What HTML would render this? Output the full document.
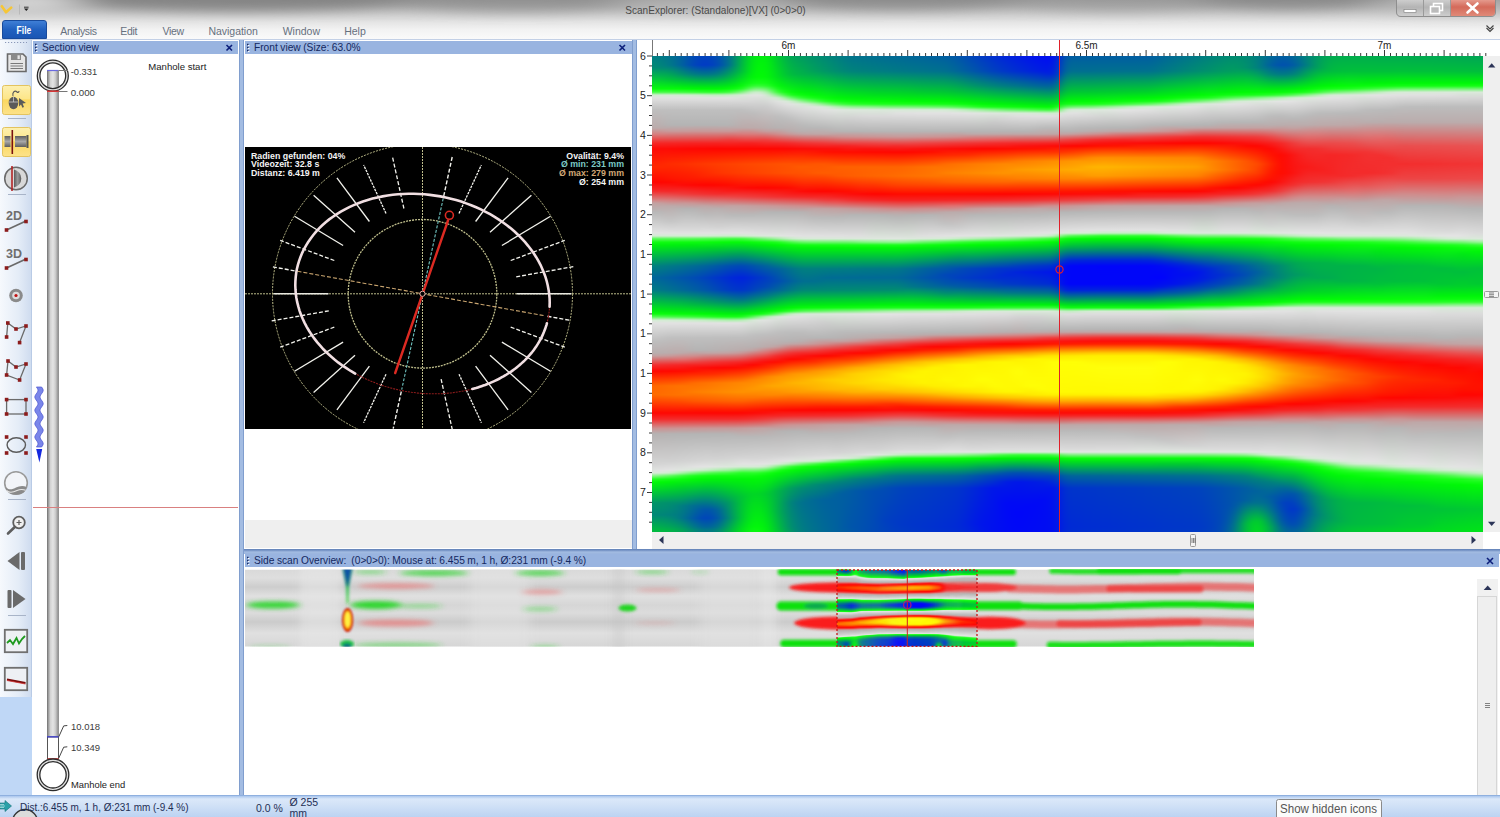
<!DOCTYPE html>
<html><head><meta charset="utf-8"><title>ScanExplorer</title>
<style>
*{box-sizing:border-box;margin:0;padding:0}
html,body{width:1500px;height:817px;overflow:hidden;background:#fff;font-family:"Liberation Sans",sans-serif;}
.a{position:absolute}
#title{left:0;top:0;width:1500px;height:40px;background:linear-gradient(#9c9c9c 0px,#aeaeae 6px,#cbcbcb 14px,#e4e4e4 22px,#f3f3f3 30px,#fbfbfb 40px);}
#ttext{left:0;top:3px;width:1430px;text-align:center;font-size:11px;color:#3a3a3a;letter-spacing:0.1px}
.menu{top:25px;font-size:10.5px;color:#66707e;letter-spacing:-0.35px}
#file{left:2px;top:20px;width:45px;height:19px;border-radius:3px 3px 0 0;background:linear-gradient(#3f7fd6,#2161c0 50%,#1a56b4);border:1px solid #174a9c;color:#fff;font-size:10.8px;letter-spacing:-0.4px;text-align:center;line-height:18px;}
#tb{left:0;top:40px;width:32px;height:657px;background:linear-gradient(90deg,#f6f9fd,#e4ecf7 60%,#cfdcef);border-right:1px solid #b9cbe6}
#tbb{left:0;top:697px;width:32px;height:98px;background:#bfd7f6}
.hdr{height:13px;background:#99b4e0;color:#14285f;font-size:10.2px;word-spacing:-0.3px;line-height:14px;white-space:nowrap;overflow:hidden}
.hdr span{position:absolute;left:9px;top:0}
.vs{width:5px;background:linear-gradient(90deg,#6f8fc4,#a3bce2 30%,#a3bce2 70%,#6f8fc4)}
.hs{height:5px;background:linear-gradient(#5f7fb5,#7f9ccc 35%,#a3bce2 60%,#9ab4de)}
.lbl{font-size:10.5px;color:#333;white-space:nowrap}
#status{left:0;top:795px;width:1500px;height:22px;background:linear-gradient(#a9c6ee 0,#dbe8f9 3px,#cfe0f6 50%,#bcd3f2);border-top:1px solid #8fb0df;font-size:12px;color:#1c2e5a}
</style></head><body>
<div class="a" id="title"></div>
<svg class="a" style="left:0;top:0" width="1500" height="40" viewBox="0 0 1500 40"><defs><filter id="tb1" x="-10%" y="-100%" width="120%" height="300%"><feGaussianBlur stdDeviation="22 6"/></filter><linearGradient id="fade" x1="0" y1="0" x2="0" y2="1"><stop offset="0" stop-color="#fff" stop-opacity="0"/><stop offset="0.55" stop-color="#fff" stop-opacity="0.55"/><stop offset="1" stop-color="#fff" stop-opacity="0.95"/></linearGradient></defs><g filter="url(#tb1)"><ellipse cx="30" cy="2" rx="50" ry="10" fill="#dadada" opacity="0.90"/><ellipse cx="240" cy="-2" rx="170" ry="13" fill="#7e7e7e" opacity="0.80"/><ellipse cx="520" cy="0" rx="120" ry="12" fill="#8a8a8a" opacity="0.60"/><ellipse cx="700" cy="3" rx="90" ry="10" fill="#b8b8b8" opacity="0.60"/><ellipse cx="900" cy="-2" rx="120" ry="12" fill="#858585" opacity="0.65"/><ellipse cx="1120" cy="0" rx="110" ry="12" fill="#9a9a9a" opacity="0.50"/><ellipse cx="1290" cy="-2" rx="90" ry="12" fill="#808080" opacity="0.60"/><ellipse cx="1440" cy="4" rx="60" ry="10" fill="#c0c0c0" opacity="0.60"/></g></svg>
<svg class="a" style="left:600px;top:0" width="240" height="20" font-family="Liberation Sans, sans-serif"><text x="25.3" y="14.4" font-size="10.2" fill="#4a4a4a" textLength="180.4" lengthAdjust="spacingAndGlyphs">ScanExplorer: (Standalone)[VX] (0&gt;0&gt;0)</text></svg>
<div class="a" id="file"></div><svg class="a" style="left:2px;top:20px" width="45" height="19" font-family="Liberation Sans, sans-serif"><text x="14.6" y="13.9" font-size="11.5" font-weight="bold" fill="#fff" textLength="14.6" lengthAdjust="spacingAndGlyphs">File</text></svg>
<div class="a menu" style="left:60.3px">Analysis</div>
<div class="a menu" style="left:120.3px">Edit</div>
<div class="a menu" style="left:162.5px">View</div>
<div class="a menu" style="left:208.4px;letter-spacing:-0.02px">Navigation</div>
<div class="a menu" style="left:282.7px;letter-spacing:0">Window</div>
<div class="a menu" style="left:344.3px;letter-spacing:-0.05px">Help</div>
<svg class="a" style="left:1390px;top:0" width="110" height="40" viewBox="1390 0 110 40"><defs><linearGradient id="cb" x1="0" y1="0" x2="0" y2="1"><stop offset="0" stop-color="#e9a79b"/><stop offset="0.5" stop-color="#d46a5a"/><stop offset="1" stop-color="#e08a78"/></linearGradient><linearGradient id="nb" x1="0" y1="0" x2="0" y2="1"><stop offset="0" stop-color="#d4d4d4"/><stop offset="0.5" stop-color="#b4b4b4"/><stop offset="1" stop-color="#cfcfcf"/></linearGradient></defs><path d="M1396.5 -2 V12 Q1396.5 16.5 1401 16.5 H1491 Q1495.5 16.5 1495.5 12 V-2Z" fill="url(#nb)" stroke="#8e8e8e" stroke-width="1"/><path d="M1450 -2 V16 H1491 Q1495 16 1495 12 V-2Z" fill="url(#cb)"/><path d="M1423.5 0 V16 M1450.5 0 V16" stroke="#9a9a9a" stroke-width="1"/><rect x="1404" y="9.5" width="12" height="3" fill="#fff" stroke="#7a7a7a" stroke-width="0.6"/><rect x="1433.5" y="3.5" width="9" height="7" fill="none" stroke="#fff" stroke-width="1.6"/><rect x="1430.5" y="6.5" width="9" height="7" fill="#bcbcbc" stroke="#fff" stroke-width="1.6"/><path d="M1467.5 3.5 L1477.5 12.5 M1477.5 3.5 L1467.5 12.5" stroke="#fff" stroke-width="2.6" stroke-linecap="round"/><path d="M1486.5 28 l3.5 3.5 l3.5 -3.5" stroke="#444" stroke-width="1.2" fill="none"/><path d="M1486.5 25.5 l3.5 3.5 l3.5 -3.5" stroke="#444" stroke-width="1.2" fill="none"/></svg><svg class="a" style="left:0;top:0" width="40" height="20" viewBox="0 0 40 20"><path d="M1.8 6.2 L6 12.3 L11.2 7.6" stroke="#f6c636" stroke-width="2.6" fill="none" stroke-linecap="round" stroke-linejoin="round"/><path d="M19.5 4.5 V14.5" stroke="#b8b8b8" stroke-width="1"/><path d="M24 7.2 H28.6" stroke="#333" stroke-width="1"/><path d="M24 8.6 L26.3 11 L28.6 8.6Z" fill="#222"/></svg>
<div class="a" style="left:0;top:39px;width:1500px;height:1px;background:#c3d0e6"></div>
<div class="a" id="tb"></div><div class="a" id="tbb"></div>
<svg class="a" style="left:0;top:40px" width="32" height="660" viewBox="0 40 32 660" font-family="Liberation Sans, sans-serif"><defs><linearGradient id="yb" x1="0" y1="0" x2="0" y2="1"><stop offset="0" stop-color="#fdf0b0"/><stop offset="0.45" stop-color="#fde68a"/><stop offset="0.5" stop-color="#fbd860"/><stop offset="1" stop-color="#fce28a"/></linearGradient><linearGradient id="gg" x1="0" y1="0" x2="1" y2="0"><stop offset="0" stop-color="#5a5a5a"/><stop offset="0.5" stop-color="#9a9a9a"/><stop offset="1" stop-color="#5a5a5a"/></linearGradient><linearGradient id="gv" x1="0" y1="0" x2="0" y2="1"><stop offset="0" stop-color="#5e5e5e"/><stop offset="0.5" stop-color="#a8a8a8"/><stop offset="1" stop-color="#5e5e5e"/></linearGradient></defs><path d="M5 42.5 H27" stroke="#8a98b8" stroke-width="1.2" stroke-dasharray="1.2 1.8"/><path d="M7.5 54 H23 L26 57 V71.5 H7.5Z" fill="#e6e6e6" stroke="#6a6a6a" stroke-width="1.6"/><rect x="11" y="54.5" width="10" height="5.5" fill="#8a8a8a"/><rect x="17.5" y="55.3" width="2.3" height="3.8" fill="#e6e6e6"/><path d="M10.5 63.5H23M10.5 66H23M10.5 68.5H23" stroke="#7a7a7a" stroke-width="1.1"/><rect x="2.5" y="85.5" width="28" height="29" rx="2" fill="url(#yb)" stroke="#e3c35f"/><ellipse cx="13.5" cy="103" rx="4.8" ry="6.2" fill="#5a5a5a"/><path d="M13.5 97 V102 M9 102 H18" stroke="#c8c8c8" stroke-width="0.8"/><path d="M13 96 C12 92 15 90 17 92 C18 93 19 92 19 91" stroke="#5a5a5a" stroke-width="1.1" fill="none"/><path d="M19 98 L26 103 L22.6 103.6 L24 107 L22.4 107.7 L21 104.4 L19 106.5Z" fill="#5a5a5a"/><path d="M8 118.5 H26" stroke="#a8b4c8" stroke-width="1"/><rect x="2.5" y="127.5" width="28" height="29" rx="2" fill="url(#yb)" stroke="#e3c35f"/><rect x="4.5" y="136" width="6" height="11" fill="url(#gv)"/><rect x="15" y="136" width="11.5" height="11" fill="url(#gv)"/><rect x="26.5" y="135" width="2" height="13" fill="#555"/><path d="M12.3 130 V154" stroke="#7a1010" stroke-width="1.6"/><circle cx="16" cy="178.5" r="11.3" fill="#d8d8d8" stroke="#6a6a6a" stroke-width="1.5"/><path d="M14 169.5 A9.2 9.2 0 0 1 14 187.5Z" fill="url(#gg)"/><path d="M12 166 V191" stroke="#b01818" stroke-width="1.5"/><path d="M8 194.5 H26" stroke="#a8b4c8" stroke-width="1"/><text x="6" y="220" font-size="12.5" font-weight="bold" fill="#6e6e6e">2D</text><path d="M6.5 230 L26 221" stroke="#6a6a6a" stroke-width="1.7"/><rect x="4.7" y="228.2" width="3.6" height="3.6" fill="#8c1c1c"/><rect x="24.2" y="219.7" width="3.6" height="3.6" fill="#8c1c1c"/><text x="6" y="258" font-size="12.5" font-weight="bold" fill="#6e6e6e">3D</text><path d="M6.5 268 L26 259" stroke="#6a6a6a" stroke-width="1.7"/><rect x="4.7" y="266.2" width="3.6" height="3.6" fill="#8c1c1c"/><rect x="24.2" y="257.7" width="3.6" height="3.6" fill="#8c1c1c"/><circle cx="16" cy="295.5" r="6.8" fill="#8a8a8a"/><circle cx="16" cy="295.5" r="3.8" fill="#dcdcdc"/><circle cx="16" cy="295.5" r="1.6" fill="#c01010"/><path d="M6.6 337 L7.8 323 L16 329 L26 326 L19.6 342.6" stroke="#6a6a6a" stroke-width="1.3" fill="none"/><rect x="4.8" y="335.2" width="3.6" height="3.6" fill="#8c1c1c"/><rect x="6.0" y="321.2" width="3.6" height="3.6" fill="#8c1c1c"/><rect x="14.2" y="327.2" width="3.6" height="3.6" fill="#8c1c1c"/><rect x="24.2" y="324.2" width="3.6" height="3.6" fill="#8c1c1c"/><rect x="17.8" y="340.8" width="3.6" height="3.6" fill="#8c1c1c"/><path d="M6.6 375 L8 361 L16 367 L26 364 L19.6 380Z" stroke="#6a6a6a" stroke-width="1.3" fill="none"/><rect x="4.8" y="373.2" width="3.6" height="3.6" fill="#8c1c1c"/><rect x="6.2" y="359.2" width="3.6" height="3.6" fill="#8c1c1c"/><rect x="14.2" y="365.2" width="3.6" height="3.6" fill="#8c1c1c"/><rect x="24.2" y="362.2" width="3.6" height="3.6" fill="#8c1c1c"/><rect x="17.8" y="378.2" width="3.6" height="3.6" fill="#8c1c1c"/><rect x="6.6" y="399.6" width="19.4" height="14.4" stroke="#6a6a6a" stroke-width="1.3" fill="none"/><rect x="4.8" y="397.8" width="3.6" height="3.6" fill="#8c1c1c"/><rect x="24.2" y="397.8" width="3.6" height="3.6" fill="#8c1c1c"/><rect x="4.8" y="412.2" width="3.6" height="3.6" fill="#8c1c1c"/><rect x="24.2" y="412.2" width="3.6" height="3.6" fill="#8c1c1c"/><ellipse cx="16.3" cy="445" rx="9.2" ry="7.2" stroke="#5a5a5a" stroke-width="1.4" fill="none"/><rect x="4.8" y="435.2" width="3.6" height="3.6" fill="#8c1c1c"/><rect x="24.2" y="435.2" width="3.6" height="3.6" fill="#8c1c1c"/><rect x="4.8" y="451.2" width="3.6" height="3.6" fill="#8c1c1c"/><rect x="24.2" y="451.2" width="3.6" height="3.6" fill="#8c1c1c"/><circle cx="16" cy="483" r="11.3" fill="#f2f4f8" stroke="#9a9a9a" stroke-width="1.6"/><path d="M5.5 487 C9 491 13 489 16 487.5 C19 486 23 485 26.5 487 L25 491 C22 496 10 496 7 491Z" fill="#8a8a8a"/><path d="M6.5 490.5 C10 494 14 492 17 490.5 C20 489.3 23 489.3 25.6 490.3" stroke="#e8e8e8" stroke-width="1.1" fill="none"/><path d="M8 499.5 H26" stroke="#a8b4c8" stroke-width="1"/><circle cx="19" cy="522.5" r="5.8" fill="#f0f0f0" stroke="#5e5e5e" stroke-width="1.8"/><path d="M14.8 527 L8 533.5" stroke="#5e5e5e" stroke-width="2.6" stroke-linecap="round"/><path d="M16.5 522.5 H21.5 M19 520 V525" stroke="#5e5e5e" stroke-width="1.2"/><path d="M7.5 561 L19.5 552 V570Z" fill="#6a6a6a"/><rect x="21" y="552" width="4" height="18" rx="1" fill="#6a6a6a"/><rect x="7.5" y="590" width="4" height="18" rx="1" fill="#6a6a6a"/><path d="M25.5 599 L13 590 V608Z" fill="#6a6a6a"/><path d="M8 615.5 H26" stroke="#a8b4c8" stroke-width="1"/><rect x="4.8" y="629.8" width="22.4" height="22.4" fill="#eef0f4" stroke="#707070" stroke-width="1.8"/><path d="M7 643 L10 640 L13 644 L16.5 638 L19 643.5 L22 639 L25 636" stroke="#1e9a1e" stroke-width="1.8" fill="none"/><rect x="4.8" y="667.8" width="22.4" height="22.4" fill="#eef0f4" stroke="#707070" stroke-width="1.8"/><path d="M7 679.5 L25.5 683" stroke="#7a0c0c" stroke-width="2"/><path d="M7 680.5 L25.5 684" stroke="#d03030" stroke-width="0.8"/></svg>
<!-- section view -->
<div class="a hdr" style="left:33px;top:41px;width:205px"><span>Section view</span></div>
<svg class="a" style="left:32px;top:54px" width="207" height="741" viewBox="32 54 207 741" font-family="Liberation Sans, sans-serif"><defs><linearGradient id="pg" x1="0" y1="0" x2="1" y2="0"><stop offset="0" stop-color="#6e6e6e"/><stop offset="0.12" stop-color="#9c9c9c"/><stop offset="0.3" stop-color="#d4d4d4"/><stop offset="0.5" stop-color="#e4e4e4"/><stop offset="0.7" stop-color="#cfcfcf"/><stop offset="0.88" stop-color="#a4a4a4"/><stop offset="1" stop-color="#6e6e6e"/></linearGradient></defs><rect x="47" y="70.5" width="11.8" height="666.2" fill="url(#pg)"/><path d="M47 70.5 H58.5" stroke="#6a6ae0" stroke-width="1.2"/><circle cx="52.8" cy="75.7" r="14.3" fill="none" stroke="#e2e2e2" stroke-width="2.4"/><circle cx="52.8" cy="75.7" r="15.5" fill="none" stroke="#2c2c2c" stroke-width="1.3"/><circle cx="52.8" cy="75.7" r="12.9" fill="none" stroke="#2c2c2c" stroke-width="1.3"/><path d="M47 91.2 H58.8" stroke="#e03030" stroke-width="1.4"/><path d="M58.5 70.5 H68 M59 91.5 H67.5" stroke="#777" stroke-width="1" fill="none"/><rect x="47.5" y="737" width="11" height="22" fill="#fff" stroke="#444" stroke-width="0.9"/><path d="M47 736.8 H58.8" stroke="#4040d0" stroke-width="1.3"/><path d="M47.5 759 H58.5" stroke="#e03030" stroke-width="1.5"/><circle cx="53" cy="774.8" r="14.5" fill="none" stroke="#e2e2e2" stroke-width="2.4"/><circle cx="53" cy="774.8" r="15.8" fill="none" stroke="#2c2c2c" stroke-width="1.3"/><circle cx="53" cy="774.8" r="13.2" fill="none" stroke="#2c2c2c" stroke-width="1.3"/><path d="M58.8 736.7 L63.7 725.9 L67.3 725.5 M58.8 758 L63.7 747.2 L67.3 746.8" stroke="#444" stroke-width="1" fill="none"/><text x="70.7" y="75.2" font-size="8.6" fill="#3c3c3c" textLength="26.5" lengthAdjust="spacingAndGlyphs">-0.331</text><text x="70.7" y="95.6" font-size="8.6" fill="#3c3c3c" textLength="24.3" lengthAdjust="spacingAndGlyphs">0.000</text><text x="148.3" y="69.5" font-size="9.6" fill="#222" textLength="58.0" lengthAdjust="spacingAndGlyphs">Manhole start</text><text x="71.0" y="730.2" font-size="8.6" fill="#3c3c3c" textLength="29.0" lengthAdjust="spacingAndGlyphs">10.018</text><text x="71.0" y="751.2" font-size="8.6" fill="#3c3c3c" textLength="29.0" lengthAdjust="spacingAndGlyphs">10.349</text><text x="71.0" y="788.0" font-size="9.6" fill="#222" textLength="54.3" lengthAdjust="spacingAndGlyphs">Manhole end</text><path d="M33 507.5 H238" stroke="#d98080" stroke-width="1"/><path d="M36.4 387.0 L37.1 388.0 L37.7 389.0 L38.0 390.0 L37.9 391.0 L37.5 392.0 L36.9 393.0 L36.1 394.0 L35.5 395.0 L35.0 396.0 L34.8 397.0 L35.0 398.0 L35.5 399.0 L36.1 400.0 L36.9 401.0 L37.5 402.0 L37.9 403.0 L38.0 404.0 L37.7 405.0 L37.1 406.0 L36.4 407.0 L35.7 408.0 L35.1 409.0 L34.8 410.0 L34.9 411.0 L35.3 412.0 L35.9 413.0 L36.7 414.0 L37.3 415.0 L37.8 416.0 L38.0 417.0 L37.8 418.0 L37.3 419.0 L36.7 420.0 L35.9 421.0 L35.3 422.0 L34.9 423.0 L34.8 424.0 L35.1 425.0 L35.7 426.0 L36.4 427.0 L37.1 428.0 L37.7 429.0 L38.0 430.0 L37.9 431.0 L37.5 432.0 L36.9 433.0 L36.1 434.0 L35.5 435.0 L35.0 436.0 L34.8 437.0 L35.0 438.0 L35.5 439.0 L36.1 440.0 L36.9 441.0 L37.5 442.0 L37.9 443.0 L38.0 444.0 L37.7 445.0 L37.1 446.0 L36.4 447.0 L41.6 447.0 L42.3 446.0 L42.9 445.0 L43.2 444.0 L43.1 443.0 L42.7 442.0 L42.1 441.0 L41.3 440.0 L40.7 439.0 L40.2 438.0 L40.0 437.0 L40.2 436.0 L40.7 435.0 L41.3 434.0 L42.1 433.0 L42.7 432.0 L43.1 431.0 L43.2 430.0 L42.9 429.0 L42.3 428.0 L41.6 427.0 L40.9 426.0 L40.3 425.0 L40.0 424.0 L40.1 423.0 L40.5 422.0 L41.1 421.0 L41.9 420.0 L42.5 419.0 L43.0 418.0 L43.2 417.0 L43.0 416.0 L42.5 415.0 L41.9 414.0 L41.1 413.0 L40.5 412.0 L40.1 411.0 L40.0 410.0 L40.3 409.0 L40.9 408.0 L41.6 407.0 L42.3 406.0 L42.9 405.0 L43.2 404.0 L43.1 403.0 L42.7 402.0 L42.1 401.0 L41.3 400.0 L40.7 399.0 L40.2 398.0 L40.0 397.0 L40.2 396.0 L40.7 395.0 L41.3 394.0 L42.1 393.0 L42.7 392.0 L43.1 391.0 L43.2 390.0 L42.9 389.0 L42.3 388.0 L41.6 387.0 Z" fill="#7a86ea" stroke="#4a55d0" stroke-width="0.7"/><path d="M36.2 449 L42.2 449 L39.4 462.5Z" fill="#1428e0"/></svg>
<div class="a vs" style="left:239px;top:40px;height:755px"></div>
<!-- front view -->
<div class="a hdr" style="left:245px;top:41px;width:387px"><span>Front view (Size: 63.0%</span></div>
<div class="a" style="left:245px;top:520px;width:387px;height:28px;background:#efefef"></div>
<svg class="a" style="left:245px;top:147px" width="386" height="282" viewBox="245 147 386 282" font-family="Liberation Sans, sans-serif"><rect x="245" y="147" width="386" height="282" fill="#000"/><path d="M245 293.8 H631 M422.5 147 V429" stroke="#bdbc8a" stroke-width="1" stroke-dasharray="2 1" fill="none"/><circle cx="422.5" cy="293.8" r="150" fill="none" stroke="#bdbc8a" stroke-width="1" stroke-dasharray="2 1.2"/><circle cx="422.5" cy="293.8" r="74.3" fill="none" stroke="#bdbc8a" stroke-width="1.3" stroke-dasharray="2 1"/><path d="M459.0 213.4 L481.4 164.9" stroke="#f2f2ec" stroke-width="1.3" stroke-dasharray="2.5 1"/><path d="M475.6 221.5 L508.1 177.8" stroke="#f2f2ec" stroke-width="1.3"/><path d="M490.0 232.3 L531.4 195.2" stroke="#f2f2ec" stroke-width="1.3"/><path d="M501.9 245.5 L550.5 216.3" stroke="#f2f2ec" stroke-width="1.3"/><path d="M510.7 260.5 L564.8 240.4" stroke="#f2f2ec" stroke-width="1.3" stroke-dasharray="4 2"/><path d="M516.2 276.8 L573.5 266.6" stroke="#f2f2ec" stroke-width="1.3" stroke-dasharray="4 2"/><path d="M516.5 293.8 L571.5 293.8" stroke="#e8e8e0" stroke-width="1.6"/><path d="M510.7 327.1 L564.8 347.2" stroke="#f2f2ec" stroke-width="1.3" stroke-dasharray="4 2"/><path d="M501.9 342.1 L550.5 371.3" stroke="#f2f2ec" stroke-width="1.3"/><path d="M490.0 355.3 L531.4 392.4" stroke="#f2f2ec" stroke-width="1.3"/><path d="M475.6 366.1 L508.1 409.8" stroke="#f2f2ec" stroke-width="1.3"/><path d="M459.0 374.2 L481.4 422.7" stroke="#f2f2ec" stroke-width="1.3" stroke-dasharray="2.5 1"/><path d="M441.1 379.1 L452.5 430.6" stroke="#f2f2ec" stroke-width="1.3" stroke-dasharray="4 2"/><path d="M386.0 374.2 L363.6 422.7" stroke="#f2f2ec" stroke-width="1.3" stroke-dasharray="2.5 1"/><path d="M369.4 366.1 L336.9 409.8" stroke="#f2f2ec" stroke-width="1.3"/><path d="M355.0 355.3 L313.6 392.4" stroke="#f2f2ec" stroke-width="1.3"/><path d="M343.1 342.1 L294.5 371.3" stroke="#f2f2ec" stroke-width="1.3"/><path d="M334.3 327.1 L280.2 347.2" stroke="#f2f2ec" stroke-width="1.3" stroke-dasharray="4 2"/><path d="M328.8 310.8 L271.5 321.0" stroke="#f2f2ec" stroke-width="1.3" stroke-dasharray="4 2"/><path d="M328.5 293.8 L273.5 293.8" stroke="#e8e8e0" stroke-width="1.6"/><path d="M334.3 260.5 L280.2 240.4" stroke="#f2f2ec" stroke-width="1.3" stroke-dasharray="4 2"/><path d="M343.1 245.5 L294.5 216.3" stroke="#f2f2ec" stroke-width="1.3"/><path d="M355.0 232.3 L313.6 195.2" stroke="#f2f2ec" stroke-width="1.3"/><path d="M369.4 221.5 L336.9 177.8" stroke="#f2f2ec" stroke-width="1.3"/><path d="M386.0 213.4 L363.6 164.9" stroke="#f2f2ec" stroke-width="1.3" stroke-dasharray="2.5 1"/><path d="M403.9 208.5 L392.5 157.0" stroke="#f2f2ec" stroke-width="1.3" stroke-dasharray="4 2"/><path d="M297.5 271.3 L545.5 315.9" stroke="#c9a56f" stroke-width="1.1" stroke-dasharray="4 2"/><path d="M272.9 266.9 L295.5 271.0 M547.5 316.3 L571.1 320.5" stroke="#f2f2ec" stroke-width="1.4" stroke-dasharray="4 2"/><path d="M443.2 198.5 L401.7 389.6" stroke="#6fc3c0" stroke-width="1.1" stroke-dasharray="3 1.6"/><path d="M452.2 157.0 L443.5 197.1 M401.3 391.5 L393.2 428.6" stroke="#f2f2ec" stroke-width="1.4" stroke-dasharray="4 2"/><path d="M548.5 316.5 L547.4 321.5 L546.0 326.5 L544.2 331.4 L542.1 336.2 L539.6 340.9 L536.9 345.5 L533.8 349.9 L530.5 354.1 L526.8 358.2 L522.8 362.1 L518.6 365.9 L514.1 369.4 L509.4 372.7 L504.4 375.8 L499.2 378.7 L493.8 381.4 L488.2 383.8 L482.4 386.0 L476.4 387.9 L470.3 389.5 L464.1 390.9 L457.7 392.0 L451.3 392.9 L444.8 393.5 L438.2 393.8 L431.5 393.8 L424.9 393.6 L418.2 393.1 L411.6 392.3 L405.0 391.2 L398.4 389.9 L391.9 388.3 L385.5 386.5 L379.2 384.4 L373.0 382.0 L366.9 379.5 L361.0 376.6 L355.2 373.6 L349.7 370.3 L344.3 366.8 L339.2 363.2 L334.3 359.3 L329.6 355.3 L325.2 351.0 L321.0 346.7 L317.2 342.2 L313.6 337.5 L310.3 332.7 L307.3 327.9 L304.6 322.9 L302.3 317.8 L300.3 312.7 L298.6 307.6 L297.3 302.4 L296.3 297.1 L295.6 291.9 L295.3 286.7 L295.4 281.4 L295.8 276.3 L296.5 271.1 L297.6 266.1 L299.0 261.1 L300.8 256.2 L302.9 251.4 L305.4 246.7 L308.1 242.1 L311.2 237.7 L314.5 233.5 L318.2 229.4 L322.2 225.5 L326.4 221.7 L330.9 218.2 L335.6 214.9 L340.6 211.8 L345.8 208.9 L351.2 206.2 L356.8 203.8 L362.6 201.6 L368.6 199.7 L374.7 198.1 L380.9 196.7 L387.3 195.6 L393.7 194.7 L400.2 194.1 L406.8 193.8 L413.5 193.8 L420.1 194.0 L426.8 194.5 L433.4 195.3 L440.0 196.4 L446.6 197.7 L453.1 199.3 L459.5 201.1 L465.8 203.2 L472.0 205.6 L478.1 208.1 L484.0 211.0 L489.8 214.0 L495.3 217.3 L500.7 220.8 L505.8 224.4 L510.7 228.3 L515.4 232.3 L519.8 236.6 L524.0 240.9 L527.8 245.4 L531.4 250.1 L534.7 254.9 L537.7 259.7 L540.4 264.7 L542.7 269.8 L544.7 274.9 L546.4 280.0 L547.7 285.2 L548.7 290.5 L549.4 295.7 L549.7 300.9 L549.6 306.2 L549.2 311.3 L548.5 316.5" stroke="#8e1c1c" stroke-width="1.1" stroke-dasharray="2 1" fill="none"/><path d="M546.9 323.2 L546.5 324.8 L546.0 326.3 L545.5 327.8 L545.0 329.3 L544.4 330.8 L543.8 332.3 L543.2 333.7 L542.6 335.2 L541.9 336.6 L541.2 338.1 L540.4 339.5 L539.6 340.9 L538.8 342.3 L538.0 343.7 L537.1 345.1 L536.2 346.5 L535.3 347.8 L534.3 349.2 L533.4 350.5 L532.4 351.8 L531.3 353.1 L530.2 354.4 L529.1 355.7 L528.0 356.9 L526.9 358.1 L525.7 359.4 L524.5 360.6 L523.3 361.7 L522.0 362.9 L520.7 364.1 L519.4 365.2 L518.1 366.3 L516.7 367.4 L515.4 368.5 L514.0 369.5 L512.5 370.6 L511.1 371.6 L509.6 372.6 L508.1 373.5 L506.6 374.5 L505.1 375.4 L503.5 376.4 L501.9 377.2 L500.3 378.1 L498.7 379.0 L497.1 379.8 L495.4 380.6 L493.7 381.4 L492.0 382.1 L490.3 382.9 L488.6 383.6 L486.9 384.3 L485.1 385.0 L483.3 385.6 L481.5 386.2 L479.7 386.8 L477.9 387.4 L476.0 388.0 L474.2 388.5 L472.3 389.0" stroke="#f1dfe2" stroke-width="2.6" fill="none" stroke-linecap="round"/><path d="M355.2 373.6 L350.7 371.0 L346.4 368.2 L342.2 365.4 L338.1 362.4 L334.2 359.3 L330.5 356.0 L326.9 352.7 L323.4 349.3 L320.2 345.7 L317.1 342.1 L314.2 338.4 L311.5 334.6 L309.0 330.7 L306.7 326.8 L304.6 322.8 L302.7 318.8 L301.0 314.7 L299.5 310.6 L298.3 306.4 L297.2 302.2 L296.4 298.0 L295.8 293.9 L295.5 289.7 L295.3 285.5 L295.4 281.3 L295.7 277.2 L296.2 273.0 L296.9 268.9 L297.9 264.9 L299.1 260.9 L300.5 257.0 L302.1 253.1 L303.9 249.3 L306.0 245.6 L308.2 242.0 L310.7 238.4 L313.3 235.0 L316.1 231.6 L319.1 228.4 L322.3 225.3 L325.7 222.3 L329.2 219.4 L333.0 216.7 L336.8 214.1 L340.8 211.6 L345.0 209.3 L349.3 207.1 L353.7 205.1 L358.3 203.3 L362.9 201.6 L367.7 200.0 L372.5 198.6 L377.5 197.4 L382.5 196.4 L387.6 195.5 L392.8 194.8 L398.0 194.3 L403.2 194.0 L408.5 193.8 L413.8 193.8 L419.2 194.0 L424.5 194.3 L429.8 194.9 L435.1 195.6 L440.4 196.4 L445.7 197.5 L450.9 198.7 L456.1 200.1 L461.2 201.6 L466.2 203.4 L471.2 205.2 L476.1 207.2 L480.9 209.4 L485.6 211.8 L490.1 214.2 L494.6 216.8 L498.9 219.6 L503.1 222.5 L507.2 225.5 L511.1 228.6 L514.8 231.8 L518.4 235.2 L521.8 238.6 L525.1 242.2 L528.1 245.8 L531.0 249.5 L533.7 253.3 L536.2 257.2 L538.5 261.1 L540.6 265.1 L542.4 269.2 L544.1 273.3 L545.6 277.4 L546.8 281.5 L547.8 285.7 L548.6 289.9 L549.2 294.1 L549.6 298.3 L549.7 302.5 L549.6 306.6" stroke="#f1dfe2" stroke-width="2.6" fill="none" stroke-linecap="round"/><path d="M395.2 373 L448 220.5" stroke="#dc2a22" stroke-width="2.4" stroke-linecap="round"/><circle cx="449.4" cy="215.3" r="4" fill="none" stroke="#dc2a22" stroke-width="1.6"/><circle cx="422.5" cy="293.8" r="2.6" fill="#000" stroke="#e9b0a8" stroke-width="1"/><text x="251" y="158.6" font-size="8.8" font-weight="bold" fill="#f4f4f4">Radien gefunden: 04%</text><text x="251" y="167.4" font-size="8.8" font-weight="bold" fill="#f4f4f4">Videozeit: 32.8 s</text><text x="251" y="176.3" font-size="8.8" font-weight="bold" fill="#f4f4f4">Distanz: 6.419 m</text><text x="624" y="158.6" font-size="8.8" font-weight="bold" fill="#f4f4f4" text-anchor="end">Ovalität: 9.4%</text><text x="624" y="167.4" font-size="8.8" font-weight="bold" fill="#7cc9c6" text-anchor="end">Ø min: 231 mm</text><text x="624" y="176.3" font-size="8.8" font-weight="bold" fill="#d2a877" text-anchor="end">Ø max: 279 mm</text><text x="624" y="185.1" font-size="8.8" font-weight="bold" fill="#f4f4f4" text-anchor="end">Ø: 254 mm</text></svg>
<div class="a vs" style="left:632px;top:40px;height:509px"></div>
<!-- heat -->
<div class="a" style="left:637px;top:40px;width:863px;height:16px;background:#fff"></div><div class="a" style="left:637px;top:40px;width:15px;height:509px;background:#fff"></div><div class="a" style="left:1483px;top:56px;width:17px;height:476px;background:#efefef"></div><div class="a" style="left:652px;top:532px;width:831px;height:17px;background:#efefef"></div><div class="a" style="left:1483px;top:532px;width:17px;height:17px;background:#fff"></div><svg class="a" style="left:652px;top:56px" width="831" height="476" viewBox="0 0 831 476"><defs><filter id="hb" x="-5%" y="0" width="110%" height="100%" color-interpolation-filters="sRGB"><feGaussianBlur stdDeviation="6 0"/></filter><linearGradient id="h0" x1="0" y1="0" x2="0" y2="1"><stop offset="0" stop-color="#007c82"/><stop offset="0.025" stop-color="#008c71"/><stop offset="0.069" stop-color="#07fb0b"/><stop offset="0.076" stop-color="#43fb43"/><stop offset="0.082" stop-color="#d1ecd1"/><stop offset="0.088" stop-color="#e1e1e1"/><stop offset="0.113" stop-color="#bfbfbf"/><stop offset="0.151" stop-color="#bbabab"/><stop offset="0.164" stop-color="#d78181"/><stop offset="0.183" stop-color="#f52827"/><stop offset="0.195" stop-color="#fd0b07"/><stop offset="0.233" stop-color="#ff2700"/><stop offset="0.265" stop-color="#fe0702"/><stop offset="0.284" stop-color="#f32d2d"/><stop offset="0.303" stop-color="#d48686"/><stop offset="0.309" stop-color="#c2a2a2"/><stop offset="0.328" stop-color="#b8b8b8"/><stop offset="0.372" stop-color="#e3e3e3"/><stop offset="0.378" stop-color="#d4ecd4"/><stop offset="0.384" stop-color="#5af95a"/><stop offset="0.391" stop-color="#10fd13"/><stop offset="0.397" stop-color="#00f30b"/><stop offset="0.441" stop-color="#00827c"/><stop offset="0.466" stop-color="#006897"/><stop offset="0.492" stop-color="#007d82"/><stop offset="0.536" stop-color="#00f10d"/><stop offset="0.542" stop-color="#0ffc11"/><stop offset="0.548" stop-color="#5af95a"/><stop offset="0.555" stop-color="#d5ecd5"/><stop offset="0.561" stop-color="#e2e2e2"/><stop offset="0.599" stop-color="#bebebe"/><stop offset="0.624" stop-color="#b8afaf"/><stop offset="0.63" stop-color="#c2a2a2"/><stop offset="0.649" stop-color="#f23232"/><stop offset="0.662" stop-color="#fe0904"/><stop offset="0.693" stop-color="#ff6500"/><stop offset="0.712" stop-color="#ff6a00"/><stop offset="0.75" stop-color="#fe0803"/><stop offset="0.763" stop-color="#f42b2a"/><stop offset="0.782" stop-color="#cd9090"/><stop offset="0.794" stop-color="#b6b2b2"/><stop offset="0.857" stop-color="#d3d3d3"/><stop offset="0.876" stop-color="#dce8dc"/><stop offset="0.882" stop-color="#95f395"/><stop offset="0.889" stop-color="#25fe25"/><stop offset="0.895" stop-color="#05fb09"/><stop offset="0.939" stop-color="#009567"/><stop offset="0.964" stop-color="#008875"/><stop offset="0.996" stop-color="#00bb3f"/></linearGradient><linearGradient id="h1" x1="0" y1="0" x2="0" y2="1"><stop offset="0" stop-color="#007c82"/><stop offset="0.025" stop-color="#008c71"/><stop offset="0.069" stop-color="#07fb0b"/><stop offset="0.076" stop-color="#43fb43"/><stop offset="0.082" stop-color="#d1ecd1"/><stop offset="0.088" stop-color="#e1e1e1"/><stop offset="0.113" stop-color="#bfbfbf"/><stop offset="0.151" stop-color="#bbabab"/><stop offset="0.164" stop-color="#d78181"/><stop offset="0.183" stop-color="#f52827"/><stop offset="0.195" stop-color="#fd0b07"/><stop offset="0.233" stop-color="#ff2700"/><stop offset="0.265" stop-color="#fe0702"/><stop offset="0.284" stop-color="#f32d2d"/><stop offset="0.303" stop-color="#d48686"/><stop offset="0.309" stop-color="#c2a2a2"/><stop offset="0.328" stop-color="#b8b8b8"/><stop offset="0.372" stop-color="#e3e3e3"/><stop offset="0.378" stop-color="#d4ecd4"/><stop offset="0.384" stop-color="#5af95a"/><stop offset="0.391" stop-color="#10fd13"/><stop offset="0.397" stop-color="#00f30b"/><stop offset="0.441" stop-color="#00827c"/><stop offset="0.466" stop-color="#006897"/><stop offset="0.492" stop-color="#007d82"/><stop offset="0.536" stop-color="#00f10d"/><stop offset="0.542" stop-color="#0ffc11"/><stop offset="0.548" stop-color="#5af95a"/><stop offset="0.555" stop-color="#d5ecd5"/><stop offset="0.561" stop-color="#e2e2e2"/><stop offset="0.599" stop-color="#bebebe"/><stop offset="0.624" stop-color="#b8afaf"/><stop offset="0.63" stop-color="#c2a2a2"/><stop offset="0.649" stop-color="#f23232"/><stop offset="0.662" stop-color="#fe0904"/><stop offset="0.693" stop-color="#ff6500"/><stop offset="0.712" stop-color="#ff6a00"/><stop offset="0.75" stop-color="#fe0803"/><stop offset="0.763" stop-color="#f42b2a"/><stop offset="0.782" stop-color="#cd9090"/><stop offset="0.794" stop-color="#b6b2b2"/><stop offset="0.857" stop-color="#d3d3d3"/><stop offset="0.876" stop-color="#dce8dc"/><stop offset="0.882" stop-color="#95f395"/><stop offset="0.889" stop-color="#25fe25"/><stop offset="0.895" stop-color="#05fb09"/><stop offset="0.939" stop-color="#009567"/><stop offset="0.964" stop-color="#008875"/><stop offset="0.996" stop-color="#00bb3f"/></linearGradient><linearGradient id="h2" x1="0" y1="0" x2="0" y2="1"><stop offset="0" stop-color="#007b84"/><stop offset="0.025" stop-color="#008a73"/><stop offset="0.069" stop-color="#07fb0b"/><stop offset="0.076" stop-color="#44fb44"/><stop offset="0.082" stop-color="#d2ecd2"/><stop offset="0.088" stop-color="#e1e1e1"/><stop offset="0.113" stop-color="#bfbfbf"/><stop offset="0.151" stop-color="#bbabab"/><stop offset="0.164" stop-color="#d78080"/><stop offset="0.183" stop-color="#f52726"/><stop offset="0.195" stop-color="#fd0b07"/><stop offset="0.233" stop-color="#ff2900"/><stop offset="0.265" stop-color="#ff0500"/><stop offset="0.284" stop-color="#f42b2b"/><stop offset="0.303" stop-color="#d58383"/><stop offset="0.309" stop-color="#c3a1a1"/><stop offset="0.328" stop-color="#b8b8b8"/><stop offset="0.372" stop-color="#e3e3e3"/><stop offset="0.378" stop-color="#d4ecd4"/><stop offset="0.384" stop-color="#59f959"/><stop offset="0.391" stop-color="#10fd12"/><stop offset="0.397" stop-color="#00f20c"/><stop offset="0.441" stop-color="#007f7f"/><stop offset="0.466" stop-color="#00649b"/><stop offset="0.492" stop-color="#007986"/><stop offset="0.536" stop-color="#00ef0e"/><stop offset="0.542" stop-color="#0dfc10"/><stop offset="0.548" stop-color="#55f955"/><stop offset="0.555" stop-color="#d4ecd4"/><stop offset="0.561" stop-color="#e2e2e2"/><stop offset="0.599" stop-color="#bebebe"/><stop offset="0.624" stop-color="#b9aeae"/><stop offset="0.63" stop-color="#c3a0a0"/><stop offset="0.649" stop-color="#f22f2f"/><stop offset="0.662" stop-color="#fe0702"/><stop offset="0.693" stop-color="#ff6800"/><stop offset="0.712" stop-color="#ff6c00"/><stop offset="0.75" stop-color="#fe0803"/><stop offset="0.763" stop-color="#f42b2b"/><stop offset="0.782" stop-color="#cd9191"/><stop offset="0.794" stop-color="#b5b2b2"/><stop offset="0.857" stop-color="#d4d4d4"/><stop offset="0.87" stop-color="#e1e1e1"/><stop offset="0.876" stop-color="#d9e9d9"/><stop offset="0.889" stop-color="#1cff1c"/><stop offset="0.895" stop-color="#01fa06"/><stop offset="0.939" stop-color="#009468"/><stop offset="0.964" stop-color="#008776"/><stop offset="0.996" stop-color="#00b941"/></linearGradient><linearGradient id="h3" x1="0" y1="0" x2="0" y2="1"><stop offset="0" stop-color="#00738c"/><stop offset="0.019" stop-color="#007887"/><stop offset="0.05" stop-color="#00c238"/><stop offset="0.069" stop-color="#07fb0b"/><stop offset="0.076" stop-color="#43fb43"/><stop offset="0.082" stop-color="#d3ecd3"/><stop offset="0.088" stop-color="#e1e1e1"/><stop offset="0.113" stop-color="#bfbfbf"/><stop offset="0.145" stop-color="#b4b4b4"/><stop offset="0.158" stop-color="#c69c9c"/><stop offset="0.183" stop-color="#f52625"/><stop offset="0.195" stop-color="#fe0a05"/><stop offset="0.227" stop-color="#ff2c00"/><stop offset="0.258" stop-color="#ff1400"/><stop offset="0.265" stop-color="#ff0800"/><stop offset="0.284" stop-color="#f42828"/><stop offset="0.303" stop-color="#d87f7f"/><stop offset="0.315" stop-color="#bbabab"/><stop offset="0.347" stop-color="#c4c4c4"/><stop offset="0.372" stop-color="#e2e2e2"/><stop offset="0.378" stop-color="#d4ecd4"/><stop offset="0.384" stop-color="#57f957"/><stop offset="0.391" stop-color="#0ffc11"/><stop offset="0.397" stop-color="#00f10d"/><stop offset="0.441" stop-color="#007986"/><stop offset="0.466" stop-color="#005ca3"/><stop offset="0.492" stop-color="#00718e"/><stop offset="0.536" stop-color="#00ec11"/><stop offset="0.542" stop-color="#0afc0d"/><stop offset="0.548" stop-color="#4cfa4c"/><stop offset="0.555" stop-color="#d2ecd2"/><stop offset="0.561" stop-color="#e2e2e2"/><stop offset="0.592" stop-color="#bfbfbf"/><stop offset="0.624" stop-color="#baacac"/><stop offset="0.63" stop-color="#c79b9b"/><stop offset="0.649" stop-color="#f42a2a"/><stop offset="0.662" stop-color="#ff0700"/><stop offset="0.693" stop-color="#ff6e00"/><stop offset="0.712" stop-color="#ff7000"/><stop offset="0.75" stop-color="#fe0803"/><stop offset="0.763" stop-color="#f42b2b"/><stop offset="0.782" stop-color="#cc9292"/><stop offset="0.794" stop-color="#b5b3b3"/><stop offset="0.851" stop-color="#d0d0d0"/><stop offset="0.87" stop-color="#e3e3e3"/><stop offset="0.876" stop-color="#cfedcf"/><stop offset="0.882" stop-color="#5ef95e"/><stop offset="0.889" stop-color="#13fd15"/><stop offset="0.895" stop-color="#00f509"/><stop offset="0.939" stop-color="#008f6d"/><stop offset="0.964" stop-color="#00827c"/><stop offset="0.989" stop-color="#00a556"/><stop offset="0.996" stop-color="#00b347"/></linearGradient><linearGradient id="h4" x1="0" y1="0" x2="0" y2="1"><stop offset="0" stop-color="#00609f"/><stop offset="0.019" stop-color="#00619e"/><stop offset="0.038" stop-color="#008e6e"/><stop offset="0.063" stop-color="#00e716"/><stop offset="0.069" stop-color="#04fb08"/><stop offset="0.076" stop-color="#3dfc3d"/><stop offset="0.082" stop-color="#d0ecd0"/><stop offset="0.088" stop-color="#e1e1e1"/><stop offset="0.113" stop-color="#bfbfbf"/><stop offset="0.145" stop-color="#b4b4b4"/><stop offset="0.158" stop-color="#c79a9a"/><stop offset="0.183" stop-color="#f52524"/><stop offset="0.195" stop-color="#fe0804"/><stop offset="0.227" stop-color="#ff2f00"/><stop offset="0.258" stop-color="#ff1700"/><stop offset="0.271" stop-color="#fd0b07"/><stop offset="0.29" stop-color="#ef3c3c"/><stop offset="0.309" stop-color="#c89898"/><stop offset="0.321" stop-color="#b4b4b4"/><stop offset="0.366" stop-color="#dadada"/><stop offset="0.372" stop-color="#e2e2e2"/><stop offset="0.378" stop-color="#d4ecd4"/><stop offset="0.384" stop-color="#55fa55"/><stop offset="0.391" stop-color="#0efc10"/><stop offset="0.397" stop-color="#00ef0e"/><stop offset="0.441" stop-color="#00738c"/><stop offset="0.466" stop-color="#0054ab"/><stop offset="0.492" stop-color="#006996"/><stop offset="0.536" stop-color="#00ea13"/><stop offset="0.542" stop-color="#07fb0b"/><stop offset="0.548" stop-color="#43fb43"/><stop offset="0.555" stop-color="#ccedcc"/><stop offset="0.561" stop-color="#e2e2e2"/><stop offset="0.592" stop-color="#bfbfbf"/><stop offset="0.624" stop-color="#bcaaaa"/><stop offset="0.637" stop-color="#e07272"/><stop offset="0.649" stop-color="#f52626"/><stop offset="0.662" stop-color="#ff0b00"/><stop offset="0.693" stop-color="#ff7300"/><stop offset="0.712" stop-color="#ff7400"/><stop offset="0.731" stop-color="#ff3e00"/><stop offset="0.75" stop-color="#fe0803"/><stop offset="0.763" stop-color="#f32c2b"/><stop offset="0.782" stop-color="#cb9494"/><stop offset="0.794" stop-color="#b4b4b4"/><stop offset="0.851" stop-color="#d2d2d2"/><stop offset="0.87" stop-color="#dfe6df"/><stop offset="0.876" stop-color="#a7f1a7"/><stop offset="0.882" stop-color="#39fc39"/><stop offset="0.889" stop-color="#0afc0e"/><stop offset="0.901" stop-color="#00df1c"/><stop offset="0.945" stop-color="#007e80"/><stop offset="0.971" stop-color="#007688"/><stop offset="0.996" stop-color="#00a456"/></linearGradient><linearGradient id="h5" x1="0" y1="0" x2="0" y2="1"><stop offset="0" stop-color="#0048b7"/><stop offset="0.019" stop-color="#0044bb"/><stop offset="0.038" stop-color="#007b83"/><stop offset="0.063" stop-color="#00e319"/><stop offset="0.069" stop-color="#01fa06"/><stop offset="0.076" stop-color="#36fd36"/><stop offset="0.082" stop-color="#cdedcd"/><stop offset="0.088" stop-color="#e1e1e1"/><stop offset="0.113" stop-color="#bfbfbf"/><stop offset="0.145" stop-color="#b4b4b4"/><stop offset="0.158" stop-color="#c89999"/><stop offset="0.183" stop-color="#f62423"/><stop offset="0.195" stop-color="#fe0702"/><stop offset="0.227" stop-color="#ff3400"/><stop offset="0.258" stop-color="#ff1a00"/><stop offset="0.271" stop-color="#fe0803"/><stop offset="0.29" stop-color="#f03636"/><stop offset="0.309" stop-color="#cb9494"/><stop offset="0.321" stop-color="#b4b4b4"/><stop offset="0.366" stop-color="#dadada"/><stop offset="0.372" stop-color="#e2e2e2"/><stop offset="0.378" stop-color="#d4ecd4"/><stop offset="0.384" stop-color="#54fa54"/><stop offset="0.391" stop-color="#0dfc10"/><stop offset="0.397" stop-color="#00ee0f"/><stop offset="0.441" stop-color="#006c93"/><stop offset="0.466" stop-color="#004cb3"/><stop offset="0.492" stop-color="#00609f"/><stop offset="0.523" stop-color="#00bb3f"/><stop offset="0.542" stop-color="#04fb08"/><stop offset="0.548" stop-color="#3afc3a"/><stop offset="0.555" stop-color="#c8edc8"/><stop offset="0.561" stop-color="#e2e2e2"/><stop offset="0.592" stop-color="#bfbfbf"/><stop offset="0.618" stop-color="#b4b4b4"/><stop offset="0.63" stop-color="#ce8f8f"/><stop offset="0.649" stop-color="#f62321"/><stop offset="0.655" stop-color="#fc0f0b"/><stop offset="0.662" stop-color="#ff1000"/><stop offset="0.687" stop-color="#ff6c00"/><stop offset="0.706" stop-color="#ff7e00"/><stop offset="0.725" stop-color="#ff5800"/><stop offset="0.744" stop-color="#ff1600"/><stop offset="0.75" stop-color="#fe0803"/><stop offset="0.763" stop-color="#f32c2c"/><stop offset="0.782" stop-color="#ca9595"/><stop offset="0.794" stop-color="#b4b4b4"/><stop offset="0.851" stop-color="#d4d4d4"/><stop offset="0.863" stop-color="#e2e2e2"/><stop offset="0.87" stop-color="#d8ead8"/><stop offset="0.882" stop-color="#1bff1c"/><stop offset="0.889" stop-color="#02fa06"/><stop offset="0.945" stop-color="#006d92"/><stop offset="0.971" stop-color="#0058a7"/><stop offset="0.989" stop-color="#007788"/><stop offset="0.996" stop-color="#008974"/></linearGradient><linearGradient id="h6" x1="0" y1="0" x2="0" y2="1"><stop offset="0" stop-color="#003ec1"/><stop offset="0.019" stop-color="#0038c7"/><stop offset="0.038" stop-color="#00728d"/><stop offset="0.063" stop-color="#00e11b"/><stop offset="0.069" stop-color="#00f906"/><stop offset="0.076" stop-color="#2efd2e"/><stop offset="0.082" stop-color="#c5eec5"/><stop offset="0.088" stop-color="#e1e1e1"/><stop offset="0.113" stop-color="#bfbfbf"/><stop offset="0.145" stop-color="#b4b4b4"/><stop offset="0.158" stop-color="#c89898"/><stop offset="0.183" stop-color="#f62322"/><stop offset="0.195" stop-color="#ff0601"/><stop offset="0.227" stop-color="#ff3900"/><stop offset="0.252" stop-color="#ff2700"/><stop offset="0.271" stop-color="#ff0500"/><stop offset="0.29" stop-color="#f23131"/><stop offset="0.315" stop-color="#bea7a7"/><stop offset="0.334" stop-color="#bababa"/><stop offset="0.372" stop-color="#e2e2e2"/><stop offset="0.378" stop-color="#d4ecd4"/><stop offset="0.384" stop-color="#4ffa4f"/><stop offset="0.391" stop-color="#0bfc0e"/><stop offset="0.403" stop-color="#00d822"/><stop offset="0.441" stop-color="#00649b"/><stop offset="0.466" stop-color="#0041be"/><stop offset="0.492" stop-color="#0056a9"/><stop offset="0.517" stop-color="#009f5c"/><stop offset="0.542" stop-color="#00fa05"/><stop offset="0.548" stop-color="#2efd2e"/><stop offset="0.555" stop-color="#c0eec0"/><stop offset="0.561" stop-color="#e2e2e2"/><stop offset="0.592" stop-color="#bfbfbf"/><stop offset="0.618" stop-color="#b5b3b3"/><stop offset="0.624" stop-color="#bfa6a6"/><stop offset="0.643" stop-color="#ef3a3a"/><stop offset="0.655" stop-color="#fd0b07"/><stop offset="0.668" stop-color="#ff2800"/><stop offset="0.687" stop-color="#ff7200"/><stop offset="0.706" stop-color="#ff8300"/><stop offset="0.725" stop-color="#ff5b00"/><stop offset="0.744" stop-color="#ff1600"/><stop offset="0.75" stop-color="#fe0703"/><stop offset="0.763" stop-color="#f32c2c"/><stop offset="0.782" stop-color="#c99797"/><stop offset="0.794" stop-color="#b4b4b4"/><stop offset="0.851" stop-color="#d6d6d6"/><stop offset="0.863" stop-color="#e4e4e4"/><stop offset="0.87" stop-color="#c7edc7"/><stop offset="0.876" stop-color="#58f958"/><stop offset="0.882" stop-color="#12fd14"/><stop offset="0.889" stop-color="#00f509"/><stop offset="0.952" stop-color="#0052ad"/><stop offset="0.971" stop-color="#0040bf"/><stop offset="0.989" stop-color="#005fa0"/><stop offset="0.996" stop-color="#00748b"/></linearGradient><linearGradient id="h7" x1="0" y1="0" x2="0" y2="1"><stop offset="0" stop-color="#004db2"/><stop offset="0.019" stop-color="#0048b7"/><stop offset="0.038" stop-color="#007d81"/><stop offset="0.069" stop-color="#00f905"/><stop offset="0.076" stop-color="#2cfe2c"/><stop offset="0.082" stop-color="#bdefbd"/><stop offset="0.088" stop-color="#e2e2e2"/><stop offset="0.113" stop-color="#bfbfbf"/><stop offset="0.145" stop-color="#b4b4b4"/><stop offset="0.158" stop-color="#c89999"/><stop offset="0.183" stop-color="#f62321"/><stop offset="0.195" stop-color="#ff0500"/><stop offset="0.227" stop-color="#ff3d00"/><stop offset="0.246" stop-color="#ff3400"/><stop offset="0.271" stop-color="#ff0800"/><stop offset="0.29" stop-color="#f32c2c"/><stop offset="0.309" stop-color="#d08b8b"/><stop offset="0.321" stop-color="#b6b1b1"/><stop offset="0.359" stop-color="#d1d1d1"/><stop offset="0.372" stop-color="#e2e2e2"/><stop offset="0.378" stop-color="#d0ecd0"/><stop offset="0.384" stop-color="#47fb47"/><stop offset="0.391" stop-color="#08fb0b"/><stop offset="0.403" stop-color="#00d525"/><stop offset="0.441" stop-color="#0059a6"/><stop offset="0.466" stop-color="#0035ca"/><stop offset="0.492" stop-color="#0048b7"/><stop offset="0.517" stop-color="#009567"/><stop offset="0.542" stop-color="#00f609"/><stop offset="0.548" stop-color="#1eff1e"/><stop offset="0.555" stop-color="#b4efb4"/><stop offset="0.561" stop-color="#e3e3e3"/><stop offset="0.592" stop-color="#bebebe"/><stop offset="0.618" stop-color="#b7b1b1"/><stop offset="0.624" stop-color="#c1a4a4"/><stop offset="0.643" stop-color="#f23232"/><stop offset="0.655" stop-color="#fe0702"/><stop offset="0.668" stop-color="#ff2d00"/><stop offset="0.687" stop-color="#ff7a00"/><stop offset="0.706" stop-color="#ff8800"/><stop offset="0.725" stop-color="#ff5e00"/><stop offset="0.744" stop-color="#ff1700"/><stop offset="0.75" stop-color="#fe0702"/><stop offset="0.763" stop-color="#f32c2c"/><stop offset="0.782" stop-color="#c89898"/><stop offset="0.794" stop-color="#b4b4b4"/><stop offset="0.845" stop-color="#d1d1d1"/><stop offset="0.863" stop-color="#dfe6df"/><stop offset="0.87" stop-color="#adf0ad"/><stop offset="0.876" stop-color="#43fb43"/><stop offset="0.882" stop-color="#0efc11"/><stop offset="0.889" stop-color="#00f30b"/><stop offset="0.952" stop-color="#00639c"/><stop offset="0.971" stop-color="#0056a9"/><stop offset="0.989" stop-color="#00728d"/><stop offset="0.996" stop-color="#008479"/></linearGradient><linearGradient id="h8" x1="0" y1="0" x2="0" y2="1"><stop offset="0" stop-color="#00738c"/><stop offset="0.019" stop-color="#00738c"/><stop offset="0.044" stop-color="#00af4b"/><stop offset="0.063" stop-color="#00ea13"/><stop offset="0.069" stop-color="#07fb0b"/><stop offset="0.076" stop-color="#3efc3e"/><stop offset="0.082" stop-color="#c6eec6"/><stop offset="0.088" stop-color="#e2e2e2"/><stop offset="0.113" stop-color="#bfbfbf"/><stop offset="0.145" stop-color="#b4b4b4"/><stop offset="0.158" stop-color="#c79a9a"/><stop offset="0.176" stop-color="#f03939"/><stop offset="0.195" stop-color="#ff0600"/><stop offset="0.227" stop-color="#ff4100"/><stop offset="0.246" stop-color="#ff3900"/><stop offset="0.271" stop-color="#ff0c00"/><stop offset="0.284" stop-color="#f91a18"/><stop offset="0.296" stop-color="#ec4646"/><stop offset="0.315" stop-color="#c1a4a4"/><stop offset="0.334" stop-color="#b9b9b9"/><stop offset="0.372" stop-color="#e2e2e2"/><stop offset="0.378" stop-color="#ccedcc"/><stop offset="0.384" stop-color="#3ffc3f"/><stop offset="0.391" stop-color="#05fb09"/><stop offset="0.416" stop-color="#00a358"/><stop offset="0.441" stop-color="#004eb1"/><stop offset="0.466" stop-color="#0029d6"/><stop offset="0.492" stop-color="#003bc4"/><stop offset="0.517" stop-color="#008b72"/><stop offset="0.542" stop-color="#00f20c"/><stop offset="0.548" stop-color="#1afe1a"/><stop offset="0.555" stop-color="#aaf1aa"/><stop offset="0.561" stop-color="#e3e3e3"/><stop offset="0.592" stop-color="#bebebe"/><stop offset="0.618" stop-color="#b8afaf"/><stop offset="0.624" stop-color="#c3a1a1"/><stop offset="0.643" stop-color="#f32c2c"/><stop offset="0.655" stop-color="#ff0800"/><stop offset="0.687" stop-color="#ff8100"/><stop offset="0.706" stop-color="#ff8d00"/><stop offset="0.725" stop-color="#ff6200"/><stop offset="0.744" stop-color="#ff1800"/><stop offset="0.75" stop-color="#fe0702"/><stop offset="0.763" stop-color="#f32d2d"/><stop offset="0.782" stop-color="#c79999"/><stop offset="0.794" stop-color="#b5b5b5"/><stop offset="0.845" stop-color="#d3d3d3"/><stop offset="0.863" stop-color="#dce8dc"/><stop offset="0.87" stop-color="#a0f2a0"/><stop offset="0.876" stop-color="#3dfc3d"/><stop offset="0.882" stop-color="#0ffc11"/><stop offset="0.889" stop-color="#00f509"/><stop offset="0.939" stop-color="#009a61"/><stop offset="0.971" stop-color="#008e6f"/><stop offset="0.996" stop-color="#00b347"/></linearGradient><linearGradient id="h9" x1="0" y1="0" x2="0" y2="1"><stop offset="0" stop-color="#00b248"/><stop offset="0.032" stop-color="#00bf3b"/><stop offset="0.063" stop-color="#04fb08"/><stop offset="0.069" stop-color="#1cff1c"/><stop offset="0.082" stop-color="#d9e9d9"/><stop offset="0.095" stop-color="#d8d8d8"/><stop offset="0.113" stop-color="#bfbfbf"/><stop offset="0.151" stop-color="#bcaaaa"/><stop offset="0.164" stop-color="#d97c7c"/><stop offset="0.183" stop-color="#f62221"/><stop offset="0.195" stop-color="#ff0600"/><stop offset="0.227" stop-color="#ff4500"/><stop offset="0.246" stop-color="#ff3e00"/><stop offset="0.277" stop-color="#fe0905"/><stop offset="0.296" stop-color="#ee4141"/><stop offset="0.315" stop-color="#c2a2a2"/><stop offset="0.334" stop-color="#b9b9b9"/><stop offset="0.372" stop-color="#e2e2e2"/><stop offset="0.378" stop-color="#cfedcf"/><stop offset="0.384" stop-color="#3ffc3f"/><stop offset="0.391" stop-color="#04fb08"/><stop offset="0.416" stop-color="#009f5c"/><stop offset="0.441" stop-color="#0047b8"/><stop offset="0.466" stop-color="#0021de"/><stop offset="0.492" stop-color="#0034cb"/><stop offset="0.511" stop-color="#006d92"/><stop offset="0.542" stop-color="#00f10c"/><stop offset="0.548" stop-color="#1afe1b"/><stop offset="0.555" stop-color="#b0f0b0"/><stop offset="0.561" stop-color="#e2e2e2"/><stop offset="0.592" stop-color="#bebebe"/><stop offset="0.618" stop-color="#baacac"/><stop offset="0.624" stop-color="#c89898"/><stop offset="0.643" stop-color="#f52625"/><stop offset="0.649" stop-color="#fb110e"/><stop offset="0.655" stop-color="#ff0e00"/><stop offset="0.687" stop-color="#ff8800"/><stop offset="0.706" stop-color="#ff9200"/><stop offset="0.725" stop-color="#ff6400"/><stop offset="0.744" stop-color="#ff1800"/><stop offset="0.75" stop-color="#fe0702"/><stop offset="0.763" stop-color="#f32e2e"/><stop offset="0.782" stop-color="#c69b9b"/><stop offset="0.8" stop-color="#b8b8b8"/><stop offset="0.838" stop-color="#cfcfcf"/><stop offset="0.857" stop-color="#e3e3e3"/><stop offset="0.863" stop-color="#d6ebd6"/><stop offset="0.876" stop-color="#20ff20"/><stop offset="0.889" stop-color="#00f40a"/><stop offset="0.926" stop-color="#00c535"/><stop offset="0.971" stop-color="#00cb2f"/><stop offset="0.996" stop-color="#00e418"/></linearGradient><linearGradient id="h10" x1="0" y1="0" x2="0" y2="1"><stop offset="0" stop-color="#00ed10"/><stop offset="0.044" stop-color="#00fa05"/><stop offset="0.057" stop-color="#16fe18"/><stop offset="0.063" stop-color="#3bfc3b"/><stop offset="0.076" stop-color="#d5ecd5"/><stop offset="0.082" stop-color="#e4e4e4"/><stop offset="0.12" stop-color="#bdbdbd"/><stop offset="0.151" stop-color="#bcaaaa"/><stop offset="0.164" stop-color="#d97d7d"/><stop offset="0.183" stop-color="#f62221"/><stop offset="0.195" stop-color="#ff0700"/><stop offset="0.227" stop-color="#ff4900"/><stop offset="0.246" stop-color="#ff4300"/><stop offset="0.277" stop-color="#fe0702"/><stop offset="0.296" stop-color="#ef3c3c"/><stop offset="0.315" stop-color="#c49e9e"/><stop offset="0.334" stop-color="#b9b9b9"/><stop offset="0.372" stop-color="#e0e0e0"/><stop offset="0.378" stop-color="#d8ead8"/><stop offset="0.384" stop-color="#5ff85f"/><stop offset="0.391" stop-color="#0dfc10"/><stop offset="0.397" stop-color="#00ec11"/><stop offset="0.441" stop-color="#0055aa"/><stop offset="0.466" stop-color="#002fd0"/><stop offset="0.492" stop-color="#0044bb"/><stop offset="0.517" stop-color="#009764"/><stop offset="0.536" stop-color="#00e616"/><stop offset="0.542" stop-color="#08fb0c"/><stop offset="0.548" stop-color="#61f861"/><stop offset="0.555" stop-color="#dce8dc"/><stop offset="0.586" stop-color="#bfbfbf"/><stop offset="0.611" stop-color="#b6b1b1"/><stop offset="0.618" stop-color="#c0a4a4"/><stop offset="0.637" stop-color="#f23232"/><stop offset="0.649" stop-color="#ff0500"/><stop offset="0.681" stop-color="#ff8600"/><stop offset="0.7" stop-color="#ff9a00"/><stop offset="0.718" stop-color="#ff7600"/><stop offset="0.744" stop-color="#ff1300"/><stop offset="0.75" stop-color="#fd0b07"/><stop offset="0.763" stop-color="#f13535"/><stop offset="0.782" stop-color="#c3a1a1"/><stop offset="0.8" stop-color="#b8b8b8"/><stop offset="0.845" stop-color="#d5d5d5"/><stop offset="0.857" stop-color="#e2e2e2"/><stop offset="0.863" stop-color="#d8ead8"/><stop offset="0.876" stop-color="#2ffd2f"/><stop offset="0.882" stop-color="#0ffc11"/><stop offset="0.889" stop-color="#00f806"/><stop offset="0.92" stop-color="#00d921"/><stop offset="0.989" stop-color="#03fb08"/><stop offset="0.996" stop-color="#0cfc0f"/></linearGradient><linearGradient id="h11" x1="0" y1="0" x2="0" y2="1"><stop offset="0" stop-color="#00f30b"/><stop offset="0.044" stop-color="#03fa07"/><stop offset="0.057" stop-color="#15fe17"/><stop offset="0.063" stop-color="#2ffd2f"/><stop offset="0.076" stop-color="#baefba"/><stop offset="0.082" stop-color="#dee7de"/><stop offset="0.107" stop-color="#c9c9c9"/><stop offset="0.151" stop-color="#baadad"/><stop offset="0.158" stop-color="#c2a1a1"/><stop offset="0.176" stop-color="#ef3e3e"/><stop offset="0.195" stop-color="#ff0600"/><stop offset="0.227" stop-color="#ff4c00"/><stop offset="0.246" stop-color="#ff4800"/><stop offset="0.277" stop-color="#ff0600"/><stop offset="0.296" stop-color="#f03737"/><stop offset="0.315" stop-color="#c79a9a"/><stop offset="0.328" stop-color="#b5b5b5"/><stop offset="0.372" stop-color="#dedede"/><stop offset="0.378" stop-color="#dde8dd"/><stop offset="0.391" stop-color="#15fe17"/><stop offset="0.397" stop-color="#00f30b"/><stop offset="0.441" stop-color="#00629d"/><stop offset="0.466" stop-color="#003cc3"/><stop offset="0.485" stop-color="#0048b7"/><stop offset="0.504" stop-color="#007986"/><stop offset="0.536" stop-color="#00f40a"/><stop offset="0.542" stop-color="#1cff1d"/><stop offset="0.548" stop-color="#b6efb6"/><stop offset="0.555" stop-color="#e2e2e2"/><stop offset="0.586" stop-color="#bebebe"/><stop offset="0.611" stop-color="#bcaaaa"/><stop offset="0.624" stop-color="#e26d6d"/><stop offset="0.637" stop-color="#f62220"/><stop offset="0.643" stop-color="#fd0d08"/><stop offset="0.655" stop-color="#ff2a00"/><stop offset="0.674" stop-color="#ff8300"/><stop offset="0.693" stop-color="#ffa200"/><stop offset="0.712" stop-color="#ff8800"/><stop offset="0.744" stop-color="#ff0f00"/><stop offset="0.75" stop-color="#fc0f0b"/><stop offset="0.763" stop-color="#ef3d3d"/><stop offset="0.782" stop-color="#c0a4a4"/><stop offset="0.8" stop-color="#b9b9b9"/><stop offset="0.845" stop-color="#d6d6d6"/><stop offset="0.857" stop-color="#e4e4e4"/><stop offset="0.863" stop-color="#ceedce"/><stop offset="0.87" stop-color="#65f865"/><stop offset="0.876" stop-color="#18fe19"/><stop offset="0.882" stop-color="#04fb08"/><stop offset="0.92" stop-color="#00cf2b"/><stop offset="0.996" stop-color="#00f40a"/></linearGradient><linearGradient id="h12" x1="0" y1="0" x2="0" y2="1"><stop offset="0" stop-color="#00c733"/><stop offset="0.044" stop-color="#00dd1e"/><stop offset="0.063" stop-color="#00f807"/><stop offset="0.069" stop-color="#0ffc11"/><stop offset="0.076" stop-color="#2ffd2f"/><stop offset="0.088" stop-color="#d8ead8"/><stop offset="0.095" stop-color="#e2e2e2"/><stop offset="0.126" stop-color="#bebebe"/><stop offset="0.151" stop-color="#b5b2b2"/><stop offset="0.164" stop-color="#cf8e8e"/><stop offset="0.183" stop-color="#f52827"/><stop offset="0.195" stop-color="#ff0601"/><stop offset="0.227" stop-color="#ff5000"/><stop offset="0.246" stop-color="#ff4d00"/><stop offset="0.277" stop-color="#ff0900"/><stop offset="0.296" stop-color="#f23131"/><stop offset="0.315" stop-color="#ca9696"/><stop offset="0.328" stop-color="#b4b4b4"/><stop offset="0.378" stop-color="#e1e5e1"/><stop offset="0.384" stop-color="#a1f2a1"/><stop offset="0.391" stop-color="#1fff1f"/><stop offset="0.397" stop-color="#00fa05"/><stop offset="0.447" stop-color="#00629d"/><stop offset="0.473" stop-color="#004cb3"/><stop offset="0.492" stop-color="#006699"/><stop offset="0.529" stop-color="#00e914"/><stop offset="0.536" stop-color="#0bfc0e"/><stop offset="0.542" stop-color="#6bf76b"/><stop offset="0.548" stop-color="#dde7dd"/><stop offset="0.58" stop-color="#bfbfbf"/><stop offset="0.605" stop-color="#b8afaf"/><stop offset="0.611" stop-color="#c3a0a0"/><stop offset="0.63" stop-color="#f42929"/><stop offset="0.643" stop-color="#ff0d00"/><stop offset="0.674" stop-color="#ff9400"/><stop offset="0.693" stop-color="#ffa900"/><stop offset="0.712" stop-color="#ff8700"/><stop offset="0.744" stop-color="#ff0b00"/><stop offset="0.756" stop-color="#f52625"/><stop offset="0.775" stop-color="#cf8d8d"/><stop offset="0.788" stop-color="#b5b2b2"/><stop offset="0.838" stop-color="#d1d1d1"/><stop offset="0.851" stop-color="#e0e0e0"/><stop offset="0.857" stop-color="#dae9da"/><stop offset="0.87" stop-color="#1afe1b"/><stop offset="0.876" stop-color="#01fa06"/><stop offset="0.914" stop-color="#00b347"/><stop offset="0.958" stop-color="#00af4b"/><stop offset="0.996" stop-color="#00c337"/></linearGradient><linearGradient id="h13" x1="0" y1="0" x2="0" y2="1"><stop offset="0" stop-color="#00a655"/><stop offset="0.038" stop-color="#00bb3f"/><stop offset="0.076" stop-color="#07fb0b"/><stop offset="0.082" stop-color="#1dff1d"/><stop offset="0.095" stop-color="#d6ebd6"/><stop offset="0.101" stop-color="#e3e3e3"/><stop offset="0.132" stop-color="#bebebe"/><stop offset="0.158" stop-color="#baacac"/><stop offset="0.164" stop-color="#c79a9a"/><stop offset="0.183" stop-color="#f32c2c"/><stop offset="0.195" stop-color="#fe0804"/><stop offset="0.227" stop-color="#ff5300"/><stop offset="0.246" stop-color="#ff5200"/><stop offset="0.277" stop-color="#ff0c00"/><stop offset="0.29" stop-color="#f81c1a"/><stop offset="0.296" stop-color="#f32d2d"/><stop offset="0.315" stop-color="#cc9191"/><stop offset="0.328" stop-color="#b4b4b4"/><stop offset="0.378" stop-color="#e3e3e3"/><stop offset="0.384" stop-color="#c7edc7"/><stop offset="0.391" stop-color="#48fb48"/><stop offset="0.397" stop-color="#0afc0e"/><stop offset="0.41" stop-color="#00da20"/><stop offset="0.447" stop-color="#00738c"/><stop offset="0.473" stop-color="#005fa0"/><stop offset="0.492" stop-color="#007985"/><stop offset="0.529" stop-color="#00f807"/><stop offset="0.536" stop-color="#2afe2a"/><stop offset="0.542" stop-color="#c5eec5"/><stop offset="0.548" stop-color="#e1e1e1"/><stop offset="0.58" stop-color="#bdbdbd"/><stop offset="0.599" stop-color="#b4b3b3"/><stop offset="0.605" stop-color="#bfa6a6"/><stop offset="0.624" stop-color="#f13434"/><stop offset="0.637" stop-color="#ff0500"/><stop offset="0.668" stop-color="#ff9200"/><stop offset="0.687" stop-color="#ffb100"/><stop offset="0.706" stop-color="#ff9900"/><stop offset="0.725" stop-color="#ff5200"/><stop offset="0.744" stop-color="#ff0700"/><stop offset="0.756" stop-color="#f42a29"/><stop offset="0.775" stop-color="#cb9494"/><stop offset="0.788" stop-color="#b4b4b4"/><stop offset="0.838" stop-color="#d3d3d3"/><stop offset="0.851" stop-color="#e4e4e4"/><stop offset="0.857" stop-color="#b5efb5"/><stop offset="0.863" stop-color="#32fd32"/><stop offset="0.87" stop-color="#05fb09"/><stop offset="0.908" stop-color="#009f5d"/><stop offset="0.939" stop-color="#00837a"/><stop offset="0.989" stop-color="#008f6e"/><stop offset="0.996" stop-color="#009567"/></linearGradient><linearGradient id="h14" x1="0" y1="0" x2="0" y2="1"><stop offset="0" stop-color="#009a61"/><stop offset="0.038" stop-color="#00b149"/><stop offset="0.076" stop-color="#00f40a"/><stop offset="0.082" stop-color="#0bfc0e"/><stop offset="0.088" stop-color="#2cfe2c"/><stop offset="0.095" stop-color="#8cf48c"/><stop offset="0.101" stop-color="#d9e9d9"/><stop offset="0.113" stop-color="#dadada"/><stop offset="0.145" stop-color="#bababa"/><stop offset="0.158" stop-color="#b6b1b1"/><stop offset="0.164" stop-color="#c1a4a4"/><stop offset="0.183" stop-color="#f13434"/><stop offset="0.195" stop-color="#fd0b06"/><stop offset="0.214" stop-color="#ff3500"/><stop offset="0.233" stop-color="#ff5c00"/><stop offset="0.252" stop-color="#ff4c00"/><stop offset="0.284" stop-color="#fe0a06"/><stop offset="0.296" stop-color="#f42a29"/><stop offset="0.315" stop-color="#cf8d8d"/><stop offset="0.328" stop-color="#b5b3b3"/><stop offset="0.378" stop-color="#e1e1e1"/><stop offset="0.384" stop-color="#d7ebd7"/><stop offset="0.391" stop-color="#6af76a"/><stop offset="0.397" stop-color="#13fd15"/><stop offset="0.403" stop-color="#00f40a"/><stop offset="0.447" stop-color="#00807e"/><stop offset="0.473" stop-color="#006f90"/><stop offset="0.492" stop-color="#008875"/><stop offset="0.523" stop-color="#00e914"/><stop offset="0.529" stop-color="#08fb0c"/><stop offset="0.536" stop-color="#53fa53"/><stop offset="0.542" stop-color="#d7ead7"/><stop offset="0.548" stop-color="#dfdfdf"/><stop offset="0.58" stop-color="#bdbdbd"/><stop offset="0.599" stop-color="#b7b0b0"/><stop offset="0.605" stop-color="#c2a2a2"/><stop offset="0.624" stop-color="#f42929"/><stop offset="0.63" stop-color="#fb1310"/><stop offset="0.637" stop-color="#ff0e00"/><stop offset="0.668" stop-color="#ff9d00"/><stop offset="0.687" stop-color="#ffb800"/><stop offset="0.706" stop-color="#ff9d00"/><stop offset="0.725" stop-color="#ff5400"/><stop offset="0.744" stop-color="#ff0600"/><stop offset="0.756" stop-color="#f42b2a"/><stop offset="0.775" stop-color="#c99797"/><stop offset="0.788" stop-color="#b5b5b5"/><stop offset="0.838" stop-color="#d6d6d6"/><stop offset="0.851" stop-color="#dce8dc"/><stop offset="0.863" stop-color="#12fd14"/><stop offset="0.87" stop-color="#00f10d"/><stop offset="0.908" stop-color="#008b71"/><stop offset="0.939" stop-color="#00708f"/><stop offset="0.996" stop-color="#007c83"/></linearGradient><linearGradient id="h15" x1="0" y1="0" x2="0" y2="1"><stop offset="0" stop-color="#00906c"/><stop offset="0.032" stop-color="#00a05b"/><stop offset="0.082" stop-color="#00f906"/><stop offset="0.088" stop-color="#14fd16"/><stop offset="0.095" stop-color="#54fa54"/><stop offset="0.101" stop-color="#baefba"/><stop offset="0.107" stop-color="#e1e5e1"/><stop offset="0.151" stop-color="#b7b7b7"/><stop offset="0.164" stop-color="#bfa6a6"/><stop offset="0.183" stop-color="#f03838"/><stop offset="0.195" stop-color="#fd0c08"/><stop offset="0.208" stop-color="#ff2200"/><stop offset="0.227" stop-color="#ff5600"/><stop offset="0.246" stop-color="#ff5a00"/><stop offset="0.284" stop-color="#fe0702"/><stop offset="0.296" stop-color="#f52726"/><stop offset="0.315" stop-color="#d28888"/><stop offset="0.321" stop-color="#c0a5a5"/><stop offset="0.34" stop-color="#bababa"/><stop offset="0.378" stop-color="#e1e1e1"/><stop offset="0.384" stop-color="#d8ead8"/><stop offset="0.391" stop-color="#6ff76f"/><stop offset="0.397" stop-color="#14fd16"/><stop offset="0.403" stop-color="#00f40a"/><stop offset="0.447" stop-color="#007f7f"/><stop offset="0.473" stop-color="#006e91"/><stop offset="0.492" stop-color="#008875"/><stop offset="0.523" stop-color="#00ea12"/><stop offset="0.529" stop-color="#0bfc0e"/><stop offset="0.536" stop-color="#5ef95e"/><stop offset="0.542" stop-color="#d9e9d9"/><stop offset="0.555" stop-color="#d5d5d5"/><stop offset="0.592" stop-color="#b6b6b6"/><stop offset="0.605" stop-color="#c89898"/><stop offset="0.618" stop-color="#ed4444"/><stop offset="0.63" stop-color="#fd0c07"/><stop offset="0.643" stop-color="#ff2f00"/><stop offset="0.662" stop-color="#ff9300"/><stop offset="0.681" stop-color="#ffbf00"/><stop offset="0.7" stop-color="#ffb000"/><stop offset="0.718" stop-color="#ff7300"/><stop offset="0.737" stop-color="#ff1c00"/><stop offset="0.744" stop-color="#ff0500"/><stop offset="0.756" stop-color="#f32c2c"/><stop offset="0.775" stop-color="#c69b9b"/><stop offset="0.794" stop-color="#b8b8b8"/><stop offset="0.838" stop-color="#d7d7d7"/><stop offset="0.845" stop-color="#e0e0e0"/><stop offset="0.851" stop-color="#d6ebd6"/><stop offset="0.857" stop-color="#4afb4a"/><stop offset="0.863" stop-color="#06fb0a"/><stop offset="0.901" stop-color="#008c71"/><stop offset="0.933" stop-color="#006996"/><stop offset="0.996" stop-color="#00718e"/></linearGradient><linearGradient id="h16" x1="0" y1="0" x2="0" y2="1"><stop offset="0" stop-color="#008777"/><stop offset="0.032" stop-color="#009666"/><stop offset="0.088" stop-color="#07fb0b"/><stop offset="0.095" stop-color="#1eff1e"/><stop offset="0.107" stop-color="#d8ead8"/><stop offset="0.113" stop-color="#e2e2e2"/><stop offset="0.151" stop-color="#b8b8b8"/><stop offset="0.164" stop-color="#bea7a7"/><stop offset="0.183" stop-color="#ef3b3b"/><stop offset="0.195" stop-color="#fc0e0a"/><stop offset="0.202" stop-color="#ff0f00"/><stop offset="0.227" stop-color="#ff5700"/><stop offset="0.246" stop-color="#ff5d00"/><stop offset="0.284" stop-color="#ff0600"/><stop offset="0.303" stop-color="#ef3d3d"/><stop offset="0.321" stop-color="#c1a3a3"/><stop offset="0.34" stop-color="#bababa"/><stop offset="0.378" stop-color="#e0e0e0"/><stop offset="0.384" stop-color="#d9e9d9"/><stop offset="0.397" stop-color="#15fe17"/><stop offset="0.403" stop-color="#00f509"/><stop offset="0.447" stop-color="#007e80"/><stop offset="0.466" stop-color="#006c93"/><stop offset="0.492" stop-color="#008974"/><stop offset="0.523" stop-color="#00ec11"/><stop offset="0.529" stop-color="#0dfc10"/><stop offset="0.536" stop-color="#69f869"/><stop offset="0.542" stop-color="#dbe8db"/><stop offset="0.561" stop-color="#cccccc"/><stop offset="0.592" stop-color="#b5b5b5"/><stop offset="0.605" stop-color="#cf8c8c"/><stop offset="0.618" stop-color="#f13535"/><stop offset="0.63" stop-color="#ff0600"/><stop offset="0.662" stop-color="#ffa000"/><stop offset="0.681" stop-color="#ffc800"/><stop offset="0.7" stop-color="#ffb600"/><stop offset="0.718" stop-color="#ff7600"/><stop offset="0.737" stop-color="#ff1c00"/><stop offset="0.744" stop-color="#ff0500"/><stop offset="0.756" stop-color="#f32d2d"/><stop offset="0.775" stop-color="#c49f9f"/><stop offset="0.794" stop-color="#b9b9b9"/><stop offset="0.838" stop-color="#d9d9d9"/><stop offset="0.845" stop-color="#e3e3e3"/><stop offset="0.851" stop-color="#b2f0b2"/><stop offset="0.857" stop-color="#1dff1d"/><stop offset="0.863" stop-color="#00f509"/><stop offset="0.901" stop-color="#00817c"/><stop offset="0.933" stop-color="#00619e"/><stop offset="0.996" stop-color="#006897"/></linearGradient><linearGradient id="h17" x1="0" y1="0" x2="0" y2="1"><stop offset="0" stop-color="#007d81"/><stop offset="0.032" stop-color="#008c71"/><stop offset="0.088" stop-color="#00f609"/><stop offset="0.095" stop-color="#10fd13"/><stop offset="0.101" stop-color="#47fb47"/><stop offset="0.107" stop-color="#b0f0b0"/><stop offset="0.113" stop-color="#e0e6e0"/><stop offset="0.158" stop-color="#b5b5b5"/><stop offset="0.17" stop-color="#ce8e8e"/><stop offset="0.189" stop-color="#f62120"/><stop offset="0.195" stop-color="#fc0f0b"/><stop offset="0.202" stop-color="#ff0e00"/><stop offset="0.233" stop-color="#ff6000"/><stop offset="0.252" stop-color="#ff5900"/><stop offset="0.284" stop-color="#ff0a00"/><stop offset="0.296" stop-color="#f7201f"/><stop offset="0.309" stop-color="#e75b5b"/><stop offset="0.321" stop-color="#c3a0a0"/><stop offset="0.34" stop-color="#b9b9b9"/><stop offset="0.378" stop-color="#e0e0e0"/><stop offset="0.384" stop-color="#dae9da"/><stop offset="0.397" stop-color="#16fe18"/><stop offset="0.403" stop-color="#00f509"/><stop offset="0.447" stop-color="#007d81"/><stop offset="0.466" stop-color="#006b94"/><stop offset="0.492" stop-color="#008a73"/><stop offset="0.523" stop-color="#00ed10"/><stop offset="0.529" stop-color="#0ffd12"/><stop offset="0.542" stop-color="#dde7dd"/><stop offset="0.58" stop-color="#bbbbbb"/><stop offset="0.592" stop-color="#b5b3b3"/><stop offset="0.599" stop-color="#c0a4a4"/><stop offset="0.618" stop-color="#f42929"/><stop offset="0.624" stop-color="#fb120f"/><stop offset="0.63" stop-color="#ff1000"/><stop offset="0.643" stop-color="#ff5100"/><stop offset="0.662" stop-color="#ffae00"/><stop offset="0.681" stop-color="#ffd000"/><stop offset="0.7" stop-color="#ffbc00"/><stop offset="0.718" stop-color="#ff7900"/><stop offset="0.737" stop-color="#ff1c00"/><stop offset="0.744" stop-color="#ff0500"/><stop offset="0.756" stop-color="#f22f2f"/><stop offset="0.775" stop-color="#c2a2a2"/><stop offset="0.794" stop-color="#b9b9b9"/><stop offset="0.832" stop-color="#d2d2d2"/><stop offset="0.845" stop-color="#e1e6e1"/><stop offset="0.857" stop-color="#0ffd12"/><stop offset="0.863" stop-color="#00eb11"/><stop offset="0.895" stop-color="#008479"/><stop offset="0.92" stop-color="#00609f"/><stop offset="0.996" stop-color="#00609f"/></linearGradient><linearGradient id="h18" x1="0" y1="0" x2="0" y2="1"><stop offset="0" stop-color="#00738c"/><stop offset="0.032" stop-color="#00837b"/><stop offset="0.088" stop-color="#00f10d"/><stop offset="0.095" stop-color="#09fc0d"/><stop offset="0.101" stop-color="#2cfe2c"/><stop offset="0.107" stop-color="#95f395"/><stop offset="0.113" stop-color="#dce8dc"/><stop offset="0.132" stop-color="#cfcfcf"/><stop offset="0.158" stop-color="#b5b5b5"/><stop offset="0.17" stop-color="#cd9191"/><stop offset="0.189" stop-color="#f62322"/><stop offset="0.202" stop-color="#ff0c00"/><stop offset="0.233" stop-color="#ff6100"/><stop offset="0.252" stop-color="#ff5d00"/><stop offset="0.284" stop-color="#ff0e00"/><stop offset="0.29" stop-color="#fd0d09"/><stop offset="0.303" stop-color="#f23131"/><stop offset="0.321" stop-color="#c69b9b"/><stop offset="0.334" stop-color="#b5b5b5"/><stop offset="0.378" stop-color="#dfdfdf"/><stop offset="0.384" stop-color="#dbe8db"/><stop offset="0.397" stop-color="#17fe18"/><stop offset="0.403" stop-color="#00f609"/><stop offset="0.447" stop-color="#007c83"/><stop offset="0.466" stop-color="#006b94"/><stop offset="0.492" stop-color="#008a73"/><stop offset="0.523" stop-color="#00ef0e"/><stop offset="0.529" stop-color="#12fd14"/><stop offset="0.542" stop-color="#dfe6df"/><stop offset="0.58" stop-color="#bababa"/><stop offset="0.592" stop-color="#b8afaf"/><stop offset="0.599" stop-color="#c59d9d"/><stop offset="0.611" stop-color="#ed4545"/><stop offset="0.624" stop-color="#fe0a05"/><stop offset="0.637" stop-color="#ff3800"/><stop offset="0.655" stop-color="#ffa400"/><stop offset="0.668" stop-color="#ffcc00"/><stop offset="0.687" stop-color="#ffd400"/><stop offset="0.706" stop-color="#ffb000"/><stop offset="0.725" stop-color="#ff5b00"/><stop offset="0.737" stop-color="#ff1c00"/><stop offset="0.744" stop-color="#ff0501"/><stop offset="0.756" stop-color="#f23131"/><stop offset="0.775" stop-color="#c1a3a3"/><stop offset="0.794" stop-color="#bababa"/><stop offset="0.832" stop-color="#d5d5d5"/><stop offset="0.845" stop-color="#d9ead9"/><stop offset="0.851" stop-color="#48fb48"/><stop offset="0.857" stop-color="#01fa06"/><stop offset="0.889" stop-color="#008875"/><stop offset="0.914" stop-color="#005ca3"/><stop offset="0.989" stop-color="#0055aa"/><stop offset="0.996" stop-color="#0058a7"/></linearGradient><linearGradient id="h19" x1="0" y1="0" x2="0" y2="1"><stop offset="0" stop-color="#00718e"/><stop offset="0.032" stop-color="#00807d"/><stop offset="0.088" stop-color="#00ef0e"/><stop offset="0.095" stop-color="#07fb0b"/><stop offset="0.101" stop-color="#25fe25"/><stop offset="0.107" stop-color="#8ef48e"/><stop offset="0.113" stop-color="#dbe8db"/><stop offset="0.126" stop-color="#d8d8d8"/><stop offset="0.158" stop-color="#b5b5b5"/><stop offset="0.17" stop-color="#cb9393"/><stop offset="0.183" stop-color="#ed4444"/><stop offset="0.195" stop-color="#fb110e"/><stop offset="0.202" stop-color="#ff0b00"/><stop offset="0.233" stop-color="#ff6200"/><stop offset="0.252" stop-color="#ff6100"/><stop offset="0.29" stop-color="#fe0905"/><stop offset="0.303" stop-color="#f32c2b"/><stop offset="0.321" stop-color="#ca9696"/><stop offset="0.334" stop-color="#b5b5b5"/><stop offset="0.378" stop-color="#dfdfdf"/><stop offset="0.384" stop-color="#dce8dc"/><stop offset="0.391" stop-color="#84f584"/><stop offset="0.397" stop-color="#18fe19"/><stop offset="0.403" stop-color="#00f608"/><stop offset="0.447" stop-color="#007a84"/><stop offset="0.466" stop-color="#006a95"/><stop offset="0.492" stop-color="#008b72"/><stop offset="0.523" stop-color="#00f10d"/><stop offset="0.529" stop-color="#15fd16"/><stop offset="0.536" stop-color="#8af48a"/><stop offset="0.542" stop-color="#e1e5e1"/><stop offset="0.58" stop-color="#bababa"/><stop offset="0.592" stop-color="#baacac"/><stop offset="0.599" stop-color="#cb9393"/><stop offset="0.611" stop-color="#f03838"/><stop offset="0.624" stop-color="#ff0800"/><stop offset="0.637" stop-color="#ff4900"/><stop offset="0.655" stop-color="#ffb200"/><stop offset="0.668" stop-color="#ffd500"/><stop offset="0.687" stop-color="#ffda00"/><stop offset="0.706" stop-color="#ffb400"/><stop offset="0.725" stop-color="#ff5b00"/><stop offset="0.737" stop-color="#ff1b00"/><stop offset="0.744" stop-color="#fe0702"/><stop offset="0.756" stop-color="#f13636"/><stop offset="0.775" stop-color="#bfa6a6"/><stop offset="0.788" stop-color="#b7b7b7"/><stop offset="0.832" stop-color="#d7d7d7"/><stop offset="0.838" stop-color="#e1e1e1"/><stop offset="0.845" stop-color="#b9efb9"/><stop offset="0.851" stop-color="#1afe1b"/><stop offset="0.857" stop-color="#00f00d"/><stop offset="0.889" stop-color="#007d81"/><stop offset="0.914" stop-color="#0054ab"/><stop offset="0.996" stop-color="#0050af"/></linearGradient><linearGradient id="h20" x1="0" y1="0" x2="0" y2="1"><stop offset="0" stop-color="#006e91"/><stop offset="0.032" stop-color="#007e80"/><stop offset="0.082" stop-color="#00df1c"/><stop offset="0.095" stop-color="#06fb0a"/><stop offset="0.101" stop-color="#1fff1f"/><stop offset="0.107" stop-color="#88f488"/><stop offset="0.113" stop-color="#dae9da"/><stop offset="0.126" stop-color="#d9d9d9"/><stop offset="0.158" stop-color="#b6b6b6"/><stop offset="0.17" stop-color="#ca9595"/><stop offset="0.183" stop-color="#ec4646"/><stop offset="0.195" stop-color="#fb130f"/><stop offset="0.202" stop-color="#ff0900"/><stop offset="0.233" stop-color="#ff6300"/><stop offset="0.252" stop-color="#ff6500"/><stop offset="0.29" stop-color="#ff0601"/><stop offset="0.303" stop-color="#f42828"/><stop offset="0.321" stop-color="#cd9191"/><stop offset="0.334" stop-color="#b5b5b5"/><stop offset="0.384" stop-color="#dee7de"/><stop offset="0.391" stop-color="#8af48a"/><stop offset="0.397" stop-color="#19fe1a"/><stop offset="0.403" stop-color="#00f708"/><stop offset="0.447" stop-color="#007985"/><stop offset="0.466" stop-color="#006a95"/><stop offset="0.492" stop-color="#008c71"/><stop offset="0.523" stop-color="#00f20c"/><stop offset="0.529" stop-color="#17fe18"/><stop offset="0.536" stop-color="#96f396"/><stop offset="0.542" stop-color="#e3e5e3"/><stop offset="0.58" stop-color="#b9b9b9"/><stop offset="0.592" stop-color="#bda9a9"/><stop offset="0.605" stop-color="#e75b5b"/><stop offset="0.611" stop-color="#f32c2b"/><stop offset="0.618" stop-color="#fb130f"/><stop offset="0.624" stop-color="#ff1100"/><stop offset="0.63" stop-color="#ff2c00"/><stop offset="0.649" stop-color="#ffa400"/><stop offset="0.662" stop-color="#ffd300"/><stop offset="0.681" stop-color="#ffe300"/><stop offset="0.7" stop-color="#ffcc00"/><stop offset="0.718" stop-color="#ff7e00"/><stop offset="0.737" stop-color="#ff1900"/><stop offset="0.744" stop-color="#fe0904"/><stop offset="0.756" stop-color="#ef3b3b"/><stop offset="0.769" stop-color="#cf8d8d"/><stop offset="0.782" stop-color="#b5b5b5"/><stop offset="0.826" stop-color="#d1d1d1"/><stop offset="0.838" stop-color="#e3e5e3"/><stop offset="0.845" stop-color="#82f582"/><stop offset="0.851" stop-color="#0dfc10"/><stop offset="0.857" stop-color="#00e815"/><stop offset="0.889" stop-color="#00758a"/><stop offset="0.914" stop-color="#004db2"/><stop offset="0.996" stop-color="#0049b6"/></linearGradient><linearGradient id="h21" x1="0" y1="0" x2="0" y2="1"><stop offset="0" stop-color="#006b94"/><stop offset="0.032" stop-color="#007c83"/><stop offset="0.082" stop-color="#00de1d"/><stop offset="0.095" stop-color="#04fb08"/><stop offset="0.101" stop-color="#1dff1d"/><stop offset="0.113" stop-color="#d9e9d9"/><stop offset="0.126" stop-color="#d9d9d9"/><stop offset="0.158" stop-color="#b6b6b6"/><stop offset="0.17" stop-color="#c99797"/><stop offset="0.183" stop-color="#eb4949"/><stop offset="0.195" stop-color="#fa1411"/><stop offset="0.202" stop-color="#ff0800"/><stop offset="0.233" stop-color="#ff6300"/><stop offset="0.252" stop-color="#ff6800"/><stop offset="0.271" stop-color="#ff3d00"/><stop offset="0.29" stop-color="#ff0700"/><stop offset="0.303" stop-color="#f52524"/><stop offset="0.321" stop-color="#d08c8c"/><stop offset="0.334" stop-color="#b4b4b4"/><stop offset="0.384" stop-color="#dfe7df"/><stop offset="0.391" stop-color="#90f390"/><stop offset="0.397" stop-color="#1afe1b"/><stop offset="0.403" stop-color="#00f708"/><stop offset="0.447" stop-color="#007886"/><stop offset="0.466" stop-color="#006996"/><stop offset="0.492" stop-color="#008c70"/><stop offset="0.523" stop-color="#00f40a"/><stop offset="0.529" stop-color="#1afe1a"/><stop offset="0.536" stop-color="#a1f2a1"/><stop offset="0.542" stop-color="#e4e4e4"/><stop offset="0.58" stop-color="#b9b9b9"/><stop offset="0.592" stop-color="#c0a5a5"/><stop offset="0.611" stop-color="#f62423"/><stop offset="0.618" stop-color="#fd0b07"/><stop offset="0.624" stop-color="#ff1b00"/><stop offset="0.649" stop-color="#ffb400"/><stop offset="0.662" stop-color="#ffdc00"/><stop offset="0.681" stop-color="#ffe900"/><stop offset="0.7" stop-color="#ffd000"/><stop offset="0.718" stop-color="#ff8000"/><stop offset="0.731" stop-color="#ff3200"/><stop offset="0.744" stop-color="#fd0b06"/><stop offset="0.756" stop-color="#ee4141"/><stop offset="0.769" stop-color="#cb9494"/><stop offset="0.782" stop-color="#b5b5b5"/><stop offset="0.826" stop-color="#d4d4d4"/><stop offset="0.838" stop-color="#dae9da"/><stop offset="0.845" stop-color="#4cfa4c"/><stop offset="0.851" stop-color="#00fa05"/><stop offset="0.882" stop-color="#007e80"/><stop offset="0.908" stop-color="#004cb3"/><stop offset="0.977" stop-color="#003ec1"/><stop offset="0.996" stop-color="#0042bd"/></linearGradient><linearGradient id="h22" x1="0" y1="0" x2="0" y2="1"><stop offset="0" stop-color="#006996"/><stop offset="0.032" stop-color="#007985"/><stop offset="0.082" stop-color="#00dd1e"/><stop offset="0.095" stop-color="#02fa07"/><stop offset="0.101" stop-color="#1bfe1b"/><stop offset="0.113" stop-color="#d8ead8"/><stop offset="0.12" stop-color="#e1e1e1"/><stop offset="0.158" stop-color="#b6b6b6"/><stop offset="0.17" stop-color="#c89999"/><stop offset="0.189" stop-color="#f42928"/><stop offset="0.202" stop-color="#ff0600"/><stop offset="0.233" stop-color="#ff6300"/><stop offset="0.252" stop-color="#ff6c00"/><stop offset="0.271" stop-color="#ff4300"/><stop offset="0.29" stop-color="#ff0b00"/><stop offset="0.303" stop-color="#f62220"/><stop offset="0.321" stop-color="#d38787"/><stop offset="0.328" stop-color="#c0a5a5"/><stop offset="0.34" stop-color="#b7b7b7"/><stop offset="0.384" stop-color="#e0e6e0"/><stop offset="0.391" stop-color="#96f396"/><stop offset="0.397" stop-color="#1bff1c"/><stop offset="0.403" stop-color="#00f707"/><stop offset="0.447" stop-color="#007788"/><stop offset="0.466" stop-color="#006996"/><stop offset="0.492" stop-color="#008d70"/><stop offset="0.523" stop-color="#00f509"/><stop offset="0.529" stop-color="#1cff1d"/><stop offset="0.536" stop-color="#adf0ad"/><stop offset="0.542" stop-color="#e3e3e3"/><stop offset="0.58" stop-color="#b8b8b8"/><stop offset="0.592" stop-color="#c3a0a0"/><stop offset="0.605" stop-color="#ee4040"/><stop offset="0.618" stop-color="#ff0700"/><stop offset="0.63" stop-color="#ff4f00"/><stop offset="0.649" stop-color="#ffc300"/><stop offset="0.668" stop-color="#ffee00"/><stop offset="0.687" stop-color="#ffea00"/><stop offset="0.706" stop-color="#ffbf00"/><stop offset="0.725" stop-color="#ff5a00"/><stop offset="0.731" stop-color="#ff3000"/><stop offset="0.737" stop-color="#ff1600"/><stop offset="0.744" stop-color="#fd0d09"/><stop offset="0.756" stop-color="#ec4646"/><stop offset="0.769" stop-color="#c79a9a"/><stop offset="0.782" stop-color="#b6b6b6"/><stop offset="0.826" stop-color="#d7d7d7"/><stop offset="0.832" stop-color="#e1e1e1"/><stop offset="0.838" stop-color="#c4eec4"/><stop offset="0.845" stop-color="#1cff1d"/><stop offset="0.851" stop-color="#00f10c"/><stop offset="0.882" stop-color="#007689"/><stop offset="0.908" stop-color="#0044bb"/><stop offset="0.983" stop-color="#0039c6"/><stop offset="0.996" stop-color="#003cc3"/></linearGradient><linearGradient id="h23" x1="0" y1="0" x2="0" y2="1"><stop offset="0" stop-color="#006699"/><stop offset="0.032" stop-color="#007788"/><stop offset="0.082" stop-color="#00db1f"/><stop offset="0.095" stop-color="#00fa05"/><stop offset="0.101" stop-color="#19fe1a"/><stop offset="0.113" stop-color="#d7ead7"/><stop offset="0.12" stop-color="#e1e1e1"/><stop offset="0.158" stop-color="#b6b6b6"/><stop offset="0.17" stop-color="#c89898"/><stop offset="0.183" stop-color="#eb4949"/><stop offset="0.195" stop-color="#fb1411"/><stop offset="0.202" stop-color="#ff0800"/><stop offset="0.233" stop-color="#ff6800"/><stop offset="0.252" stop-color="#ff7000"/><stop offset="0.271" stop-color="#ff4500"/><stop offset="0.29" stop-color="#ff0b00"/><stop offset="0.303" stop-color="#f62221"/><stop offset="0.321" stop-color="#d28888"/><stop offset="0.334" stop-color="#b4b3b3"/><stop offset="0.384" stop-color="#dde7dd"/><stop offset="0.391" stop-color="#86f586"/><stop offset="0.397" stop-color="#17fe18"/><stop offset="0.403" stop-color="#00f40a"/><stop offset="0.447" stop-color="#006f90"/><stop offset="0.466" stop-color="#00619e"/><stop offset="0.485" stop-color="#007986"/><stop offset="0.523" stop-color="#00f50a"/><stop offset="0.529" stop-color="#1cff1d"/><stop offset="0.536" stop-color="#b1f0b1"/><stop offset="0.542" stop-color="#e2e2e2"/><stop offset="0.58" stop-color="#b7b7b7"/><stop offset="0.586" stop-color="#b8afaf"/><stop offset="0.592" stop-color="#c99696"/><stop offset="0.605" stop-color="#f23232"/><stop offset="0.611" stop-color="#fa1512"/><stop offset="0.618" stop-color="#ff1100"/><stop offset="0.624" stop-color="#ff2f00"/><stop offset="0.643" stop-color="#ffb300"/><stop offset="0.655" stop-color="#ffe300"/><stop offset="0.674" stop-color="#fff600"/><stop offset="0.693" stop-color="#ffe600"/><stop offset="0.706" stop-color="#ffc400"/><stop offset="0.725" stop-color="#ff5e00"/><stop offset="0.737" stop-color="#ff1800"/><stop offset="0.744" stop-color="#fd0b07"/><stop offset="0.756" stop-color="#ed4444"/><stop offset="0.769" stop-color="#c79999"/><stop offset="0.782" stop-color="#b6b6b6"/><stop offset="0.826" stop-color="#d8d8d8"/><stop offset="0.832" stop-color="#e1e1e1"/><stop offset="0.838" stop-color="#b4efb4"/><stop offset="0.845" stop-color="#18fe19"/><stop offset="0.851" stop-color="#00ef0f"/><stop offset="0.882" stop-color="#00728d"/><stop offset="0.908" stop-color="#0040bf"/><stop offset="0.983" stop-color="#0035ca"/><stop offset="0.996" stop-color="#0038c7"/></linearGradient><linearGradient id="h24" x1="0" y1="0" x2="0" y2="1"><stop offset="0" stop-color="#00649b"/><stop offset="0.032" stop-color="#00758a"/><stop offset="0.076" stop-color="#00ca30"/><stop offset="0.095" stop-color="#00f906"/><stop offset="0.101" stop-color="#18fe19"/><stop offset="0.107" stop-color="#6ff76f"/><stop offset="0.113" stop-color="#d7ebd7"/><stop offset="0.12" stop-color="#e2e2e2"/><stop offset="0.158" stop-color="#b6b6b6"/><stop offset="0.17" stop-color="#ca9696"/><stop offset="0.183" stop-color="#ec4545"/><stop offset="0.195" stop-color="#fb110e"/><stop offset="0.202" stop-color="#ff0c00"/><stop offset="0.233" stop-color="#ff6e00"/><stop offset="0.252" stop-color="#ff7300"/><stop offset="0.271" stop-color="#ff4700"/><stop offset="0.29" stop-color="#ff0b00"/><stop offset="0.303" stop-color="#f62322"/><stop offset="0.321" stop-color="#d08c8c"/><stop offset="0.334" stop-color="#b4b4b4"/><stop offset="0.378" stop-color="#dfdfdf"/><stop offset="0.384" stop-color="#dae9da"/><stop offset="0.397" stop-color="#12fd14"/><stop offset="0.403" stop-color="#00f10d"/><stop offset="0.447" stop-color="#006699"/><stop offset="0.466" stop-color="#0058a7"/><stop offset="0.485" stop-color="#00728d"/><stop offset="0.523" stop-color="#00f40a"/><stop offset="0.529" stop-color="#1cff1c"/><stop offset="0.536" stop-color="#b5efb5"/><stop offset="0.542" stop-color="#e2e2e2"/><stop offset="0.58" stop-color="#b6b6b6"/><stop offset="0.586" stop-color="#bbabab"/><stop offset="0.592" stop-color="#d08c8c"/><stop offset="0.605" stop-color="#f42828"/><stop offset="0.611" stop-color="#fd0d09"/><stop offset="0.618" stop-color="#ff1b00"/><stop offset="0.643" stop-color="#ffc400"/><stop offset="0.662" stop-color="#fff600"/><stop offset="0.687" stop-color="#fff500"/><stop offset="0.706" stop-color="#ffca00"/><stop offset="0.725" stop-color="#ff6300"/><stop offset="0.737" stop-color="#ff1a00"/><stop offset="0.744" stop-color="#fe0905"/><stop offset="0.756" stop-color="#ee4141"/><stop offset="0.769" stop-color="#c99696"/><stop offset="0.782" stop-color="#b6b6b6"/><stop offset="0.826" stop-color="#d8d8d8"/><stop offset="0.832" stop-color="#e2e2e2"/><stop offset="0.838" stop-color="#adf0ad"/><stop offset="0.845" stop-color="#16fe18"/><stop offset="0.851" stop-color="#00ed10"/><stop offset="0.882" stop-color="#006f90"/><stop offset="0.908" stop-color="#003dc2"/><stop offset="0.989" stop-color="#0033cc"/><stop offset="0.996" stop-color="#0035ca"/></linearGradient><linearGradient id="h25" x1="0" y1="0" x2="0" y2="1"><stop offset="0" stop-color="#00619e"/><stop offset="0.032" stop-color="#00728d"/><stop offset="0.076" stop-color="#00c931"/><stop offset="0.095" stop-color="#00f807"/><stop offset="0.101" stop-color="#16fe17"/><stop offset="0.107" stop-color="#69f869"/><stop offset="0.113" stop-color="#d6ebd6"/><stop offset="0.12" stop-color="#e2e2e2"/><stop offset="0.158" stop-color="#b6b6b6"/><stop offset="0.17" stop-color="#cb9494"/><stop offset="0.183" stop-color="#ed4242"/><stop offset="0.195" stop-color="#fc0f0b"/><stop offset="0.202" stop-color="#ff0f00"/><stop offset="0.233" stop-color="#ff7300"/><stop offset="0.252" stop-color="#ff7700"/><stop offset="0.271" stop-color="#ff4800"/><stop offset="0.29" stop-color="#ff0a00"/><stop offset="0.303" stop-color="#f62423"/><stop offset="0.321" stop-color="#cd8f8f"/><stop offset="0.334" stop-color="#b5b5b5"/><stop offset="0.378" stop-color="#e0e0e0"/><stop offset="0.384" stop-color="#d7ead7"/><stop offset="0.391" stop-color="#5ef95e"/><stop offset="0.397" stop-color="#0dfc10"/><stop offset="0.403" stop-color="#00ed10"/><stop offset="0.447" stop-color="#005da2"/><stop offset="0.466" stop-color="#004fb0"/><stop offset="0.485" stop-color="#006a95"/><stop offset="0.517" stop-color="#00da21"/><stop offset="0.523" stop-color="#00f30b"/><stop offset="0.529" stop-color="#1cff1c"/><stop offset="0.536" stop-color="#b9efb9"/><stop offset="0.542" stop-color="#e2e2e2"/><stop offset="0.58" stop-color="#b6b6b6"/><stop offset="0.586" stop-color="#bda8a8"/><stop offset="0.605" stop-color="#f62221"/><stop offset="0.611" stop-color="#fe0702"/><stop offset="0.618" stop-color="#ff2200"/><stop offset="0.643" stop-color="#ffcf00"/><stop offset="0.655" stop-color="#fff400"/><stop offset="0.693" stop-color="#fff100"/><stop offset="0.706" stop-color="#ffd100"/><stop offset="0.725" stop-color="#ff6c00"/><stop offset="0.737" stop-color="#ff1f00"/><stop offset="0.744" stop-color="#ff0601"/><stop offset="0.756" stop-color="#ef3a3a"/><stop offset="0.769" stop-color="#cc9292"/><stop offset="0.782" stop-color="#b6b6b6"/><stop offset="0.826" stop-color="#d8d8d8"/><stop offset="0.832" stop-color="#e2e2e2"/><stop offset="0.838" stop-color="#a5f1a5"/><stop offset="0.845" stop-color="#14fd16"/><stop offset="0.851" stop-color="#00eb12"/><stop offset="0.882" stop-color="#006c93"/><stop offset="0.908" stop-color="#003ac5"/><stop offset="0.989" stop-color="#0030cf"/><stop offset="0.996" stop-color="#0032cd"/></linearGradient><linearGradient id="h26" x1="0" y1="0" x2="0" y2="1"><stop offset="0" stop-color="#005ea1"/><stop offset="0.032" stop-color="#00708f"/><stop offset="0.076" stop-color="#00c733"/><stop offset="0.095" stop-color="#00f708"/><stop offset="0.101" stop-color="#14fd16"/><stop offset="0.107" stop-color="#63f863"/><stop offset="0.113" stop-color="#d5ecd5"/><stop offset="0.12" stop-color="#e2e2e2"/><stop offset="0.158" stop-color="#b6b6b6"/><stop offset="0.17" stop-color="#cc9292"/><stop offset="0.183" stop-color="#ee3e3e"/><stop offset="0.195" stop-color="#fd0c08"/><stop offset="0.208" stop-color="#ff2600"/><stop offset="0.227" stop-color="#ff6c00"/><stop offset="0.246" stop-color="#ff8000"/><stop offset="0.265" stop-color="#ff5f00"/><stop offset="0.29" stop-color="#ff0a00"/><stop offset="0.303" stop-color="#f52625"/><stop offset="0.315" stop-color="#e16f6f"/><stop offset="0.328" stop-color="#bcaaaa"/><stop offset="0.353" stop-color="#c2c2c2"/><stop offset="0.378" stop-color="#e2e2e2"/><stop offset="0.384" stop-color="#d4ecd4"/><stop offset="0.391" stop-color="#4bfb4b"/><stop offset="0.397" stop-color="#08fb0c"/><stop offset="0.41" stop-color="#00d327"/><stop offset="0.441" stop-color="#00649b"/><stop offset="0.46" stop-color="#0045ba"/><stop offset="0.479" stop-color="#0055aa"/><stop offset="0.498" stop-color="#008a73"/><stop offset="0.523" stop-color="#00f20c"/><stop offset="0.529" stop-color="#1cff1c"/><stop offset="0.536" stop-color="#beeebe"/><stop offset="0.542" stop-color="#e1e1e1"/><stop offset="0.58" stop-color="#b5b5b5"/><stop offset="0.586" stop-color="#bfa5a5"/><stop offset="0.599" stop-color="#ed4444"/><stop offset="0.605" stop-color="#f81c1a"/><stop offset="0.611" stop-color="#ff0a00"/><stop offset="0.618" stop-color="#ff2900"/><stop offset="0.637" stop-color="#ffb800"/><stop offset="0.649" stop-color="#ffec00"/><stop offset="0.681" stop-color="#fffa03"/><stop offset="0.7" stop-color="#ffe900"/><stop offset="0.712" stop-color="#ffbe00"/><stop offset="0.737" stop-color="#ff2300"/><stop offset="0.744" stop-color="#ff0900"/><stop offset="0.756" stop-color="#f13434"/><stop offset="0.769" stop-color="#cf8d8d"/><stop offset="0.775" stop-color="#bca9a9"/><stop offset="0.8" stop-color="#c0c0c0"/><stop offset="0.832" stop-color="#e3e3e3"/><stop offset="0.838" stop-color="#9df29d"/><stop offset="0.845" stop-color="#12fd14"/><stop offset="0.851" stop-color="#00ea13"/><stop offset="0.882" stop-color="#006996"/><stop offset="0.908" stop-color="#0037c8"/><stop offset="0.989" stop-color="#002dd2"/><stop offset="0.996" stop-color="#002fd0"/></linearGradient><linearGradient id="h27" x1="0" y1="0" x2="0" y2="1"><stop offset="0" stop-color="#0055aa"/><stop offset="0.032" stop-color="#006699"/><stop offset="0.076" stop-color="#00c139"/><stop offset="0.095" stop-color="#00f30b"/><stop offset="0.101" stop-color="#0ffd12"/><stop offset="0.107" stop-color="#50fa50"/><stop offset="0.113" stop-color="#c7edc7"/><stop offset="0.12" stop-color="#e3e3e3"/><stop offset="0.158" stop-color="#b5b5b5"/><stop offset="0.17" stop-color="#ce8f8f"/><stop offset="0.183" stop-color="#ef3a3a"/><stop offset="0.195" stop-color="#fd0a06"/><stop offset="0.208" stop-color="#ff2900"/><stop offset="0.227" stop-color="#ff7200"/><stop offset="0.246" stop-color="#ff8400"/><stop offset="0.265" stop-color="#ff6100"/><stop offset="0.29" stop-color="#ff0900"/><stop offset="0.303" stop-color="#f52726"/><stop offset="0.315" stop-color="#e07272"/><stop offset="0.328" stop-color="#baacac"/><stop offset="0.359" stop-color="#cacaca"/><stop offset="0.378" stop-color="#e3e3e3"/><stop offset="0.384" stop-color="#c5eec5"/><stop offset="0.391" stop-color="#3bfc3b"/><stop offset="0.397" stop-color="#04fb08"/><stop offset="0.422" stop-color="#00a05b"/><stop offset="0.447" stop-color="#004cb3"/><stop offset="0.466" stop-color="#003fc0"/><stop offset="0.485" stop-color="#005da2"/><stop offset="0.517" stop-color="#00d723"/><stop offset="0.523" stop-color="#00f20c"/><stop offset="0.529" stop-color="#1dff1d"/><stop offset="0.536" stop-color="#c6eec6"/><stop offset="0.542" stop-color="#e0e0e0"/><stop offset="0.58" stop-color="#b4b4b4"/><stop offset="0.586" stop-color="#c1a3a3"/><stop offset="0.599" stop-color="#ef3b3b"/><stop offset="0.605" stop-color="#f91715"/><stop offset="0.611" stop-color="#ff1000"/><stop offset="0.618" stop-color="#ff3200"/><stop offset="0.637" stop-color="#ffc400"/><stop offset="0.649" stop-color="#fff500"/><stop offset="0.693" stop-color="#fff701"/><stop offset="0.706" stop-color="#ffde00"/><stop offset="0.718" stop-color="#ffa400"/><stop offset="0.737" stop-color="#ff2700"/><stop offset="0.744" stop-color="#ff0c00"/><stop offset="0.756" stop-color="#f23030"/><stop offset="0.769" stop-color="#d18a8a"/><stop offset="0.775" stop-color="#bda9a9"/><stop offset="0.794" stop-color="#bebebe"/><stop offset="0.832" stop-color="#e3e3e3"/><stop offset="0.838" stop-color="#96f396"/><stop offset="0.845" stop-color="#10fd12"/><stop offset="0.851" stop-color="#00e814"/><stop offset="0.882" stop-color="#006699"/><stop offset="0.908" stop-color="#0034cb"/><stop offset="0.989" stop-color="#002ad5"/><stop offset="0.996" stop-color="#002cd3"/></linearGradient><linearGradient id="h28" x1="0" y1="0" x2="0" y2="1"><stop offset="0" stop-color="#0047b8"/><stop offset="0.032" stop-color="#005aa5"/><stop offset="0.063" stop-color="#009963"/><stop offset="0.095" stop-color="#00ed10"/><stop offset="0.101" stop-color="#08fb0c"/><stop offset="0.107" stop-color="#37fd37"/><stop offset="0.113" stop-color="#b1f0b1"/><stop offset="0.12" stop-color="#e3e4e3"/><stop offset="0.158" stop-color="#b5b5b5"/><stop offset="0.164" stop-color="#bcaaaa"/><stop offset="0.176" stop-color="#e46363"/><stop offset="0.183" stop-color="#f03737"/><stop offset="0.195" stop-color="#fe0803"/><stop offset="0.208" stop-color="#ff2c00"/><stop offset="0.227" stop-color="#ff7800"/><stop offset="0.246" stop-color="#ff8800"/><stop offset="0.265" stop-color="#ff6300"/><stop offset="0.29" stop-color="#ff0800"/><stop offset="0.303" stop-color="#f42928"/><stop offset="0.321" stop-color="#c69b9b"/><stop offset="0.334" stop-color="#b6b6b6"/><stop offset="0.378" stop-color="#e3e3e3"/><stop offset="0.384" stop-color="#b7efb7"/><stop offset="0.391" stop-color="#2efd2e"/><stop offset="0.397" stop-color="#01fa06"/><stop offset="0.447" stop-color="#0045ba"/><stop offset="0.466" stop-color="#0039c6"/><stop offset="0.485" stop-color="#0058a7"/><stop offset="0.511" stop-color="#00ba40"/><stop offset="0.523" stop-color="#00f20c"/><stop offset="0.529" stop-color="#20ff20"/><stop offset="0.536" stop-color="#d0ecd0"/><stop offset="0.542" stop-color="#e0e0e0"/><stop offset="0.58" stop-color="#b4b4b4"/><stop offset="0.586" stop-color="#c3a0a0"/><stop offset="0.599" stop-color="#f13333"/><stop offset="0.605" stop-color="#fb1310"/><stop offset="0.611" stop-color="#ff1600"/><stop offset="0.624" stop-color="#ff7500"/><stop offset="0.637" stop-color="#ffcf00"/><stop offset="0.649" stop-color="#fff701"/><stop offset="0.693" stop-color="#fff902"/><stop offset="0.706" stop-color="#ffe400"/><stop offset="0.718" stop-color="#ffab00"/><stop offset="0.737" stop-color="#ff2a00"/><stop offset="0.744" stop-color="#ff0f00"/><stop offset="0.75" stop-color="#fa1411"/><stop offset="0.756" stop-color="#f32d2d"/><stop offset="0.769" stop-color="#d28989"/><stop offset="0.775" stop-color="#bda8a8"/><stop offset="0.788" stop-color="#b9b9b9"/><stop offset="0.826" stop-color="#d9d9d9"/><stop offset="0.832" stop-color="#e4e4e4"/><stop offset="0.838" stop-color="#82f582"/><stop offset="0.845" stop-color="#0bfc0e"/><stop offset="0.851" stop-color="#00e418"/><stop offset="0.882" stop-color="#005ca3"/><stop offset="0.908" stop-color="#002bd4"/><stop offset="0.983" stop-color="#001fe0"/><stop offset="0.996" stop-color="#0023dc"/></linearGradient><linearGradient id="h29" x1="0" y1="0" x2="0" y2="1"><stop offset="0" stop-color="#003ac5"/><stop offset="0.032" stop-color="#004db2"/><stop offset="0.063" stop-color="#008f6e"/><stop offset="0.101" stop-color="#01fa06"/><stop offset="0.107" stop-color="#1eff1e"/><stop offset="0.113" stop-color="#9af29a"/><stop offset="0.12" stop-color="#e0e6e0"/><stop offset="0.158" stop-color="#b5b5b5"/><stop offset="0.164" stop-color="#bca9a9"/><stop offset="0.176" stop-color="#e56060"/><stop offset="0.183" stop-color="#f13333"/><stop offset="0.195" stop-color="#ff0500"/><stop offset="0.227" stop-color="#ff7e00"/><stop offset="0.246" stop-color="#ff8c00"/><stop offset="0.265" stop-color="#ff6400"/><stop offset="0.29" stop-color="#ff0700"/><stop offset="0.303" stop-color="#f42a2a"/><stop offset="0.321" stop-color="#c49f9f"/><stop offset="0.334" stop-color="#b7b7b7"/><stop offset="0.378" stop-color="#e3e4e3"/><stop offset="0.384" stop-color="#aaf1aa"/><stop offset="0.391" stop-color="#21ff21"/><stop offset="0.397" stop-color="#00f806"/><stop offset="0.447" stop-color="#003fc0"/><stop offset="0.466" stop-color="#0033cc"/><stop offset="0.485" stop-color="#0053ac"/><stop offset="0.511" stop-color="#00b941"/><stop offset="0.523" stop-color="#00f30b"/><stop offset="0.529" stop-color="#26fe26"/><stop offset="0.536" stop-color="#d5ecd5"/><stop offset="0.542" stop-color="#dfdfdf"/><stop offset="0.58" stop-color="#b5b2b2"/><stop offset="0.586" stop-color="#c79a9a"/><stop offset="0.599" stop-color="#f32c2c"/><stop offset="0.605" stop-color="#fc0f0b"/><stop offset="0.611" stop-color="#ff1c00"/><stop offset="0.63" stop-color="#ffb200"/><stop offset="0.643" stop-color="#fff100"/><stop offset="0.681" stop-color="#ffff05"/><stop offset="0.706" stop-color="#ffea00"/><stop offset="0.718" stop-color="#ffb300"/><stop offset="0.737" stop-color="#ff2e00"/><stop offset="0.744" stop-color="#ff1200"/><stop offset="0.75" stop-color="#fb120f"/><stop offset="0.756" stop-color="#f42b2b"/><stop offset="0.769" stop-color="#d28787"/><stop offset="0.775" stop-color="#bda8a8"/><stop offset="0.788" stop-color="#b9b9b9"/><stop offset="0.826" stop-color="#dadada"/><stop offset="0.832" stop-color="#e2e5e2"/><stop offset="0.845" stop-color="#04fb09"/><stop offset="0.863" stop-color="#00a259"/><stop offset="0.882" stop-color="#0051ae"/><stop offset="0.908" stop-color="#0020df"/><stop offset="0.983" stop-color="#0014eb"/><stop offset="0.996" stop-color="#0017e8"/></linearGradient><linearGradient id="h30" x1="0" y1="0" x2="0" y2="1"><stop offset="0" stop-color="#002ed1"/><stop offset="0.032" stop-color="#0040bf"/><stop offset="0.063" stop-color="#008579"/><stop offset="0.101" stop-color="#00f608"/><stop offset="0.107" stop-color="#18fe19"/><stop offset="0.113" stop-color="#83f583"/><stop offset="0.12" stop-color="#dde7dd"/><stop offset="0.139" stop-color="#c9c9c9"/><stop offset="0.158" stop-color="#b5b5b5"/><stop offset="0.164" stop-color="#bda9a9"/><stop offset="0.176" stop-color="#e65d5d"/><stop offset="0.183" stop-color="#f22f2f"/><stop offset="0.195" stop-color="#ff0800"/><stop offset="0.227" stop-color="#ff8300"/><stop offset="0.246" stop-color="#ff9000"/><stop offset="0.265" stop-color="#ff6600"/><stop offset="0.29" stop-color="#ff0600"/><stop offset="0.303" stop-color="#f32c2c"/><stop offset="0.321" stop-color="#c2a2a2"/><stop offset="0.334" stop-color="#b7b7b7"/><stop offset="0.378" stop-color="#e1e5e1"/><stop offset="0.384" stop-color="#9df29d"/><stop offset="0.391" stop-color="#1cff1c"/><stop offset="0.397" stop-color="#00f608"/><stop offset="0.429" stop-color="#007a84"/><stop offset="0.447" stop-color="#0038c7"/><stop offset="0.466" stop-color="#002ed1"/><stop offset="0.485" stop-color="#004eb1"/><stop offset="0.511" stop-color="#00b842"/><stop offset="0.523" stop-color="#00f30b"/><stop offset="0.529" stop-color="#2dfe2d"/><stop offset="0.536" stop-color="#d7ebd7"/><stop offset="0.542" stop-color="#dedede"/><stop offset="0.58" stop-color="#b7b0b0"/><stop offset="0.586" stop-color="#ca9595"/><stop offset="0.599" stop-color="#f42828"/><stop offset="0.605" stop-color="#fd0a06"/><stop offset="0.611" stop-color="#ff2200"/><stop offset="0.63" stop-color="#ffbd00"/><stop offset="0.643" stop-color="#fff601"/><stop offset="0.693" stop-color="#fffd04"/><stop offset="0.706" stop-color="#fff100"/><stop offset="0.718" stop-color="#ffbb00"/><stop offset="0.737" stop-color="#ff3300"/><stop offset="0.744" stop-color="#ff1400"/><stop offset="0.75" stop-color="#fc110d"/><stop offset="0.756" stop-color="#f42a29"/><stop offset="0.769" stop-color="#d38686"/><stop offset="0.775" stop-color="#bea8a8"/><stop offset="0.788" stop-color="#b9b9b9"/><stop offset="0.826" stop-color="#dbdbdb"/><stop offset="0.832" stop-color="#dfe7df"/><stop offset="0.838" stop-color="#58f958"/><stop offset="0.845" stop-color="#00f906"/><stop offset="0.882" stop-color="#0046b9"/><stop offset="0.908" stop-color="#0015ea"/><stop offset="0.996" stop-color="#0010ef"/></linearGradient><linearGradient id="h31" x1="0" y1="0" x2="0" y2="1"><stop offset="0" stop-color="#0024db"/><stop offset="0.032" stop-color="#0036c9"/><stop offset="0.063" stop-color="#007c82"/><stop offset="0.101" stop-color="#00f20c"/><stop offset="0.107" stop-color="#12fd14"/><stop offset="0.12" stop-color="#dae9da"/><stop offset="0.132" stop-color="#d5d5d5"/><stop offset="0.158" stop-color="#b5b5b5"/><stop offset="0.164" stop-color="#bda8a8"/><stop offset="0.176" stop-color="#e75a5a"/><stop offset="0.183" stop-color="#f32c2c"/><stop offset="0.195" stop-color="#ff0b00"/><stop offset="0.227" stop-color="#ff8900"/><stop offset="0.246" stop-color="#ff9400"/><stop offset="0.265" stop-color="#ff6700"/><stop offset="0.284" stop-color="#ff1a00"/><stop offset="0.29" stop-color="#ff0500"/><stop offset="0.303" stop-color="#f32e2e"/><stop offset="0.321" stop-color="#c1a4a4"/><stop offset="0.334" stop-color="#b8b8b8"/><stop offset="0.378" stop-color="#dfe7df"/><stop offset="0.384" stop-color="#8cf48c"/><stop offset="0.391" stop-color="#18fe19"/><stop offset="0.397" stop-color="#00f30b"/><stop offset="0.422" stop-color="#008f6d"/><stop offset="0.447" stop-color="#0033cc"/><stop offset="0.46" stop-color="#0026d9"/><stop offset="0.479" stop-color="#0039c6"/><stop offset="0.498" stop-color="#007a85"/><stop offset="0.523" stop-color="#00f30b"/><stop offset="0.529" stop-color="#31fd31"/><stop offset="0.536" stop-color="#d8ead8"/><stop offset="0.542" stop-color="#dedede"/><stop offset="0.574" stop-color="#b8b8b8"/><stop offset="0.58" stop-color="#b8afaf"/><stop offset="0.586" stop-color="#cd9090"/><stop offset="0.599" stop-color="#f62423"/><stop offset="0.605" stop-color="#ff0601"/><stop offset="0.611" stop-color="#ff2700"/><stop offset="0.63" stop-color="#ffc900"/><stop offset="0.643" stop-color="#fff802"/><stop offset="0.7" stop-color="#fffa03"/><stop offset="0.706" stop-color="#fff500"/><stop offset="0.718" stop-color="#ffc200"/><stop offset="0.737" stop-color="#ff3800"/><stop offset="0.744" stop-color="#ff1700"/><stop offset="0.75" stop-color="#fc0f0b"/><stop offset="0.756" stop-color="#f42828"/><stop offset="0.769" stop-color="#d48585"/><stop offset="0.775" stop-color="#bea7a7"/><stop offset="0.788" stop-color="#b9b9b9"/><stop offset="0.826" stop-color="#dcdcdc"/><stop offset="0.832" stop-color="#dce8dc"/><stop offset="0.838" stop-color="#43fb43"/><stop offset="0.845" stop-color="#00f40a"/><stop offset="0.876" stop-color="#0053ac"/><stop offset="0.895" stop-color="#001ce3"/><stop offset="0.939" stop-color="#0009f6"/><stop offset="0.996" stop-color="#000bf4"/></linearGradient><linearGradient id="h32" x1="0" y1="0" x2="0" y2="1"><stop offset="0" stop-color="#001ce3"/><stop offset="0.032" stop-color="#002dd2"/><stop offset="0.063" stop-color="#00758a"/><stop offset="0.101" stop-color="#00ee0f"/><stop offset="0.107" stop-color="#0efc10"/><stop offset="0.113" stop-color="#5ff85f"/><stop offset="0.12" stop-color="#d8ead8"/><stop offset="0.126" stop-color="#dfdfdf"/><stop offset="0.158" stop-color="#b5b5b5"/><stop offset="0.164" stop-color="#bea8a8"/><stop offset="0.183" stop-color="#f42a2a"/><stop offset="0.189" stop-color="#fb1310"/><stop offset="0.195" stop-color="#ff0e00"/><stop offset="0.221" stop-color="#ff7d00"/><stop offset="0.239" stop-color="#ff9b00"/><stop offset="0.258" stop-color="#ff7e00"/><stop offset="0.284" stop-color="#ff1a00"/><stop offset="0.29" stop-color="#ff0601"/><stop offset="0.303" stop-color="#f23131"/><stop offset="0.321" stop-color="#bfa5a5"/><stop offset="0.334" stop-color="#b8b8b8"/><stop offset="0.372" stop-color="#dfdfdf"/><stop offset="0.378" stop-color="#dbe8db"/><stop offset="0.391" stop-color="#12fd14"/><stop offset="0.397" stop-color="#00ef0e"/><stop offset="0.441" stop-color="#003fc0"/><stop offset="0.454" stop-color="#0023dc"/><stop offset="0.479" stop-color="#0036c9"/><stop offset="0.498" stop-color="#007887"/><stop offset="0.523" stop-color="#00f30b"/><stop offset="0.529" stop-color="#33fd33"/><stop offset="0.536" stop-color="#d8ead8"/><stop offset="0.548" stop-color="#d2d2d2"/><stop offset="0.58" stop-color="#b9adad"/><stop offset="0.586" stop-color="#d18b8b"/><stop offset="0.599" stop-color="#f7211f"/><stop offset="0.605" stop-color="#ff0900"/><stop offset="0.611" stop-color="#ff2c00"/><stop offset="0.63" stop-color="#ffd100"/><stop offset="0.637" stop-color="#fff000"/><stop offset="0.662" stop-color="#ffff08"/><stop offset="0.706" stop-color="#fff701"/><stop offset="0.718" stop-color="#ffc700"/><stop offset="0.744" stop-color="#ff1800"/><stop offset="0.75" stop-color="#fc0e0a"/><stop offset="0.756" stop-color="#f52727"/><stop offset="0.775" stop-color="#bea7a7"/><stop offset="0.788" stop-color="#b9b9b9"/><stop offset="0.826" stop-color="#dcdcdc"/><stop offset="0.832" stop-color="#dae9da"/><stop offset="0.838" stop-color="#36fd36"/><stop offset="0.845" stop-color="#00f20c"/><stop offset="0.876" stop-color="#004eb1"/><stop offset="0.895" stop-color="#0016e9"/><stop offset="0.958" stop-color="#0006f9"/><stop offset="0.996" stop-color="#0008f7"/></linearGradient><linearGradient id="h33" x1="0" y1="0" x2="0" y2="1"><stop offset="0" stop-color="#0014eb"/><stop offset="0.032" stop-color="#0025da"/><stop offset="0.063" stop-color="#006d92"/><stop offset="0.101" stop-color="#00eb12"/><stop offset="0.107" stop-color="#09fb0c"/><stop offset="0.113" stop-color="#4ffa4f"/><stop offset="0.12" stop-color="#d6ebd6"/><stop offset="0.126" stop-color="#e0e0e0"/><stop offset="0.158" stop-color="#b5b5b5"/><stop offset="0.164" stop-color="#bea7a7"/><stop offset="0.183" stop-color="#f42928"/><stop offset="0.189" stop-color="#fb110e"/><stop offset="0.195" stop-color="#ff1100"/><stop offset="0.221" stop-color="#ff8200"/><stop offset="0.239" stop-color="#ff9e00"/><stop offset="0.258" stop-color="#ff7f00"/><stop offset="0.284" stop-color="#ff1900"/><stop offset="0.29" stop-color="#fe0703"/><stop offset="0.303" stop-color="#f13434"/><stop offset="0.321" stop-color="#bea7a7"/><stop offset="0.334" stop-color="#b9b9b9"/><stop offset="0.372" stop-color="#e0e0e0"/><stop offset="0.378" stop-color="#d8ead8"/><stop offset="0.384" stop-color="#60f860"/><stop offset="0.391" stop-color="#0dfc10"/><stop offset="0.397" stop-color="#00ec11"/><stop offset="0.441" stop-color="#0039c6"/><stop offset="0.454" stop-color="#001ee1"/><stop offset="0.479" stop-color="#0032cd"/><stop offset="0.498" stop-color="#00758a"/><stop offset="0.523" stop-color="#00f30b"/><stop offset="0.529" stop-color="#36fd36"/><stop offset="0.536" stop-color="#d9e9d9"/><stop offset="0.548" stop-color="#d2d2d2"/><stop offset="0.574" stop-color="#b7b7b7"/><stop offset="0.58" stop-color="#bbabab"/><stop offset="0.586" stop-color="#d48585"/><stop offset="0.599" stop-color="#f81d1b"/><stop offset="0.605" stop-color="#ff0e00"/><stop offset="0.611" stop-color="#ff3500"/><stop offset="0.624" stop-color="#ffab00"/><stop offset="0.637" stop-color="#fff500"/><stop offset="0.693" stop-color="#ffff06"/><stop offset="0.712" stop-color="#ffe800"/><stop offset="0.725" stop-color="#ffa300"/><stop offset="0.744" stop-color="#ff1a00"/><stop offset="0.75" stop-color="#fd0d08"/><stop offset="0.756" stop-color="#f52626"/><stop offset="0.775" stop-color="#bea7a7"/><stop offset="0.788" stop-color="#b9b9b9"/><stop offset="0.826" stop-color="#dcdcdc"/><stop offset="0.832" stop-color="#dbe9db"/><stop offset="0.838" stop-color="#3bfc3b"/><stop offset="0.845" stop-color="#00f30b"/><stop offset="0.876" stop-color="#0051ae"/><stop offset="0.895" stop-color="#001ae5"/><stop offset="0.945" stop-color="#0008f7"/><stop offset="0.996" stop-color="#000af5"/></linearGradient><linearGradient id="h34" x1="0" y1="0" x2="0" y2="1"><stop offset="0" stop-color="#000ff0"/><stop offset="0.032" stop-color="#001de2"/><stop offset="0.063" stop-color="#00659a"/><stop offset="0.101" stop-color="#00e715"/><stop offset="0.107" stop-color="#04fb09"/><stop offset="0.113" stop-color="#3efc3e"/><stop offset="0.12" stop-color="#d1ecd1"/><stop offset="0.126" stop-color="#e1e1e1"/><stop offset="0.151" stop-color="#bababa"/><stop offset="0.164" stop-color="#bea7a7"/><stop offset="0.183" stop-color="#f52726"/><stop offset="0.189" stop-color="#fc0f0b"/><stop offset="0.195" stop-color="#ff1300"/><stop offset="0.221" stop-color="#ff8700"/><stop offset="0.239" stop-color="#ffa200"/><stop offset="0.258" stop-color="#ff8100"/><stop offset="0.284" stop-color="#ff1800"/><stop offset="0.29" stop-color="#fe0804"/><stop offset="0.303" stop-color="#f03737"/><stop offset="0.315" stop-color="#d08c8c"/><stop offset="0.321" stop-color="#bda9a9"/><stop offset="0.334" stop-color="#b9b9b9"/><stop offset="0.372" stop-color="#e2e2e2"/><stop offset="0.378" stop-color="#d4ecd4"/><stop offset="0.384" stop-color="#4bfb4b"/><stop offset="0.391" stop-color="#07fb0b"/><stop offset="0.403" stop-color="#00d02a"/><stop offset="0.441" stop-color="#0034cb"/><stop offset="0.454" stop-color="#001ae5"/><stop offset="0.479" stop-color="#002fd0"/><stop offset="0.498" stop-color="#00738c"/><stop offset="0.523" stop-color="#00f30b"/><stop offset="0.529" stop-color="#38fc38"/><stop offset="0.536" stop-color="#dae9da"/><stop offset="0.548" stop-color="#d2d2d2"/><stop offset="0.574" stop-color="#b7b7b7"/><stop offset="0.58" stop-color="#bcaaaa"/><stop offset="0.586" stop-color="#d78080"/><stop offset="0.592" stop-color="#ed4444"/><stop offset="0.599" stop-color="#f91916"/><stop offset="0.605" stop-color="#ff1200"/><stop offset="0.611" stop-color="#ff3f00"/><stop offset="0.624" stop-color="#ffb500"/><stop offset="0.63" stop-color="#ffe000"/><stop offset="0.637" stop-color="#fff701"/><stop offset="0.7" stop-color="#fffe05"/><stop offset="0.712" stop-color="#ffec00"/><stop offset="0.725" stop-color="#ffa800"/><stop offset="0.744" stop-color="#ff1c00"/><stop offset="0.75" stop-color="#fd0b07"/><stop offset="0.756" stop-color="#f52524"/><stop offset="0.775" stop-color="#bea7a7"/><stop offset="0.788" stop-color="#b9b9b9"/><stop offset="0.826" stop-color="#dcdcdc"/><stop offset="0.832" stop-color="#dbe8db"/><stop offset="0.838" stop-color="#3ffc3f"/><stop offset="0.845" stop-color="#00f40a"/><stop offset="0.876" stop-color="#0055aa"/><stop offset="0.895" stop-color="#001ee1"/><stop offset="0.933" stop-color="#000af5"/><stop offset="0.996" stop-color="#000cf3"/></linearGradient><linearGradient id="h35" x1="0" y1="0" x2="0" y2="1"><stop offset="0" stop-color="#000bf4"/><stop offset="0.038" stop-color="#001fe0"/><stop offset="0.069" stop-color="#00738c"/><stop offset="0.107" stop-color="#01fa06"/><stop offset="0.113" stop-color="#34fd34"/><stop offset="0.12" stop-color="#caedca"/><stop offset="0.126" stop-color="#e1e1e1"/><stop offset="0.151" stop-color="#b9b9b9"/><stop offset="0.164" stop-color="#bfa5a5"/><stop offset="0.183" stop-color="#f62423"/><stop offset="0.189" stop-color="#fd0c08"/><stop offset="0.202" stop-color="#ff3000"/><stop offset="0.221" stop-color="#ff8d00"/><stop offset="0.239" stop-color="#ffa600"/><stop offset="0.258" stop-color="#ff8300"/><stop offset="0.284" stop-color="#ff1700"/><stop offset="0.29" stop-color="#fe0905"/><stop offset="0.303" stop-color="#ef3b3b"/><stop offset="0.315" stop-color="#cd9090"/><stop offset="0.328" stop-color="#b5b5b5"/><stop offset="0.372" stop-color="#e3e3e3"/><stop offset="0.378" stop-color="#c1eec1"/><stop offset="0.384" stop-color="#35fd35"/><stop offset="0.391" stop-color="#02fa06"/><stop offset="0.416" stop-color="#009666"/><stop offset="0.441" stop-color="#002fd0"/><stop offset="0.454" stop-color="#0015ea"/><stop offset="0.479" stop-color="#002bd4"/><stop offset="0.498" stop-color="#00718e"/><stop offset="0.523" stop-color="#00f30b"/><stop offset="0.529" stop-color="#3bfc3b"/><stop offset="0.536" stop-color="#dbe9db"/><stop offset="0.574" stop-color="#b6b6b6"/><stop offset="0.58" stop-color="#bda8a8"/><stop offset="0.586" stop-color="#da7c7c"/><stop offset="0.592" stop-color="#ee3e3e"/><stop offset="0.599" stop-color="#fa1613"/><stop offset="0.605" stop-color="#ff1700"/><stop offset="0.624" stop-color="#ffbd00"/><stop offset="0.63" stop-color="#ffe500"/><stop offset="0.643" stop-color="#ffff05"/><stop offset="0.706" stop-color="#fffa02"/><stop offset="0.712" stop-color="#ffef00"/><stop offset="0.725" stop-color="#ffab00"/><stop offset="0.744" stop-color="#ff1d00"/><stop offset="0.75" stop-color="#fd0b06"/><stop offset="0.756" stop-color="#f52524"/><stop offset="0.775" stop-color="#bea7a7"/><stop offset="0.788" stop-color="#bababa"/><stop offset="0.826" stop-color="#dcdcdc"/><stop offset="0.832" stop-color="#dce8dc"/><stop offset="0.838" stop-color="#43fb43"/><stop offset="0.845" stop-color="#00f509"/><stop offset="0.882" stop-color="#0041be"/><stop offset="0.908" stop-color="#0012ed"/><stop offset="0.996" stop-color="#000ef1"/></linearGradient><linearGradient id="h36" x1="0" y1="0" x2="0" y2="1"><stop offset="0" stop-color="#005da2"/><stop offset="0.032" stop-color="#006f90"/><stop offset="0.076" stop-color="#00c733"/><stop offset="0.095" stop-color="#00f708"/><stop offset="0.101" stop-color="#15fd16"/><stop offset="0.107" stop-color="#65f865"/><stop offset="0.113" stop-color="#d5ebd5"/><stop offset="0.12" stop-color="#e2e2e2"/><stop offset="0.158" stop-color="#b4b4b4"/><stop offset="0.164" stop-color="#c1a3a3"/><stop offset="0.176" stop-color="#ed4444"/><stop offset="0.189" stop-color="#fe0803"/><stop offset="0.202" stop-color="#ff3800"/><stop offset="0.221" stop-color="#ff9300"/><stop offset="0.239" stop-color="#ffa900"/><stop offset="0.258" stop-color="#ff8400"/><stop offset="0.284" stop-color="#ff1600"/><stop offset="0.29" stop-color="#fd0b06"/><stop offset="0.303" stop-color="#ee3f3f"/><stop offset="0.315" stop-color="#cb9494"/><stop offset="0.328" stop-color="#b6b6b6"/><stop offset="0.366" stop-color="#dfdfdf"/><stop offset="0.372" stop-color="#dae9da"/><stop offset="0.378" stop-color="#5bf95b"/><stop offset="0.384" stop-color="#07fb0b"/><stop offset="0.397" stop-color="#00c931"/><stop offset="0.429" stop-color="#0029d6"/><stop offset="0.441" stop-color="#0007f8"/><stop offset="0.479" stop-color="#0005fa"/><stop offset="0.492" stop-color="#0021de"/><stop offset="0.511" stop-color="#00906c"/><stop offset="0.523" stop-color="#00e11b"/><stop offset="0.529" stop-color="#10fd12"/><stop offset="0.536" stop-color="#bcefbc"/><stop offset="0.542" stop-color="#dfdfdf"/><stop offset="0.574" stop-color="#b6b6b6"/><stop offset="0.58" stop-color="#bea7a7"/><stop offset="0.592" stop-color="#ef3a3a"/><stop offset="0.599" stop-color="#fb1410"/><stop offset="0.605" stop-color="#ff1900"/><stop offset="0.624" stop-color="#ffc100"/><stop offset="0.63" stop-color="#ffe800"/><stop offset="0.643" stop-color="#ffff05"/><stop offset="0.706" stop-color="#fffa02"/><stop offset="0.712" stop-color="#ffef00"/><stop offset="0.725" stop-color="#ffaa00"/><stop offset="0.744" stop-color="#ff1d00"/><stop offset="0.75" stop-color="#fd0b07"/><stop offset="0.756" stop-color="#f52625"/><stop offset="0.775" stop-color="#bea7a7"/><stop offset="0.788" stop-color="#bababa"/><stop offset="0.826" stop-color="#dadada"/><stop offset="0.832" stop-color="#e3e5e3"/><stop offset="0.845" stop-color="#0bfc0e"/><stop offset="0.851" stop-color="#00e517"/><stop offset="0.882" stop-color="#00649b"/><stop offset="0.908" stop-color="#0034cb"/><stop offset="0.989" stop-color="#002ad5"/><stop offset="0.996" stop-color="#002cd3"/></linearGradient><linearGradient id="h37" x1="0" y1="0" x2="0" y2="1"><stop offset="0" stop-color="#005da2"/><stop offset="0.032" stop-color="#006f90"/><stop offset="0.076" stop-color="#00c832"/><stop offset="0.095" stop-color="#00f906"/><stop offset="0.101" stop-color="#18fe19"/><stop offset="0.113" stop-color="#d8ead8"/><stop offset="0.12" stop-color="#e1e1e1"/><stop offset="0.151" stop-color="#b8b8b8"/><stop offset="0.158" stop-color="#b6b1b1"/><stop offset="0.164" stop-color="#c69c9c"/><stop offset="0.176" stop-color="#ef3c3c"/><stop offset="0.189" stop-color="#ff0600"/><stop offset="0.221" stop-color="#ff9900"/><stop offset="0.239" stop-color="#ffad00"/><stop offset="0.258" stop-color="#ff8500"/><stop offset="0.284" stop-color="#ff1500"/><stop offset="0.29" stop-color="#fd0c08"/><stop offset="0.303" stop-color="#ed4242"/><stop offset="0.315" stop-color="#c89898"/><stop offset="0.328" stop-color="#b6b6b6"/><stop offset="0.366" stop-color="#e0e0e0"/><stop offset="0.372" stop-color="#d7ebd7"/><stop offset="0.378" stop-color="#4bfb4b"/><stop offset="0.384" stop-color="#03fb08"/><stop offset="0.403" stop-color="#00aa50"/><stop offset="0.429" stop-color="#0028d7"/><stop offset="0.441" stop-color="#0006f9"/><stop offset="0.479" stop-color="#0006f9"/><stop offset="0.492" stop-color="#0023dc"/><stop offset="0.511" stop-color="#00936a"/><stop offset="0.523" stop-color="#00e219"/><stop offset="0.529" stop-color="#13fd14"/><stop offset="0.536" stop-color="#c8edc8"/><stop offset="0.542" stop-color="#dedede"/><stop offset="0.574" stop-color="#b6b6b6"/><stop offset="0.58" stop-color="#bfa5a5"/><stop offset="0.592" stop-color="#f13636"/><stop offset="0.599" stop-color="#fb110e"/><stop offset="0.605" stop-color="#ff1c00"/><stop offset="0.624" stop-color="#ffc500"/><stop offset="0.63" stop-color="#ffea00"/><stop offset="0.643" stop-color="#ffff06"/><stop offset="0.706" stop-color="#fff902"/><stop offset="0.712" stop-color="#ffee00"/><stop offset="0.725" stop-color="#ffa900"/><stop offset="0.744" stop-color="#ff1c00"/><stop offset="0.75" stop-color="#fd0c08"/><stop offset="0.756" stop-color="#f52625"/><stop offset="0.769" stop-color="#d48484"/><stop offset="0.775" stop-color="#bea8a8"/><stop offset="0.788" stop-color="#bababa"/><stop offset="0.826" stop-color="#dadada"/><stop offset="0.832" stop-color="#e3e5e3"/><stop offset="0.845" stop-color="#0bfc0e"/><stop offset="0.851" stop-color="#00e517"/><stop offset="0.882" stop-color="#00659a"/><stop offset="0.908" stop-color="#0035ca"/><stop offset="0.989" stop-color="#002bd4"/><stop offset="0.996" stop-color="#002dd2"/></linearGradient><linearGradient id="h38" x1="0" y1="0" x2="0" y2="1"><stop offset="0" stop-color="#005da2"/><stop offset="0.032" stop-color="#006f90"/><stop offset="0.076" stop-color="#00c931"/><stop offset="0.095" stop-color="#01fa06"/><stop offset="0.101" stop-color="#1bfe1b"/><stop offset="0.113" stop-color="#dae9da"/><stop offset="0.126" stop-color="#d8d8d8"/><stop offset="0.151" stop-color="#b7b7b7"/><stop offset="0.158" stop-color="#b9aeae"/><stop offset="0.164" stop-color="#ca9494"/><stop offset="0.176" stop-color="#f13333"/><stop offset="0.183" stop-color="#fa1714"/><stop offset="0.189" stop-color="#ff0b00"/><stop offset="0.214" stop-color="#ff8900"/><stop offset="0.233" stop-color="#ffb200"/><stop offset="0.252" stop-color="#ff9b00"/><stop offset="0.271" stop-color="#ff4d00"/><stop offset="0.284" stop-color="#ff1400"/><stop offset="0.29" stop-color="#fd0d09"/><stop offset="0.303" stop-color="#ec4646"/><stop offset="0.315" stop-color="#c59d9d"/><stop offset="0.328" stop-color="#b7b7b7"/><stop offset="0.366" stop-color="#e1e1e1"/><stop offset="0.372" stop-color="#d4ecd4"/><stop offset="0.378" stop-color="#3bfc3b"/><stop offset="0.384" stop-color="#00fa05"/><stop offset="0.403" stop-color="#00a754"/><stop offset="0.429" stop-color="#0026d9"/><stop offset="0.441" stop-color="#0006f9"/><stop offset="0.479" stop-color="#0006f9"/><stop offset="0.492" stop-color="#0024db"/><stop offset="0.511" stop-color="#009567"/><stop offset="0.523" stop-color="#00e418"/><stop offset="0.529" stop-color="#15fe17"/><stop offset="0.536" stop-color="#d4ecd4"/><stop offset="0.542" stop-color="#dddddd"/><stop offset="0.574" stop-color="#b5b5b5"/><stop offset="0.58" stop-color="#c0a4a4"/><stop offset="0.592" stop-color="#f23232"/><stop offset="0.599" stop-color="#fc0f0c"/><stop offset="0.605" stop-color="#ff1e00"/><stop offset="0.624" stop-color="#ffc900"/><stop offset="0.63" stop-color="#ffed00"/><stop offset="0.649" stop-color="#ffff08"/><stop offset="0.706" stop-color="#fff902"/><stop offset="0.712" stop-color="#ffee00"/><stop offset="0.725" stop-color="#ffa800"/><stop offset="0.744" stop-color="#ff1b00"/><stop offset="0.75" stop-color="#fd0c08"/><stop offset="0.756" stop-color="#f52726"/><stop offset="0.769" stop-color="#d48585"/><stop offset="0.775" stop-color="#bda8a8"/><stop offset="0.788" stop-color="#bababa"/><stop offset="0.826" stop-color="#dadada"/><stop offset="0.832" stop-color="#e2e5e2"/><stop offset="0.845" stop-color="#0bfc0e"/><stop offset="0.851" stop-color="#00e517"/><stop offset="0.882" stop-color="#006699"/><stop offset="0.908" stop-color="#0036c9"/><stop offset="0.989" stop-color="#002dd2"/><stop offset="0.996" stop-color="#002fd0"/></linearGradient><linearGradient id="h39" x1="0" y1="0" x2="0" y2="1"><stop offset="0" stop-color="#005da2"/><stop offset="0.032" stop-color="#00708f"/><stop offset="0.076" stop-color="#00cb2f"/><stop offset="0.095" stop-color="#04fb08"/><stop offset="0.101" stop-color="#1eff1e"/><stop offset="0.107" stop-color="#90f390"/><stop offset="0.113" stop-color="#dde8dd"/><stop offset="0.132" stop-color="#cdcdcd"/><stop offset="0.151" stop-color="#b6b6b6"/><stop offset="0.158" stop-color="#bbabab"/><stop offset="0.164" stop-color="#cf8d8d"/><stop offset="0.176" stop-color="#f32c2c"/><stop offset="0.183" stop-color="#fb1310"/><stop offset="0.189" stop-color="#ff1000"/><stop offset="0.214" stop-color="#ff8f00"/><stop offset="0.233" stop-color="#ffb500"/><stop offset="0.252" stop-color="#ff9c00"/><stop offset="0.271" stop-color="#ff4c00"/><stop offset="0.284" stop-color="#ff1200"/><stop offset="0.29" stop-color="#fc0f0b"/><stop offset="0.303" stop-color="#eb4a4a"/><stop offset="0.315" stop-color="#c3a1a1"/><stop offset="0.328" stop-color="#b7b7b7"/><stop offset="0.366" stop-color="#e2e2e2"/><stop offset="0.372" stop-color="#c5eec5"/><stop offset="0.378" stop-color="#2dfd2d"/><stop offset="0.384" stop-color="#00f807"/><stop offset="0.403" stop-color="#00a456"/><stop offset="0.429" stop-color="#0025da"/><stop offset="0.441" stop-color="#0005fa"/><stop offset="0.479" stop-color="#0006f9"/><stop offset="0.492" stop-color="#0025da"/><stop offset="0.511" stop-color="#009665"/><stop offset="0.523" stop-color="#00e616"/><stop offset="0.529" stop-color="#18fe19"/><stop offset="0.536" stop-color="#d6ebd6"/><stop offset="0.542" stop-color="#dddddd"/><stop offset="0.574" stop-color="#b5b5b5"/><stop offset="0.58" stop-color="#c1a3a3"/><stop offset="0.592" stop-color="#f32f2f"/><stop offset="0.599" stop-color="#fc0e0a"/><stop offset="0.605" stop-color="#ff2000"/><stop offset="0.624" stop-color="#ffcd00"/><stop offset="0.63" stop-color="#ffef00"/><stop offset="0.655" stop-color="#ffff0a"/><stop offset="0.706" stop-color="#fff902"/><stop offset="0.712" stop-color="#ffee00"/><stop offset="0.725" stop-color="#ffa700"/><stop offset="0.744" stop-color="#ff1b00"/><stop offset="0.75" stop-color="#fd0d09"/><stop offset="0.756" stop-color="#f52727"/><stop offset="0.769" stop-color="#d38686"/><stop offset="0.775" stop-color="#bda8a8"/><stop offset="0.788" stop-color="#bababa"/><stop offset="0.826" stop-color="#dbdbdb"/><stop offset="0.832" stop-color="#e2e5e2"/><stop offset="0.845" stop-color="#0bfc0e"/><stop offset="0.851" stop-color="#00e517"/><stop offset="0.882" stop-color="#006798"/><stop offset="0.908" stop-color="#0038c7"/><stop offset="0.989" stop-color="#002ed1"/><stop offset="0.996" stop-color="#0030cf"/></linearGradient><linearGradient id="h40" x1="0" y1="0" x2="0" y2="1"><stop offset="0" stop-color="#005da2"/><stop offset="0.032" stop-color="#00708f"/><stop offset="0.076" stop-color="#00cd2d"/><stop offset="0.095" stop-color="#07fb0b"/><stop offset="0.101" stop-color="#2ffd2f"/><stop offset="0.107" stop-color="#a4f1a4"/><stop offset="0.113" stop-color="#e1e6e1"/><stop offset="0.151" stop-color="#b5b5b5"/><stop offset="0.158" stop-color="#bda8a8"/><stop offset="0.17" stop-color="#e85656"/><stop offset="0.176" stop-color="#f42929"/><stop offset="0.183" stop-color="#fb110d"/><stop offset="0.189" stop-color="#ff1200"/><stop offset="0.214" stop-color="#ff8e00"/><stop offset="0.233" stop-color="#ffb200"/><stop offset="0.252" stop-color="#ff9800"/><stop offset="0.271" stop-color="#ff4800"/><stop offset="0.284" stop-color="#ff1000"/><stop offset="0.29" stop-color="#fc100c"/><stop offset="0.296" stop-color="#f52625"/><stop offset="0.309" stop-color="#db7979"/><stop offset="0.315" stop-color="#c2a2a2"/><stop offset="0.328" stop-color="#b7b7b7"/><stop offset="0.366" stop-color="#e2e2e2"/><stop offset="0.372" stop-color="#c5eec5"/><stop offset="0.378" stop-color="#2dfe2d"/><stop offset="0.384" stop-color="#00f807"/><stop offset="0.403" stop-color="#00a456"/><stop offset="0.429" stop-color="#0025da"/><stop offset="0.441" stop-color="#0005fa"/><stop offset="0.479" stop-color="#0006f9"/><stop offset="0.492" stop-color="#0025da"/><stop offset="0.511" stop-color="#009666"/><stop offset="0.523" stop-color="#00e616"/><stop offset="0.529" stop-color="#17fe19"/><stop offset="0.536" stop-color="#d5ebd5"/><stop offset="0.542" stop-color="#dddddd"/><stop offset="0.574" stop-color="#b5b5b5"/><stop offset="0.58" stop-color="#c1a3a3"/><stop offset="0.592" stop-color="#f22f2f"/><stop offset="0.599" stop-color="#fc0e0a"/><stop offset="0.605" stop-color="#ff2000"/><stop offset="0.624" stop-color="#ffcc00"/><stop offset="0.63" stop-color="#ffef00"/><stop offset="0.655" stop-color="#ffff0a"/><stop offset="0.706" stop-color="#fffa02"/><stop offset="0.712" stop-color="#ffef00"/><stop offset="0.725" stop-color="#ffa800"/><stop offset="0.744" stop-color="#ff1b00"/><stop offset="0.75" stop-color="#fd0d09"/><stop offset="0.756" stop-color="#f52727"/><stop offset="0.769" stop-color="#d38787"/><stop offset="0.775" stop-color="#bda9a9"/><stop offset="0.794" stop-color="#bfbfbf"/><stop offset="0.826" stop-color="#dbdbdb"/><stop offset="0.832" stop-color="#e2e5e2"/><stop offset="0.845" stop-color="#0bfc0e"/><stop offset="0.851" stop-color="#00e517"/><stop offset="0.882" stop-color="#006897"/><stop offset="0.908" stop-color="#0039c6"/><stop offset="0.989" stop-color="#002fd0"/><stop offset="0.996" stop-color="#0031ce"/></linearGradient><linearGradient id="h41" x1="0" y1="0" x2="0" y2="1"><stop offset="0" stop-color="#005da2"/><stop offset="0.032" stop-color="#00718e"/><stop offset="0.076" stop-color="#00cf2b"/><stop offset="0.088" stop-color="#00f00e"/><stop offset="0.095" stop-color="#0bfc0e"/><stop offset="0.101" stop-color="#41fc41"/><stop offset="0.107" stop-color="#b9efb9"/><stop offset="0.113" stop-color="#e4e4e4"/><stop offset="0.151" stop-color="#b5b5b5"/><stop offset="0.158" stop-color="#bfa6a6"/><stop offset="0.176" stop-color="#f52625"/><stop offset="0.183" stop-color="#fc0f0b"/><stop offset="0.189" stop-color="#ff1400"/><stop offset="0.214" stop-color="#ff8d00"/><stop offset="0.233" stop-color="#ffaf00"/><stop offset="0.252" stop-color="#ff9500"/><stop offset="0.284" stop-color="#ff0f00"/><stop offset="0.29" stop-color="#fb110e"/><stop offset="0.296" stop-color="#f52727"/><stop offset="0.315" stop-color="#c2a3a3"/><stop offset="0.328" stop-color="#b8b8b8"/><stop offset="0.366" stop-color="#e2e2e2"/><stop offset="0.372" stop-color="#c4eec4"/><stop offset="0.378" stop-color="#2dfe2d"/><stop offset="0.384" stop-color="#00f807"/><stop offset="0.403" stop-color="#00a556"/><stop offset="0.429" stop-color="#0025da"/><stop offset="0.441" stop-color="#0006f9"/><stop offset="0.479" stop-color="#0006f9"/><stop offset="0.492" stop-color="#0024db"/><stop offset="0.511" stop-color="#009666"/><stop offset="0.523" stop-color="#00e517"/><stop offset="0.529" stop-color="#17fe18"/><stop offset="0.536" stop-color="#d5ebd5"/><stop offset="0.542" stop-color="#dddddd"/><stop offset="0.574" stop-color="#b5b5b5"/><stop offset="0.58" stop-color="#c1a3a3"/><stop offset="0.592" stop-color="#f22f2f"/><stop offset="0.599" stop-color="#fc0e0a"/><stop offset="0.605" stop-color="#ff2000"/><stop offset="0.624" stop-color="#ffcc00"/><stop offset="0.63" stop-color="#ffef00"/><stop offset="0.655" stop-color="#ffff0b"/><stop offset="0.706" stop-color="#fffa02"/><stop offset="0.712" stop-color="#fff000"/><stop offset="0.725" stop-color="#ffa900"/><stop offset="0.744" stop-color="#ff1b00"/><stop offset="0.75" stop-color="#fd0d09"/><stop offset="0.756" stop-color="#f52727"/><stop offset="0.769" stop-color="#d38787"/><stop offset="0.775" stop-color="#bda9a9"/><stop offset="0.794" stop-color="#bfbfbf"/><stop offset="0.826" stop-color="#dbdbdb"/><stop offset="0.832" stop-color="#e2e5e2"/><stop offset="0.845" stop-color="#0bfc0e"/><stop offset="0.851" stop-color="#00e617"/><stop offset="0.882" stop-color="#006996"/><stop offset="0.908" stop-color="#003ac5"/><stop offset="0.989" stop-color="#0031ce"/><stop offset="0.996" stop-color="#0032cd"/></linearGradient><linearGradient id="h42" x1="0" y1="0" x2="0" y2="1"><stop offset="0" stop-color="#005da2"/><stop offset="0.032" stop-color="#00718e"/><stop offset="0.076" stop-color="#00d129"/><stop offset="0.088" stop-color="#00f20c"/><stop offset="0.095" stop-color="#0ffd12"/><stop offset="0.101" stop-color="#53fa53"/><stop offset="0.107" stop-color="#ceedce"/><stop offset="0.113" stop-color="#e2e2e2"/><stop offset="0.151" stop-color="#b4b3b3"/><stop offset="0.158" stop-color="#c1a3a3"/><stop offset="0.17" stop-color="#eb4a4a"/><stop offset="0.183" stop-color="#fd0c08"/><stop offset="0.195" stop-color="#ff2d00"/><stop offset="0.214" stop-color="#ff8c00"/><stop offset="0.233" stop-color="#ffad00"/><stop offset="0.252" stop-color="#ff9200"/><stop offset="0.284" stop-color="#ff0d00"/><stop offset="0.296" stop-color="#f42928"/><stop offset="0.315" stop-color="#c1a3a3"/><stop offset="0.328" stop-color="#b8b8b8"/><stop offset="0.366" stop-color="#e2e2e2"/><stop offset="0.372" stop-color="#c4eec4"/><stop offset="0.378" stop-color="#2cfe2c"/><stop offset="0.384" stop-color="#00f807"/><stop offset="0.403" stop-color="#00a556"/><stop offset="0.429" stop-color="#0026d9"/><stop offset="0.441" stop-color="#0006f9"/><stop offset="0.479" stop-color="#0006f9"/><stop offset="0.492" stop-color="#0024db"/><stop offset="0.511" stop-color="#009567"/><stop offset="0.523" stop-color="#00e517"/><stop offset="0.529" stop-color="#17fe18"/><stop offset="0.536" stop-color="#d5ebd5"/><stop offset="0.542" stop-color="#dddddd"/><stop offset="0.574" stop-color="#b5b5b5"/><stop offset="0.58" stop-color="#c1a3a3"/><stop offset="0.592" stop-color="#f22f2f"/><stop offset="0.599" stop-color="#fc0e0a"/><stop offset="0.605" stop-color="#ff2000"/><stop offset="0.624" stop-color="#ffcc00"/><stop offset="0.63" stop-color="#ffef00"/><stop offset="0.655" stop-color="#ffff0b"/><stop offset="0.706" stop-color="#fffa03"/><stop offset="0.712" stop-color="#fff000"/><stop offset="0.725" stop-color="#ffaa00"/><stop offset="0.744" stop-color="#ff1b00"/><stop offset="0.75" stop-color="#fd0d09"/><stop offset="0.756" stop-color="#f52727"/><stop offset="0.769" stop-color="#d28888"/><stop offset="0.775" stop-color="#bca9a9"/><stop offset="0.8" stop-color="#c1c1c1"/><stop offset="0.832" stop-color="#e1e5e1"/><stop offset="0.845" stop-color="#0bfc0e"/><stop offset="0.851" stop-color="#00e616"/><stop offset="0.882" stop-color="#006a95"/><stop offset="0.908" stop-color="#003bc4"/><stop offset="0.989" stop-color="#0032cd"/><stop offset="0.996" stop-color="#0034cb"/></linearGradient><linearGradient id="h43" x1="0" y1="0" x2="0" y2="1"><stop offset="0" stop-color="#005da2"/><stop offset="0.032" stop-color="#00718e"/><stop offset="0.076" stop-color="#00d327"/><stop offset="0.088" stop-color="#00f50a"/><stop offset="0.095" stop-color="#13fd15"/><stop offset="0.101" stop-color="#66f866"/><stop offset="0.107" stop-color="#d7ebd7"/><stop offset="0.113" stop-color="#e1e1e1"/><stop offset="0.145" stop-color="#b8b8b8"/><stop offset="0.158" stop-color="#c49e9e"/><stop offset="0.17" stop-color="#ed4444"/><stop offset="0.183" stop-color="#fd0b06"/><stop offset="0.195" stop-color="#ff2f00"/><stop offset="0.214" stop-color="#ff8b00"/><stop offset="0.233" stop-color="#ffaa00"/><stop offset="0.252" stop-color="#ff8e00"/><stop offset="0.284" stop-color="#ff0b00"/><stop offset="0.296" stop-color="#f42a2a"/><stop offset="0.315" stop-color="#c1a4a4"/><stop offset="0.328" stop-color="#b8b8b8"/><stop offset="0.366" stop-color="#e2e2e2"/><stop offset="0.372" stop-color="#c3eec3"/><stop offset="0.378" stop-color="#2cfe2c"/><stop offset="0.384" stop-color="#00f807"/><stop offset="0.403" stop-color="#00a555"/><stop offset="0.429" stop-color="#0026d9"/><stop offset="0.441" stop-color="#0006f9"/><stop offset="0.479" stop-color="#0006f9"/><stop offset="0.492" stop-color="#0024db"/><stop offset="0.511" stop-color="#009567"/><stop offset="0.523" stop-color="#00e517"/><stop offset="0.529" stop-color="#17fe18"/><stop offset="0.536" stop-color="#d5ebd5"/><stop offset="0.542" stop-color="#dddddd"/><stop offset="0.574" stop-color="#b5b5b5"/><stop offset="0.58" stop-color="#c1a3a3"/><stop offset="0.592" stop-color="#f22f2f"/><stop offset="0.599" stop-color="#fc0e0a"/><stop offset="0.605" stop-color="#ff2000"/><stop offset="0.624" stop-color="#ffcc00"/><stop offset="0.63" stop-color="#ffef00"/><stop offset="0.655" stop-color="#ffff0b"/><stop offset="0.706" stop-color="#fffa03"/><stop offset="0.712" stop-color="#fff100"/><stop offset="0.725" stop-color="#ffac00"/><stop offset="0.744" stop-color="#ff1c00"/><stop offset="0.75" stop-color="#fd0d09"/><stop offset="0.756" stop-color="#f52727"/><stop offset="0.769" stop-color="#d28888"/><stop offset="0.775" stop-color="#bca9a9"/><stop offset="0.8" stop-color="#c1c1c1"/><stop offset="0.832" stop-color="#e1e5e1"/><stop offset="0.845" stop-color="#0afc0e"/><stop offset="0.851" stop-color="#00e616"/><stop offset="0.882" stop-color="#006b94"/><stop offset="0.908" stop-color="#003dc2"/><stop offset="0.989" stop-color="#0033cc"/><stop offset="0.996" stop-color="#0035ca"/></linearGradient><linearGradient id="h44" x1="0" y1="0" x2="0" y2="1"><stop offset="0" stop-color="#00659a"/><stop offset="0.032" stop-color="#007886"/><stop offset="0.082" stop-color="#00e914"/><stop offset="0.088" stop-color="#00fa05"/><stop offset="0.095" stop-color="#1bfe1b"/><stop offset="0.101" stop-color="#86f586"/><stop offset="0.107" stop-color="#dce8dc"/><stop offset="0.12" stop-color="#d6d6d6"/><stop offset="0.145" stop-color="#b7b7b7"/><stop offset="0.158" stop-color="#c89898"/><stop offset="0.17" stop-color="#ee3e3e"/><stop offset="0.183" stop-color="#fe0904"/><stop offset="0.195" stop-color="#ff3100"/><stop offset="0.214" stop-color="#ff8900"/><stop offset="0.233" stop-color="#ffa700"/><stop offset="0.252" stop-color="#ff8b00"/><stop offset="0.284" stop-color="#ff0900"/><stop offset="0.296" stop-color="#f42b2b"/><stop offset="0.315" stop-color="#c0a4a4"/><stop offset="0.328" stop-color="#b8b8b8"/><stop offset="0.366" stop-color="#e1e1e1"/><stop offset="0.372" stop-color="#d4ecd4"/><stop offset="0.378" stop-color="#41fc41"/><stop offset="0.384" stop-color="#03fa07"/><stop offset="0.403" stop-color="#00ad4d"/><stop offset="0.429" stop-color="#0032cd"/><stop offset="0.441" stop-color="#000cf3"/><stop offset="0.466" stop-color="#0001fe"/><stop offset="0.485" stop-color="#0017e8"/><stop offset="0.504" stop-color="#00758a"/><stop offset="0.523" stop-color="#00e913"/><stop offset="0.529" stop-color="#1cff1c"/><stop offset="0.536" stop-color="#d8ead8"/><stop offset="0.542" stop-color="#dcdcdc"/><stop offset="0.574" stop-color="#b5b5b5"/><stop offset="0.58" stop-color="#c0a4a4"/><stop offset="0.592" stop-color="#f13333"/><stop offset="0.599" stop-color="#fc100d"/><stop offset="0.605" stop-color="#ff1d00"/><stop offset="0.624" stop-color="#ffc400"/><stop offset="0.63" stop-color="#ffe900"/><stop offset="0.643" stop-color="#ffff05"/><stop offset="0.706" stop-color="#fff902"/><stop offset="0.718" stop-color="#ffd000"/><stop offset="0.744" stop-color="#ff1900"/><stop offset="0.75" stop-color="#fc0f0b"/><stop offset="0.756" stop-color="#f42929"/><stop offset="0.769" stop-color="#d08b8b"/><stop offset="0.775" stop-color="#bcaaaa"/><stop offset="0.807" stop-color="#c5c5c5"/><stop offset="0.832" stop-color="#e1e6e1"/><stop offset="0.845" stop-color="#0afc0e"/><stop offset="0.857" stop-color="#00cb2f"/><stop offset="0.882" stop-color="#006c93"/><stop offset="0.908" stop-color="#003ec1"/><stop offset="0.989" stop-color="#0035ca"/><stop offset="0.996" stop-color="#0036c9"/></linearGradient><linearGradient id="h45" x1="0" y1="0" x2="0" y2="1"><stop offset="0" stop-color="#006c93"/><stop offset="0.032" stop-color="#007f7f"/><stop offset="0.082" stop-color="#00ee0f"/><stop offset="0.088" stop-color="#08fb0b"/><stop offset="0.095" stop-color="#31fd31"/><stop offset="0.101" stop-color="#a7f1a7"/><stop offset="0.107" stop-color="#e1e5e1"/><stop offset="0.145" stop-color="#b6b6b6"/><stop offset="0.158" stop-color="#cc9191"/><stop offset="0.17" stop-color="#f03939"/><stop offset="0.183" stop-color="#fe0702"/><stop offset="0.195" stop-color="#ff3200"/><stop offset="0.214" stop-color="#ff8800"/><stop offset="0.233" stop-color="#ffa400"/><stop offset="0.252" stop-color="#ff8800"/><stop offset="0.284" stop-color="#ff0800"/><stop offset="0.296" stop-color="#f32c2c"/><stop offset="0.315" stop-color="#c0a5a5"/><stop offset="0.328" stop-color="#b8b8b8"/><stop offset="0.366" stop-color="#e0e0e0"/><stop offset="0.372" stop-color="#d7ebd7"/><stop offset="0.378" stop-color="#56f956"/><stop offset="0.384" stop-color="#09fb0c"/><stop offset="0.397" stop-color="#00cf2b"/><stop offset="0.435" stop-color="#0026d9"/><stop offset="0.447" stop-color="#000bf4"/><stop offset="0.479" stop-color="#0012ed"/><stop offset="0.498" stop-color="#005aa5"/><stop offset="0.523" stop-color="#00ee0f"/><stop offset="0.529" stop-color="#2afe2a"/><stop offset="0.536" stop-color="#dae9da"/><stop offset="0.567" stop-color="#bbbbbb"/><stop offset="0.574" stop-color="#b5b5b5"/><stop offset="0.58" stop-color="#c0a5a5"/><stop offset="0.592" stop-color="#f03737"/><stop offset="0.599" stop-color="#fb130f"/><stop offset="0.605" stop-color="#ff1900"/><stop offset="0.624" stop-color="#ffbc00"/><stop offset="0.63" stop-color="#ffe300"/><stop offset="0.643" stop-color="#fffe05"/><stop offset="0.706" stop-color="#fff801"/><stop offset="0.718" stop-color="#ffca00"/><stop offset="0.737" stop-color="#ff3900"/><stop offset="0.744" stop-color="#ff1600"/><stop offset="0.75" stop-color="#fb110d"/><stop offset="0.756" stop-color="#f32c2b"/><stop offset="0.769" stop-color="#cf8d8d"/><stop offset="0.775" stop-color="#bbabab"/><stop offset="0.813" stop-color="#cacaca"/><stop offset="0.832" stop-color="#e1e6e1"/><stop offset="0.845" stop-color="#0afc0e"/><stop offset="0.857" stop-color="#00cb2f"/><stop offset="0.882" stop-color="#006e91"/><stop offset="0.908" stop-color="#003fc0"/><stop offset="0.989" stop-color="#0036c9"/><stop offset="0.996" stop-color="#0038c7"/></linearGradient><linearGradient id="h46" x1="0" y1="0" x2="0" y2="1"><stop offset="0" stop-color="#00738c"/><stop offset="0.032" stop-color="#008677"/><stop offset="0.082" stop-color="#00f30b"/><stop offset="0.088" stop-color="#0ffd12"/><stop offset="0.095" stop-color="#50fa50"/><stop offset="0.101" stop-color="#c8edc8"/><stop offset="0.107" stop-color="#e3e3e3"/><stop offset="0.145" stop-color="#b5b5b5"/><stop offset="0.151" stop-color="#bda9a9"/><stop offset="0.164" stop-color="#e56161"/><stop offset="0.17" stop-color="#f13434"/><stop offset="0.183" stop-color="#ff0500"/><stop offset="0.214" stop-color="#ff8700"/><stop offset="0.233" stop-color="#ffa100"/><stop offset="0.252" stop-color="#ff8400"/><stop offset="0.284" stop-color="#ff0600"/><stop offset="0.296" stop-color="#f32e2e"/><stop offset="0.315" stop-color="#bfa5a5"/><stop offset="0.328" stop-color="#b8b8b8"/><stop offset="0.366" stop-color="#e0e0e0"/><stop offset="0.372" stop-color="#dae9da"/><stop offset="0.378" stop-color="#6af76a"/><stop offset="0.384" stop-color="#0ffc11"/><stop offset="0.391" stop-color="#00ed10"/><stop offset="0.416" stop-color="#00837a"/><stop offset="0.441" stop-color="#001ee1"/><stop offset="0.46" stop-color="#000df2"/><stop offset="0.479" stop-color="#001de2"/><stop offset="0.498" stop-color="#00659a"/><stop offset="0.523" stop-color="#00f20c"/><stop offset="0.529" stop-color="#3ffc3f"/><stop offset="0.536" stop-color="#dde8dd"/><stop offset="0.567" stop-color="#bbbbbb"/><stop offset="0.58" stop-color="#bfa5a5"/><stop offset="0.592" stop-color="#ef3b3b"/><stop offset="0.599" stop-color="#fa1512"/><stop offset="0.605" stop-color="#ff1600"/><stop offset="0.618" stop-color="#ff7e00"/><stop offset="0.63" stop-color="#ffdd00"/><stop offset="0.637" stop-color="#fff601"/><stop offset="0.7" stop-color="#fffc03"/><stop offset="0.712" stop-color="#ffe200"/><stop offset="0.725" stop-color="#ff9800"/><stop offset="0.737" stop-color="#ff3300"/><stop offset="0.744" stop-color="#ff1300"/><stop offset="0.75" stop-color="#fb1310"/><stop offset="0.756" stop-color="#f32e2e"/><stop offset="0.769" stop-color="#cd9090"/><stop offset="0.775" stop-color="#baacac"/><stop offset="0.819" stop-color="#d2d2d2"/><stop offset="0.832" stop-color="#e0e6e0"/><stop offset="0.845" stop-color="#0afc0d"/><stop offset="0.857" stop-color="#00cc2e"/><stop offset="0.882" stop-color="#006f90"/><stop offset="0.908" stop-color="#0041be"/><stop offset="0.989" stop-color="#0037c8"/><stop offset="0.996" stop-color="#0039c6"/></linearGradient><linearGradient id="h47" x1="0" y1="0" x2="0" y2="1"><stop offset="0" stop-color="#007a84"/><stop offset="0.032" stop-color="#008d70"/><stop offset="0.082" stop-color="#00f806"/><stop offset="0.088" stop-color="#17fe18"/><stop offset="0.095" stop-color="#70f770"/><stop offset="0.101" stop-color="#d7ead7"/><stop offset="0.107" stop-color="#e1e1e1"/><stop offset="0.145" stop-color="#b4b4b4"/><stop offset="0.151" stop-color="#bfa6a6"/><stop offset="0.17" stop-color="#f22f2f"/><stop offset="0.183" stop-color="#ff0600"/><stop offset="0.214" stop-color="#ff8500"/><stop offset="0.233" stop-color="#ff9f00"/><stop offset="0.252" stop-color="#ff8100"/><stop offset="0.284" stop-color="#ff0601"/><stop offset="0.296" stop-color="#f23131"/><stop offset="0.315" stop-color="#bfa6a6"/><stop offset="0.328" stop-color="#b8b8b8"/><stop offset="0.372" stop-color="#dce8dc"/><stop offset="0.384" stop-color="#15fe17"/><stop offset="0.391" stop-color="#00f20c"/><stop offset="0.416" stop-color="#008e6f"/><stop offset="0.441" stop-color="#002bd4"/><stop offset="0.454" stop-color="#0013ec"/><stop offset="0.473" stop-color="#001de2"/><stop offset="0.492" stop-color="#0052ad"/><stop offset="0.523" stop-color="#00f708"/><stop offset="0.529" stop-color="#54fa54"/><stop offset="0.536" stop-color="#dfe6df"/><stop offset="0.574" stop-color="#b5b5b5"/><stop offset="0.58" stop-color="#bfa6a6"/><stop offset="0.592" stop-color="#ee3e3e"/><stop offset="0.599" stop-color="#f91715"/><stop offset="0.605" stop-color="#ff1300"/><stop offset="0.611" stop-color="#ff3c00"/><stop offset="0.624" stop-color="#ffac00"/><stop offset="0.637" stop-color="#fff400"/><stop offset="0.681" stop-color="#ffff08"/><stop offset="0.706" stop-color="#fff500"/><stop offset="0.718" stop-color="#ffbc00"/><stop offset="0.737" stop-color="#ff2d00"/><stop offset="0.744" stop-color="#ff1000"/><stop offset="0.75" stop-color="#fa1512"/><stop offset="0.756" stop-color="#f23232"/><stop offset="0.769" stop-color="#cc9292"/><stop offset="0.775" stop-color="#baadad"/><stop offset="0.819" stop-color="#d2d2d2"/><stop offset="0.832" stop-color="#e0e6e0"/><stop offset="0.845" stop-color="#0afc0d"/><stop offset="0.857" stop-color="#00cc2e"/><stop offset="0.882" stop-color="#00708f"/><stop offset="0.908" stop-color="#0042bd"/><stop offset="0.989" stop-color="#0038c7"/><stop offset="0.996" stop-color="#003ac5"/></linearGradient><linearGradient id="h48" x1="0" y1="0" x2="0" y2="1"><stop offset="0" stop-color="#00817d"/><stop offset="0.032" stop-color="#009369"/><stop offset="0.082" stop-color="#05fb09"/><stop offset="0.088" stop-color="#21ff21"/><stop offset="0.095" stop-color="#8ff48f"/><stop offset="0.101" stop-color="#dce8dc"/><stop offset="0.12" stop-color="#cdcdcd"/><stop offset="0.145" stop-color="#b4b4b4"/><stop offset="0.151" stop-color="#c0a5a5"/><stop offset="0.17" stop-color="#f23030"/><stop offset="0.183" stop-color="#ff0601"/><stop offset="0.202" stop-color="#ff4b00"/><stop offset="0.221" stop-color="#ff8600"/><stop offset="0.239" stop-color="#ff8c00"/><stop offset="0.258" stop-color="#ff5d00"/><stop offset="0.277" stop-color="#ff1400"/><stop offset="0.284" stop-color="#fd0b06"/><stop offset="0.296" stop-color="#f03838"/><stop offset="0.315" stop-color="#bea7a7"/><stop offset="0.328" stop-color="#b8b8b8"/><stop offset="0.372" stop-color="#dce8dc"/><stop offset="0.384" stop-color="#16fe17"/><stop offset="0.391" stop-color="#00f30b"/><stop offset="0.422" stop-color="#007985"/><stop offset="0.447" stop-color="#0029d6"/><stop offset="0.466" stop-color="#0024db"/><stop offset="0.485" stop-color="#0049b6"/><stop offset="0.523" stop-color="#02fa07"/><stop offset="0.529" stop-color="#67f867"/><stop offset="0.536" stop-color="#e1e5e1"/><stop offset="0.574" stop-color="#b6b6b6"/><stop offset="0.58" stop-color="#bea7a7"/><stop offset="0.599" stop-color="#f81c1a"/><stop offset="0.605" stop-color="#ff0c00"/><stop offset="0.611" stop-color="#ff2d00"/><stop offset="0.63" stop-color="#ffc900"/><stop offset="0.643" stop-color="#fff701"/><stop offset="0.7" stop-color="#fff701"/><stop offset="0.712" stop-color="#ffd100"/><stop offset="0.737" stop-color="#ff2600"/><stop offset="0.744" stop-color="#ff0900"/><stop offset="0.756" stop-color="#f03a3a"/><stop offset="0.769" stop-color="#c99797"/><stop offset="0.782" stop-color="#b7b7b7"/><stop offset="0.826" stop-color="#dbdbdb"/><stop offset="0.832" stop-color="#e1e6e1"/><stop offset="0.845" stop-color="#0cfc0f"/><stop offset="0.851" stop-color="#00e815"/><stop offset="0.882" stop-color="#00748b"/><stop offset="0.908" stop-color="#0048b7"/><stop offset="0.989" stop-color="#003ec1"/><stop offset="0.996" stop-color="#0040bf"/></linearGradient><linearGradient id="h49" x1="0" y1="0" x2="0" y2="1"><stop offset="0" stop-color="#008776"/><stop offset="0.032" stop-color="#009a62"/><stop offset="0.076" stop-color="#00f20c"/><stop offset="0.082" stop-color="#0dfc10"/><stop offset="0.088" stop-color="#3ffc3f"/><stop offset="0.095" stop-color="#aff0af"/><stop offset="0.101" stop-color="#e2e5e2"/><stop offset="0.139" stop-color="#b7b7b7"/><stop offset="0.151" stop-color="#c0a4a4"/><stop offset="0.17" stop-color="#f23333"/><stop offset="0.183" stop-color="#fe0905"/><stop offset="0.202" stop-color="#ff3e00"/><stop offset="0.221" stop-color="#ff7600"/><stop offset="0.239" stop-color="#ff7b00"/><stop offset="0.258" stop-color="#ff4c00"/><stop offset="0.277" stop-color="#ff0c00"/><stop offset="0.29" stop-color="#f62322"/><stop offset="0.309" stop-color="#ce8f8f"/><stop offset="0.321" stop-color="#b5b5b5"/><stop offset="0.366" stop-color="#dfdfdf"/><stop offset="0.372" stop-color="#dce8dc"/><stop offset="0.384" stop-color="#16fe17"/><stop offset="0.391" stop-color="#00f30b"/><stop offset="0.441" stop-color="#0043bc"/><stop offset="0.46" stop-color="#002fd0"/><stop offset="0.479" stop-color="#0047b8"/><stop offset="0.498" stop-color="#008a72"/><stop offset="0.517" stop-color="#00e319"/><stop offset="0.523" stop-color="#09fb0c"/><stop offset="0.536" stop-color="#e3e4e3"/><stop offset="0.574" stop-color="#b6b6b6"/><stop offset="0.58" stop-color="#bda9a9"/><stop offset="0.586" stop-color="#d58484"/><stop offset="0.599" stop-color="#f62220"/><stop offset="0.605" stop-color="#ff0601"/><stop offset="0.611" stop-color="#ff2500"/><stop offset="0.63" stop-color="#ffb500"/><stop offset="0.643" stop-color="#ffef00"/><stop offset="0.681" stop-color="#fffd04"/><stop offset="0.7" stop-color="#ffee00"/><stop offset="0.712" stop-color="#ffbf00"/><stop offset="0.737" stop-color="#ff1e00"/><stop offset="0.744" stop-color="#fe0703"/><stop offset="0.756" stop-color="#ed4242"/><stop offset="0.769" stop-color="#c59d9d"/><stop offset="0.782" stop-color="#b7b7b7"/><stop offset="0.826" stop-color="#dbdbdb"/><stop offset="0.832" stop-color="#e1e5e1"/><stop offset="0.838" stop-color="#80f580"/><stop offset="0.845" stop-color="#0ffc11"/><stop offset="0.851" stop-color="#00ea13"/><stop offset="0.882" stop-color="#007a85"/><stop offset="0.908" stop-color="#004eb1"/><stop offset="0.977" stop-color="#0048b7"/><stop offset="0.996" stop-color="#004bb4"/></linearGradient><linearGradient id="h50" x1="0" y1="0" x2="0" y2="1"><stop offset="0" stop-color="#008c71"/><stop offset="0.032" stop-color="#009e5d"/><stop offset="0.076" stop-color="#00f707"/><stop offset="0.082" stop-color="#14fd16"/><stop offset="0.088" stop-color="#5df95d"/><stop offset="0.095" stop-color="#cfedcf"/><stop offset="0.101" stop-color="#e3e3e3"/><stop offset="0.139" stop-color="#b7b7b7"/><stop offset="0.151" stop-color="#c1a3a3"/><stop offset="0.17" stop-color="#f13636"/><stop offset="0.183" stop-color="#fd0d09"/><stop offset="0.195" stop-color="#ff2000"/><stop offset="0.221" stop-color="#ff6600"/><stop offset="0.239" stop-color="#ff6a00"/><stop offset="0.258" stop-color="#ff3c00"/><stop offset="0.277" stop-color="#ff0500"/><stop offset="0.29" stop-color="#f42928"/><stop offset="0.309" stop-color="#ca9595"/><stop offset="0.321" stop-color="#b5b5b5"/><stop offset="0.366" stop-color="#dfdfdf"/><stop offset="0.372" stop-color="#dce8dc"/><stop offset="0.384" stop-color="#17fe18"/><stop offset="0.391" stop-color="#00f40a"/><stop offset="0.441" stop-color="#004fb0"/><stop offset="0.46" stop-color="#003ec1"/><stop offset="0.479" stop-color="#0057a8"/><stop offset="0.498" stop-color="#009765"/><stop offset="0.517" stop-color="#00e914"/><stop offset="0.523" stop-color="#10fd12"/><stop offset="0.529" stop-color="#8df48d"/><stop offset="0.536" stop-color="#e4e4e4"/><stop offset="0.574" stop-color="#b6b6b6"/><stop offset="0.58" stop-color="#bbabab"/><stop offset="0.586" stop-color="#d18989"/><stop offset="0.599" stop-color="#f52726"/><stop offset="0.605" stop-color="#fd0c08"/><stop offset="0.611" stop-color="#ff1c00"/><stop offset="0.637" stop-color="#ffc700"/><stop offset="0.649" stop-color="#fff200"/><stop offset="0.687" stop-color="#fff701"/><stop offset="0.706" stop-color="#ffcc00"/><stop offset="0.725" stop-color="#ff5f00"/><stop offset="0.731" stop-color="#ff3200"/><stop offset="0.737" stop-color="#ff1600"/><stop offset="0.744" stop-color="#fd0d09"/><stop offset="0.756" stop-color="#eb4b4b"/><stop offset="0.769" stop-color="#c2a2a2"/><stop offset="0.782" stop-color="#b7b7b7"/><stop offset="0.826" stop-color="#dbdbdb"/><stop offset="0.832" stop-color="#e2e5e2"/><stop offset="0.838" stop-color="#88f488"/><stop offset="0.845" stop-color="#11fd13"/><stop offset="0.851" stop-color="#00ec11"/><stop offset="0.882" stop-color="#007f7f"/><stop offset="0.908" stop-color="#0055aa"/><stop offset="0.945" stop-color="#0054ab"/><stop offset="0.996" stop-color="#00738c"/></linearGradient><linearGradient id="h51" x1="0" y1="0" x2="0" y2="1"><stop offset="0" stop-color="#008a73"/><stop offset="0.025" stop-color="#00926a"/><stop offset="0.076" stop-color="#01fa06"/><stop offset="0.082" stop-color="#19fe1a"/><stop offset="0.095" stop-color="#d8ead8"/><stop offset="0.101" stop-color="#e1e1e1"/><stop offset="0.139" stop-color="#b6b6b6"/><stop offset="0.151" stop-color="#c1a3a3"/><stop offset="0.17" stop-color="#f03939"/><stop offset="0.183" stop-color="#fc100d"/><stop offset="0.189" stop-color="#ff0a00"/><stop offset="0.221" stop-color="#ff5600"/><stop offset="0.239" stop-color="#ff5800"/><stop offset="0.271" stop-color="#ff0f00"/><stop offset="0.277" stop-color="#fd0c07"/><stop offset="0.29" stop-color="#f32f2f"/><stop offset="0.309" stop-color="#c79b9b"/><stop offset="0.321" stop-color="#b6b6b6"/><stop offset="0.366" stop-color="#dfdfdf"/><stop offset="0.372" stop-color="#dce8dc"/><stop offset="0.378" stop-color="#83f583"/><stop offset="0.384" stop-color="#18fe19"/><stop offset="0.391" stop-color="#00f609"/><stop offset="0.441" stop-color="#005da2"/><stop offset="0.46" stop-color="#004db2"/><stop offset="0.479" stop-color="#006798"/><stop offset="0.511" stop-color="#00d624"/><stop offset="0.517" stop-color="#00ef0f"/><stop offset="0.523" stop-color="#16fe17"/><stop offset="0.529" stop-color="#a0f2a0"/><stop offset="0.536" stop-color="#e3e3e3"/><stop offset="0.574" stop-color="#b7b7b7"/><stop offset="0.58" stop-color="#baacac"/><stop offset="0.586" stop-color="#ce8f8f"/><stop offset="0.599" stop-color="#f32c2c"/><stop offset="0.605" stop-color="#fb120e"/><stop offset="0.611" stop-color="#ff1400"/><stop offset="0.618" stop-color="#ff3200"/><stop offset="0.637" stop-color="#ffb300"/><stop offset="0.649" stop-color="#ffe200"/><stop offset="0.668" stop-color="#fff601"/><stop offset="0.687" stop-color="#ffec00"/><stop offset="0.706" stop-color="#ffb800"/><stop offset="0.731" stop-color="#ff2700"/><stop offset="0.737" stop-color="#ff0e00"/><stop offset="0.744" stop-color="#fb1310"/><stop offset="0.75" stop-color="#f42a29"/><stop offset="0.769" stop-color="#c0a4a4"/><stop offset="0.782" stop-color="#b8b8b8"/><stop offset="0.826" stop-color="#dbdbdb"/><stop offset="0.832" stop-color="#e3e4e3"/><stop offset="0.838" stop-color="#91f391"/><stop offset="0.845" stop-color="#14fd16"/><stop offset="0.851" stop-color="#00ee0f"/><stop offset="0.882" stop-color="#008479"/><stop offset="0.908" stop-color="#005da2"/><stop offset="0.933" stop-color="#005fa0"/><stop offset="0.964" stop-color="#009c5f"/><stop offset="0.983" stop-color="#00bd3d"/><stop offset="0.996" stop-color="#00bf3b"/></linearGradient><linearGradient id="h52" x1="0" y1="0" x2="0" y2="1"><stop offset="0" stop-color="#007d81"/><stop offset="0.025" stop-color="#00817d"/><stop offset="0.076" stop-color="#03fb08"/><stop offset="0.082" stop-color="#1dff1e"/><stop offset="0.088" stop-color="#8cf48c"/><stop offset="0.095" stop-color="#dce8dc"/><stop offset="0.107" stop-color="#d7d7d7"/><stop offset="0.139" stop-color="#b6b6b6"/><stop offset="0.151" stop-color="#c2a2a2"/><stop offset="0.17" stop-color="#ef3c3c"/><stop offset="0.189" stop-color="#ff0601"/><stop offset="0.227" stop-color="#ff4b00"/><stop offset="0.246" stop-color="#ff3e00"/><stop offset="0.271" stop-color="#ff0700"/><stop offset="0.29" stop-color="#f03838"/><stop offset="0.309" stop-color="#c3a0a0"/><stop offset="0.328" stop-color="#b9b9b9"/><stop offset="0.372" stop-color="#dde8dd"/><stop offset="0.378" stop-color="#8df48d"/><stop offset="0.384" stop-color="#1bff1c"/><stop offset="0.391" stop-color="#00f906"/><stop offset="0.435" stop-color="#007985"/><stop offset="0.454" stop-color="#005fa0"/><stop offset="0.479" stop-color="#007886"/><stop offset="0.517" stop-color="#00f509"/><stop offset="0.523" stop-color="#1dff1d"/><stop offset="0.529" stop-color="#b1f0b1"/><stop offset="0.536" stop-color="#e3e3e3"/><stop offset="0.574" stop-color="#b7b7b7"/><stop offset="0.586" stop-color="#c89898"/><stop offset="0.599" stop-color="#f03838"/><stop offset="0.611" stop-color="#ff0900"/><stop offset="0.624" stop-color="#ff4c00"/><stop offset="0.643" stop-color="#ffb800"/><stop offset="0.655" stop-color="#ffdc00"/><stop offset="0.674" stop-color="#ffe700"/><stop offset="0.693" stop-color="#ffcf00"/><stop offset="0.712" stop-color="#ff8400"/><stop offset="0.731" stop-color="#ff1f00"/><stop offset="0.737" stop-color="#ff0700"/><stop offset="0.75" stop-color="#f22f2f"/><stop offset="0.769" stop-color="#c0a5a5"/><stop offset="0.782" stop-color="#b8b8b8"/><stop offset="0.826" stop-color="#dadada"/><stop offset="0.832" stop-color="#e3e3e3"/><stop offset="0.838" stop-color="#b5efb5"/><stop offset="0.845" stop-color="#1fff1f"/><stop offset="0.851" stop-color="#00f708"/><stop offset="0.889" stop-color="#00817c"/><stop offset="0.914" stop-color="#00629d"/><stop offset="0.939" stop-color="#00748b"/><stop offset="0.977" stop-color="#00d525"/><stop offset="0.996" stop-color="#00e01b"/></linearGradient><linearGradient id="h53" x1="0" y1="0" x2="0" y2="1"><stop offset="0" stop-color="#006996"/><stop offset="0.019" stop-color="#005fa0"/><stop offset="0.038" stop-color="#00837b"/><stop offset="0.069" stop-color="#00e913"/><stop offset="0.076" stop-color="#04fb08"/><stop offset="0.082" stop-color="#29fe29"/><stop offset="0.088" stop-color="#a1f2a1"/><stop offset="0.095" stop-color="#e0e6e0"/><stop offset="0.126" stop-color="#bcbcbc"/><stop offset="0.145" stop-color="#b9aeae"/><stop offset="0.151" stop-color="#c2a2a2"/><stop offset="0.17" stop-color="#ec4848"/><stop offset="0.183" stop-color="#f81e1c"/><stop offset="0.195" stop-color="#ff0601"/><stop offset="0.227" stop-color="#ff2800"/><stop offset="0.258" stop-color="#ff1000"/><stop offset="0.265" stop-color="#ff0500"/><stop offset="0.284" stop-color="#f32c2c"/><stop offset="0.303" stop-color="#d28888"/><stop offset="0.315" stop-color="#b7b0b0"/><stop offset="0.353" stop-color="#cfcfcf"/><stop offset="0.372" stop-color="#dfe7df"/><stop offset="0.378" stop-color="#9af29a"/><stop offset="0.384" stop-color="#24fe24"/><stop offset="0.391" stop-color="#03fb08"/><stop offset="0.441" stop-color="#007e80"/><stop offset="0.46" stop-color="#00748b"/><stop offset="0.485" stop-color="#009863"/><stop offset="0.517" stop-color="#02fa07"/><stop offset="0.523" stop-color="#33fd33"/><stop offset="0.529" stop-color="#c3eec3"/><stop offset="0.536" stop-color="#e2e2e2"/><stop offset="0.574" stop-color="#b8b8b8"/><stop offset="0.586" stop-color="#c3a1a1"/><stop offset="0.599" stop-color="#ec4747"/><stop offset="0.611" stop-color="#fd0b07"/><stop offset="0.624" stop-color="#ff3400"/><stop offset="0.643" stop-color="#ff9d00"/><stop offset="0.662" stop-color="#ffd000"/><stop offset="0.681" stop-color="#ffcf00"/><stop offset="0.7" stop-color="#ffa200"/><stop offset="0.731" stop-color="#ff1600"/><stop offset="0.737" stop-color="#fe0a06"/><stop offset="0.75" stop-color="#f03737"/><stop offset="0.769" stop-color="#bfa6a6"/><stop offset="0.782" stop-color="#b8b8b8"/><stop offset="0.832" stop-color="#e1e1e1"/><stop offset="0.838" stop-color="#d6ebd6"/><stop offset="0.845" stop-color="#53fa53"/><stop offset="0.851" stop-color="#0afc0d"/><stop offset="0.863" stop-color="#00d723"/><stop offset="0.895" stop-color="#007f7f"/><stop offset="0.926" stop-color="#005da2"/><stop offset="0.952" stop-color="#00738c"/><stop offset="0.989" stop-color="#00ae4c"/><stop offset="0.996" stop-color="#00b04a"/></linearGradient><linearGradient id="h54" x1="0" y1="0" x2="0" y2="1"><stop offset="0" stop-color="#005ca3"/><stop offset="0.019" stop-color="#004eb1"/><stop offset="0.038" stop-color="#007788"/><stop offset="0.069" stop-color="#00ea13"/><stop offset="0.076" stop-color="#07fb0b"/><stop offset="0.082" stop-color="#3cfc3c"/><stop offset="0.088" stop-color="#bbefbb"/><stop offset="0.095" stop-color="#e4e4e4"/><stop offset="0.126" stop-color="#bbbbbb"/><stop offset="0.145" stop-color="#b9adad"/><stop offset="0.158" stop-color="#d08b8b"/><stop offset="0.183" stop-color="#f42a29"/><stop offset="0.208" stop-color="#ff0702"/><stop offset="0.246" stop-color="#ff0a00"/><stop offset="0.265" stop-color="#fa1613"/><stop offset="0.284" stop-color="#ed4242"/><stop offset="0.309" stop-color="#bea7a7"/><stop offset="0.328" stop-color="#bababa"/><stop offset="0.372" stop-color="#e0e6e0"/><stop offset="0.378" stop-color="#aaf1aa"/><stop offset="0.384" stop-color="#38fc38"/><stop offset="0.391" stop-color="#09fc0d"/><stop offset="0.403" stop-color="#00de1d"/><stop offset="0.441" stop-color="#008e6e"/><stop offset="0.466" stop-color="#008974"/><stop offset="0.498" stop-color="#00c832"/><stop offset="0.511" stop-color="#00ed10"/><stop offset="0.517" stop-color="#0bfc0e"/><stop offset="0.523" stop-color="#4ffa4f"/><stop offset="0.529" stop-color="#d4ecd4"/><stop offset="0.536" stop-color="#e2e2e2"/><stop offset="0.58" stop-color="#b4b4b4"/><stop offset="0.586" stop-color="#c0a5a5"/><stop offset="0.605" stop-color="#f42b2a"/><stop offset="0.618" stop-color="#ff0c00"/><stop offset="0.649" stop-color="#ff9900"/><stop offset="0.668" stop-color="#ffba00"/><stop offset="0.687" stop-color="#ffaa00"/><stop offset="0.706" stop-color="#ff7200"/><stop offset="0.731" stop-color="#ff0d00"/><stop offset="0.744" stop-color="#f62322"/><stop offset="0.763" stop-color="#d18b8b"/><stop offset="0.775" stop-color="#b4b3b3"/><stop offset="0.832" stop-color="#dfdfdf"/><stop offset="0.838" stop-color="#dce8dc"/><stop offset="0.851" stop-color="#17fe18"/><stop offset="0.857" stop-color="#00f509"/><stop offset="0.908" stop-color="#006798"/><stop offset="0.939" stop-color="#003fc0"/><stop offset="0.977" stop-color="#0054ab"/><stop offset="0.996" stop-color="#006c93"/></linearGradient><linearGradient id="h55" x1="0" y1="0" x2="0" y2="1"><stop offset="0" stop-color="#006798"/><stop offset="0.019" stop-color="#005aa5"/><stop offset="0.038" stop-color="#00817c"/><stop offset="0.069" stop-color="#00f00e"/><stop offset="0.076" stop-color="#0ffd12"/><stop offset="0.082" stop-color="#5cf95c"/><stop offset="0.088" stop-color="#d5ebd5"/><stop offset="0.095" stop-color="#e2e2e2"/><stop offset="0.132" stop-color="#b8b8b8"/><stop offset="0.151" stop-color="#c0a5a5"/><stop offset="0.183" stop-color="#ee3e3e"/><stop offset="0.208" stop-color="#f91816"/><stop offset="0.246" stop-color="#fb1411"/><stop offset="0.271" stop-color="#f23030"/><stop offset="0.296" stop-color="#d38787"/><stop offset="0.309" stop-color="#bcaaaa"/><stop offset="0.334" stop-color="#bdbdbd"/><stop offset="0.372" stop-color="#e3e5e3"/><stop offset="0.378" stop-color="#bcefbc"/><stop offset="0.384" stop-color="#4dfa4d"/><stop offset="0.391" stop-color="#10fd12"/><stop offset="0.397" stop-color="#00f40a"/><stop offset="0.435" stop-color="#00a753"/><stop offset="0.46" stop-color="#009864"/><stop offset="0.492" stop-color="#00c436"/><stop offset="0.511" stop-color="#00f509"/><stop offset="0.517" stop-color="#14fd16"/><stop offset="0.523" stop-color="#6bf76b"/><stop offset="0.529" stop-color="#d7ead7"/><stop offset="0.536" stop-color="#e1e1e1"/><stop offset="0.58" stop-color="#b5b5b5"/><stop offset="0.586" stop-color="#bda8a8"/><stop offset="0.599" stop-color="#e56262"/><stop offset="0.605" stop-color="#f13636"/><stop offset="0.618" stop-color="#fe0803"/><stop offset="0.63" stop-color="#ff2d00"/><stop offset="0.649" stop-color="#ff8200"/><stop offset="0.668" stop-color="#ffa200"/><stop offset="0.687" stop-color="#ff9300"/><stop offset="0.706" stop-color="#ff5e00"/><stop offset="0.731" stop-color="#ff0500"/><stop offset="0.744" stop-color="#f52827"/><stop offset="0.763" stop-color="#cf8d8d"/><stop offset="0.775" stop-color="#b4b3b3"/><stop offset="0.838" stop-color="#e1e5e1"/><stop offset="0.845" stop-color="#abf0ab"/><stop offset="0.851" stop-color="#33fd33"/><stop offset="0.857" stop-color="#06fb0a"/><stop offset="0.882" stop-color="#00b446"/><stop offset="0.92" stop-color="#0050af"/><stop offset="0.952" stop-color="#0030cf"/><stop offset="0.983" stop-color="#0045ba"/><stop offset="0.996" stop-color="#005ba4"/></linearGradient><linearGradient id="h56" x1="0" y1="0" x2="0" y2="1"><stop offset="0" stop-color="#00827c"/><stop offset="0.019" stop-color="#007c82"/><stop offset="0.044" stop-color="#00af4b"/><stop offset="0.069" stop-color="#00f906"/><stop offset="0.076" stop-color="#1bfe1b"/><stop offset="0.082" stop-color="#87f587"/><stop offset="0.088" stop-color="#dce8dc"/><stop offset="0.101" stop-color="#d7d7d7"/><stop offset="0.126" stop-color="#bababa"/><stop offset="0.145" stop-color="#baadad"/><stop offset="0.17" stop-color="#e16e6e"/><stop offset="0.195" stop-color="#f32d2d"/><stop offset="0.233" stop-color="#f91a18"/><stop offset="0.265" stop-color="#f23030"/><stop offset="0.296" stop-color="#cf8d8d"/><stop offset="0.309" stop-color="#bbabab"/><stop offset="0.334" stop-color="#bdbdbd"/><stop offset="0.372" stop-color="#e4e4e4"/><stop offset="0.378" stop-color="#c9edc9"/><stop offset="0.384" stop-color="#5cf95c"/><stop offset="0.391" stop-color="#15fd16"/><stop offset="0.397" stop-color="#00f807"/><stop offset="0.435" stop-color="#00af4b"/><stop offset="0.46" stop-color="#00a259"/><stop offset="0.492" stop-color="#00cc2e"/><stop offset="0.511" stop-color="#00fa05"/><stop offset="0.517" stop-color="#19fe1a"/><stop offset="0.529" stop-color="#d9ead9"/><stop offset="0.542" stop-color="#d9d9d9"/><stop offset="0.58" stop-color="#b5b5b5"/><stop offset="0.592" stop-color="#cc9393"/><stop offset="0.605" stop-color="#ee4141"/><stop offset="0.618" stop-color="#fc0e0a"/><stop offset="0.624" stop-color="#ff1000"/><stop offset="0.655" stop-color="#ff8200"/><stop offset="0.674" stop-color="#ff9300"/><stop offset="0.693" stop-color="#ff7900"/><stop offset="0.725" stop-color="#ff1400"/><stop offset="0.731" stop-color="#fe0804"/><stop offset="0.744" stop-color="#f42a2a"/><stop offset="0.763" stop-color="#ce8e8e"/><stop offset="0.775" stop-color="#b5b3b3"/><stop offset="0.838" stop-color="#e3e3e3"/><stop offset="0.845" stop-color="#d5ecd5"/><stop offset="0.851" stop-color="#6bf76b"/><stop offset="0.857" stop-color="#17fe18"/><stop offset="0.863" stop-color="#00f906"/><stop offset="0.92" stop-color="#00748b"/><stop offset="0.952" stop-color="#0057a8"/><stop offset="0.989" stop-color="#006f90"/><stop offset="0.996" stop-color="#007886"/></linearGradient><linearGradient id="h57" x1="0" y1="0" x2="0" y2="1"><stop offset="0" stop-color="#009b61"/><stop offset="0.025" stop-color="#00a258"/><stop offset="0.063" stop-color="#00f10c"/><stop offset="0.069" stop-color="#0cfc0f"/><stop offset="0.076" stop-color="#40fc40"/><stop offset="0.082" stop-color="#b2f0b2"/><stop offset="0.088" stop-color="#e2e5e2"/><stop offset="0.12" stop-color="#bbbbbb"/><stop offset="0.145" stop-color="#bcaaaa"/><stop offset="0.164" stop-color="#d97c7c"/><stop offset="0.195" stop-color="#f32e2e"/><stop offset="0.239" stop-color="#f71e1c"/><stop offset="0.265" stop-color="#f13333"/><stop offset="0.296" stop-color="#d08c8c"/><stop offset="0.309" stop-color="#bcaaaa"/><stop offset="0.334" stop-color="#bdbdbd"/><stop offset="0.372" stop-color="#e4e4e4"/><stop offset="0.378" stop-color="#cfedcf"/><stop offset="0.384" stop-color="#63f863"/><stop offset="0.391" stop-color="#17fe18"/><stop offset="0.397" stop-color="#00fa05"/><stop offset="0.435" stop-color="#00b248"/><stop offset="0.466" stop-color="#00a951"/><stop offset="0.498" stop-color="#00db1f"/><stop offset="0.511" stop-color="#00fa05"/><stop offset="0.517" stop-color="#1afe1a"/><stop offset="0.529" stop-color="#d8ead8"/><stop offset="0.536" stop-color="#e1e1e1"/><stop offset="0.58" stop-color="#b6b6b6"/><stop offset="0.592" stop-color="#c69c9c"/><stop offset="0.611" stop-color="#f42929"/><stop offset="0.624" stop-color="#ff0700"/><stop offset="0.655" stop-color="#ff7200"/><stop offset="0.674" stop-color="#ff8400"/><stop offset="0.693" stop-color="#ff6c00"/><stop offset="0.725" stop-color="#ff0f00"/><stop offset="0.731" stop-color="#fd0b07"/><stop offset="0.744" stop-color="#f32c2c"/><stop offset="0.769" stop-color="#bea7a7"/><stop offset="0.782" stop-color="#b7b7b7"/><stop offset="0.838" stop-color="#e1e1e1"/><stop offset="0.845" stop-color="#dce8dc"/><stop offset="0.851" stop-color="#a5f1a5"/><stop offset="0.857" stop-color="#48fb48"/><stop offset="0.863" stop-color="#12fd14"/><stop offset="0.87" stop-color="#00f807"/><stop offset="0.926" stop-color="#00926a"/><stop offset="0.964" stop-color="#00847a"/><stop offset="0.996" stop-color="#009b60"/></linearGradient><linearGradient id="h58" x1="0" y1="0" x2="0" y2="1"><stop offset="0" stop-color="#00aa50"/><stop offset="0.032" stop-color="#00bb3f"/><stop offset="0.063" stop-color="#00f905"/><stop offset="0.069" stop-color="#17fe18"/><stop offset="0.076" stop-color="#67f867"/><stop offset="0.082" stop-color="#d5ecd5"/><stop offset="0.088" stop-color="#e2e2e2"/><stop offset="0.12" stop-color="#bbbbbb"/><stop offset="0.145" stop-color="#bda9a9"/><stop offset="0.183" stop-color="#eb4a4a"/><stop offset="0.208" stop-color="#f52525"/><stop offset="0.246" stop-color="#f62322"/><stop offset="0.265" stop-color="#f03737"/><stop offset="0.296" stop-color="#ce8e8e"/><stop offset="0.315" stop-color="#b4b4b4"/><stop offset="0.372" stop-color="#e3e3e3"/><stop offset="0.378" stop-color="#d4ecd4"/><stop offset="0.384" stop-color="#6af76a"/><stop offset="0.391" stop-color="#18fe19"/><stop offset="0.397" stop-color="#02fa06"/><stop offset="0.435" stop-color="#00b446"/><stop offset="0.466" stop-color="#00ab4f"/><stop offset="0.498" stop-color="#00dd1e"/><stop offset="0.511" stop-color="#01fa06"/><stop offset="0.517" stop-color="#1afe1b"/><stop offset="0.529" stop-color="#d8ead8"/><stop offset="0.536" stop-color="#e1e1e1"/><stop offset="0.58" stop-color="#b7b7b7"/><stop offset="0.592" stop-color="#c1a3a3"/><stop offset="0.611" stop-color="#f13333"/><stop offset="0.624" stop-color="#fd0b06"/><stop offset="0.643" stop-color="#ff3700"/><stop offset="0.662" stop-color="#ff6d00"/><stop offset="0.681" stop-color="#ff7200"/><stop offset="0.706" stop-color="#ff3c00"/><stop offset="0.725" stop-color="#ff0b00"/><stop offset="0.737" stop-color="#f81e1c"/><stop offset="0.75" stop-color="#e95151"/><stop offset="0.769" stop-color="#bea7a7"/><stop offset="0.788" stop-color="#bababa"/><stop offset="0.845" stop-color="#e2e5e2"/><stop offset="0.851" stop-color="#d4ecd4"/><stop offset="0.863" stop-color="#33fd33"/><stop offset="0.87" stop-color="#11fd13"/><stop offset="0.876" stop-color="#00f906"/><stop offset="0.933" stop-color="#00a654"/><stop offset="0.971" stop-color="#009d5e"/><stop offset="0.996" stop-color="#00b347"/></linearGradient><linearGradient id="h59" x1="0" y1="0" x2="0" y2="1"><stop offset="0" stop-color="#00ad4d"/><stop offset="0.032" stop-color="#00bf3b"/><stop offset="0.063" stop-color="#04fb08"/><stop offset="0.069" stop-color="#1bff1c"/><stop offset="0.082" stop-color="#d8ead8"/><stop offset="0.088" stop-color="#e1e1e1"/><stop offset="0.12" stop-color="#bababa"/><stop offset="0.145" stop-color="#bda8a8"/><stop offset="0.183" stop-color="#eb4c4c"/><stop offset="0.208" stop-color="#f52827"/><stop offset="0.252" stop-color="#f42929"/><stop offset="0.277" stop-color="#e75959"/><stop offset="0.303" stop-color="#c1a3a3"/><stop offset="0.321" stop-color="#b7b7b7"/><stop offset="0.372" stop-color="#e3e3e3"/><stop offset="0.378" stop-color="#d5ebd5"/><stop offset="0.391" stop-color="#1afe1b"/><stop offset="0.397" stop-color="#04fb08"/><stop offset="0.441" stop-color="#00b149"/><stop offset="0.473" stop-color="#00b347"/><stop offset="0.511" stop-color="#02fa07"/><stop offset="0.517" stop-color="#1bfe1b"/><stop offset="0.529" stop-color="#d8ead8"/><stop offset="0.536" stop-color="#e1e1e1"/><stop offset="0.586" stop-color="#b5b3b3"/><stop offset="0.599" stop-color="#d18989"/><stop offset="0.618" stop-color="#f62422"/><stop offset="0.63" stop-color="#ff0900"/><stop offset="0.662" stop-color="#ff5d00"/><stop offset="0.681" stop-color="#ff6400"/><stop offset="0.706" stop-color="#ff3100"/><stop offset="0.725" stop-color="#ff0600"/><stop offset="0.744" stop-color="#f13434"/><stop offset="0.763" stop-color="#cb9393"/><stop offset="0.775" stop-color="#b5b3b3"/><stop offset="0.845" stop-color="#e2e2e2"/><stop offset="0.851" stop-color="#dce8dc"/><stop offset="0.857" stop-color="#b4efb4"/><stop offset="0.87" stop-color="#1eff1e"/><stop offset="0.882" stop-color="#00f707"/><stop offset="0.933" stop-color="#00b446"/><stop offset="0.977" stop-color="#00b04a"/><stop offset="0.996" stop-color="#00c03a"/></linearGradient><linearGradient id="h60" x1="0" y1="0" x2="0" y2="1"><stop offset="0" stop-color="#00ad4d"/><stop offset="0.032" stop-color="#00c03a"/><stop offset="0.063" stop-color="#07fb0b"/><stop offset="0.069" stop-color="#24fe24"/><stop offset="0.076" stop-color="#8ff48f"/><stop offset="0.082" stop-color="#dce8dc"/><stop offset="0.095" stop-color="#d7d7d7"/><stop offset="0.12" stop-color="#b9b9b9"/><stop offset="0.145" stop-color="#bea7a7"/><stop offset="0.183" stop-color="#ea4e4e"/><stop offset="0.208" stop-color="#f42a29"/><stop offset="0.252" stop-color="#f32c2c"/><stop offset="0.284" stop-color="#e17070"/><stop offset="0.309" stop-color="#baacac"/><stop offset="0.34" stop-color="#c2c2c2"/><stop offset="0.372" stop-color="#e3e3e3"/><stop offset="0.378" stop-color="#d6ebd6"/><stop offset="0.391" stop-color="#1cff1d"/><stop offset="0.397" stop-color="#06fb0a"/><stop offset="0.441" stop-color="#00b347"/><stop offset="0.473" stop-color="#00b545"/><stop offset="0.511" stop-color="#03fa07"/><stop offset="0.517" stop-color="#1bff1c"/><stop offset="0.529" stop-color="#d8ead8"/><stop offset="0.536" stop-color="#e2e2e2"/><stop offset="0.586" stop-color="#b4b4b4"/><stop offset="0.599" stop-color="#cc9292"/><stop offset="0.618" stop-color="#f42a2a"/><stop offset="0.63" stop-color="#fe0904"/><stop offset="0.668" stop-color="#ff5600"/><stop offset="0.687" stop-color="#ff5100"/><stop offset="0.725" stop-color="#fe0703"/><stop offset="0.744" stop-color="#f03838"/><stop offset="0.763" stop-color="#ca9494"/><stop offset="0.775" stop-color="#b5b3b3"/><stop offset="0.851" stop-color="#e0e6e0"/><stop offset="0.857" stop-color="#d2ecd2"/><stop offset="0.87" stop-color="#3bfc3b"/><stop offset="0.876" stop-color="#14fd15"/><stop offset="0.882" stop-color="#03fb08"/><stop offset="0.939" stop-color="#00b644"/><stop offset="0.983" stop-color="#00ba40"/><stop offset="0.996" stop-color="#00c634"/></linearGradient><linearGradient id="h61" x1="0" y1="0" x2="0" y2="1"><stop offset="0" stop-color="#00ad4d"/><stop offset="0.032" stop-color="#00c03a"/><stop offset="0.057" stop-color="#00f10c"/><stop offset="0.063" stop-color="#0afc0e"/><stop offset="0.069" stop-color="#34fd34"/><stop offset="0.076" stop-color="#a4f1a4"/><stop offset="0.082" stop-color="#e0e6e0"/><stop offset="0.113" stop-color="#bcbcbc"/><stop offset="0.139" stop-color="#b9aeae"/><stop offset="0.164" stop-color="#d97c7c"/><stop offset="0.202" stop-color="#f23232"/><stop offset="0.246" stop-color="#f42a2a"/><stop offset="0.271" stop-color="#e95252"/><stop offset="0.309" stop-color="#b9adad"/><stop offset="0.347" stop-color="#c8c8c8"/><stop offset="0.372" stop-color="#e3e3e3"/><stop offset="0.378" stop-color="#d7ebd7"/><stop offset="0.391" stop-color="#20ff20"/><stop offset="0.397" stop-color="#08fb0c"/><stop offset="0.441" stop-color="#00b545"/><stop offset="0.473" stop-color="#00b743"/><stop offset="0.511" stop-color="#04fb08"/><stop offset="0.517" stop-color="#1cff1c"/><stop offset="0.529" stop-color="#d8ead8"/><stop offset="0.536" stop-color="#e2e2e2"/><stop offset="0.586" stop-color="#b5b5b5"/><stop offset="0.599" stop-color="#c79a9a"/><stop offset="0.618" stop-color="#f23232"/><stop offset="0.63" stop-color="#fc0f0b"/><stop offset="0.637" stop-color="#ff0a00"/><stop offset="0.668" stop-color="#ff4900"/><stop offset="0.687" stop-color="#ff4600"/><stop offset="0.725" stop-color="#fe0a05"/><stop offset="0.744" stop-color="#ef3b3b"/><stop offset="0.763" stop-color="#ca9595"/><stop offset="0.775" stop-color="#b5b3b3"/><stop offset="0.851" stop-color="#e4e4e4"/><stop offset="0.857" stop-color="#d7ead7"/><stop offset="0.87" stop-color="#4ffa4f"/><stop offset="0.876" stop-color="#19fe1a"/><stop offset="0.889" stop-color="#00f509"/><stop offset="0.939" stop-color="#00b842"/><stop offset="0.983" stop-color="#00bd3d"/><stop offset="0.996" stop-color="#00c931"/></linearGradient><linearGradient id="h62" x1="0" y1="0" x2="0" y2="1"><stop offset="0" stop-color="#00ac4e"/><stop offset="0.032" stop-color="#00c03a"/><stop offset="0.057" stop-color="#00f30b"/><stop offset="0.063" stop-color="#0efc10"/><stop offset="0.069" stop-color="#44fb44"/><stop offset="0.076" stop-color="#b9efb9"/><stop offset="0.082" stop-color="#e4e4e4"/><stop offset="0.113" stop-color="#bbbbbb"/><stop offset="0.139" stop-color="#b9adad"/><stop offset="0.17" stop-color="#e16f6f"/><stop offset="0.208" stop-color="#f32f2f"/><stop offset="0.246" stop-color="#f32d2d"/><stop offset="0.277" stop-color="#e46565"/><stop offset="0.303" stop-color="#bfa6a6"/><stop offset="0.328" stop-color="#bababa"/><stop offset="0.372" stop-color="#e2e2e2"/><stop offset="0.378" stop-color="#d8ead8"/><stop offset="0.391" stop-color="#28fe28"/><stop offset="0.397" stop-color="#0afc0e"/><stop offset="0.41" stop-color="#00e616"/><stop offset="0.447" stop-color="#00b446"/><stop offset="0.479" stop-color="#00c03a"/><stop offset="0.511" stop-color="#05fb09"/><stop offset="0.517" stop-color="#1cff1d"/><stop offset="0.529" stop-color="#d8ead8"/><stop offset="0.536" stop-color="#e2e2e2"/><stop offset="0.586" stop-color="#b6b6b6"/><stop offset="0.599" stop-color="#c2a1a1"/><stop offset="0.618" stop-color="#ef3d3d"/><stop offset="0.637" stop-color="#fe0702"/><stop offset="0.674" stop-color="#ff4100"/><stop offset="0.706" stop-color="#ff2100"/><stop offset="0.718" stop-color="#ff0a00"/><stop offset="0.737" stop-color="#f52726"/><stop offset="0.769" stop-color="#bda8a8"/><stop offset="0.794" stop-color="#bcbcbc"/><stop offset="0.851" stop-color="#e3e3e3"/><stop offset="0.857" stop-color="#dae9da"/><stop offset="0.863" stop-color="#aef0ae"/><stop offset="0.876" stop-color="#1eff1e"/><stop offset="0.889" stop-color="#00f807"/><stop offset="0.939" stop-color="#00bb3f"/><stop offset="0.983" stop-color="#00bf3b"/><stop offset="0.996" stop-color="#00cc2e"/></linearGradient><linearGradient id="h63" x1="0" y1="0" x2="0" y2="1"><stop offset="0" stop-color="#00ab4f"/><stop offset="0.032" stop-color="#00c03a"/><stop offset="0.057" stop-color="#00f509"/><stop offset="0.063" stop-color="#11fd13"/><stop offset="0.069" stop-color="#56f956"/><stop offset="0.076" stop-color="#d0ecd0"/><stop offset="0.082" stop-color="#e2e2e2"/><stop offset="0.113" stop-color="#bababa"/><stop offset="0.139" stop-color="#baacac"/><stop offset="0.176" stop-color="#e56262"/><stop offset="0.214" stop-color="#f32e2e"/><stop offset="0.246" stop-color="#f23131"/><stop offset="0.277" stop-color="#e36969"/><stop offset="0.303" stop-color="#bea7a7"/><stop offset="0.328" stop-color="#bababa"/><stop offset="0.372" stop-color="#e2e2e2"/><stop offset="0.378" stop-color="#d9ead9"/><stop offset="0.384" stop-color="#8df48d"/><stop offset="0.391" stop-color="#2ffd2f"/><stop offset="0.397" stop-color="#0dfc0f"/><stop offset="0.403" stop-color="#00f509"/><stop offset="0.441" stop-color="#00ba40"/><stop offset="0.473" stop-color="#00bc3e"/><stop offset="0.511" stop-color="#06fb0a"/><stop offset="0.517" stop-color="#1dff1d"/><stop offset="0.529" stop-color="#d7ead7"/><stop offset="0.536" stop-color="#e2e2e2"/><stop offset="0.586" stop-color="#b6b6b6"/><stop offset="0.599" stop-color="#c0a4a4"/><stop offset="0.618" stop-color="#ec4747"/><stop offset="0.63" stop-color="#f81b18"/><stop offset="0.643" stop-color="#ff0b00"/><stop offset="0.674" stop-color="#ff3600"/><stop offset="0.712" stop-color="#ff1300"/><stop offset="0.718" stop-color="#ff0600"/><stop offset="0.737" stop-color="#f42929"/><stop offset="0.763" stop-color="#c99797"/><stop offset="0.782" stop-color="#b6b6b6"/><stop offset="0.857" stop-color="#dee7de"/><stop offset="0.863" stop-color="#c4eec4"/><stop offset="0.876" stop-color="#30fd30"/><stop offset="0.889" stop-color="#02fa06"/><stop offset="0.939" stop-color="#00be3c"/><stop offset="0.983" stop-color="#00c238"/><stop offset="0.996" stop-color="#00cf2b"/></linearGradient><linearGradient id="h64" x1="0" y1="0" x2="0" y2="1"><stop offset="0" stop-color="#00ab4f"/><stop offset="0.032" stop-color="#00c139"/><stop offset="0.057" stop-color="#00f708"/><stop offset="0.063" stop-color="#14fd16"/><stop offset="0.069" stop-color="#66f866"/><stop offset="0.076" stop-color="#d7ebd7"/><stop offset="0.082" stop-color="#e1e1e1"/><stop offset="0.107" stop-color="#bdbdbd"/><stop offset="0.139" stop-color="#baacac"/><stop offset="0.189" stop-color="#ea4d4d"/><stop offset="0.227" stop-color="#f32d2d"/><stop offset="0.258" stop-color="#ed4545"/><stop offset="0.29" stop-color="#d08c8c"/><stop offset="0.315" stop-color="#b5b5b5"/><stop offset="0.372" stop-color="#e2e2e2"/><stop offset="0.378" stop-color="#dae9da"/><stop offset="0.384" stop-color="#96f396"/><stop offset="0.391" stop-color="#38fc38"/><stop offset="0.397" stop-color="#0ffc11"/><stop offset="0.403" stop-color="#00f608"/><stop offset="0.441" stop-color="#00bd3d"/><stop offset="0.473" stop-color="#00be3c"/><stop offset="0.511" stop-color="#07fb0b"/><stop offset="0.517" stop-color="#1eff1e"/><stop offset="0.529" stop-color="#d7ead7"/><stop offset="0.536" stop-color="#e2e2e2"/><stop offset="0.586" stop-color="#b7b7b7"/><stop offset="0.599" stop-color="#bea7a7"/><stop offset="0.624" stop-color="#f23232"/><stop offset="0.643" stop-color="#ff0601"/><stop offset="0.674" stop-color="#ff2c00"/><stop offset="0.706" stop-color="#ff1900"/><stop offset="0.718" stop-color="#ff0602"/><stop offset="0.737" stop-color="#f42b2a"/><stop offset="0.763" stop-color="#c99797"/><stop offset="0.782" stop-color="#b6b6b6"/><stop offset="0.857" stop-color="#e1e5e1"/><stop offset="0.863" stop-color="#d5ecd5"/><stop offset="0.876" stop-color="#44fb44"/><stop offset="0.882" stop-color="#16fe18"/><stop offset="0.895" stop-color="#00f40a"/><stop offset="0.945" stop-color="#00bd3d"/><stop offset="0.989" stop-color="#00cb2f"/><stop offset="0.996" stop-color="#00d228"/></linearGradient><linearGradient id="h65" x1="0" y1="0" x2="0" y2="1"><stop offset="0" stop-color="#00aa50"/><stop offset="0.032" stop-color="#00c03a"/><stop offset="0.057" stop-color="#00f708"/><stop offset="0.063" stop-color="#14fd16"/><stop offset="0.069" stop-color="#68f868"/><stop offset="0.076" stop-color="#d7ead7"/><stop offset="0.082" stop-color="#e1e1e1"/><stop offset="0.107" stop-color="#bcbcbc"/><stop offset="0.139" stop-color="#baacac"/><stop offset="0.189" stop-color="#ea4e4e"/><stop offset="0.227" stop-color="#f32e2e"/><stop offset="0.258" stop-color="#ec4545"/><stop offset="0.29" stop-color="#d08b8b"/><stop offset="0.315" stop-color="#b5b5b5"/><stop offset="0.372" stop-color="#e1e1e1"/><stop offset="0.378" stop-color="#dde8dd"/><stop offset="0.384" stop-color="#a6f1a6"/><stop offset="0.391" stop-color="#47fb47"/><stop offset="0.397" stop-color="#12fd14"/><stop offset="0.403" stop-color="#00f906"/><stop offset="0.441" stop-color="#00be3c"/><stop offset="0.473" stop-color="#00bf3b"/><stop offset="0.511" stop-color="#08fb0b"/><stop offset="0.517" stop-color="#20ff20"/><stop offset="0.529" stop-color="#d8ead8"/><stop offset="0.536" stop-color="#e2e2e2"/><stop offset="0.586" stop-color="#b7b7b7"/><stop offset="0.599" stop-color="#bda8a8"/><stop offset="0.618" stop-color="#e85858"/><stop offset="0.63" stop-color="#f62423"/><stop offset="0.643" stop-color="#fe0a06"/><stop offset="0.681" stop-color="#ff2900"/><stop offset="0.718" stop-color="#fe0803"/><stop offset="0.737" stop-color="#f42b2b"/><stop offset="0.769" stop-color="#bea7a7"/><stop offset="0.8" stop-color="#bebebe"/><stop offset="0.857" stop-color="#e4e4e4"/><stop offset="0.863" stop-color="#d8ead8"/><stop offset="0.87" stop-color="#a1f2a1"/><stop offset="0.882" stop-color="#1bff1c"/><stop offset="0.895" stop-color="#00f708"/><stop offset="0.945" stop-color="#00c03a"/><stop offset="0.989" stop-color="#00cd2d"/><stop offset="0.996" stop-color="#00d525"/></linearGradient><linearGradient id="h66" x1="0" y1="0" x2="0" y2="1"><stop offset="0" stop-color="#00a951"/><stop offset="0.032" stop-color="#00c03a"/><stop offset="0.057" stop-color="#00f708"/><stop offset="0.063" stop-color="#15fd16"/><stop offset="0.069" stop-color="#6af76a"/><stop offset="0.076" stop-color="#d8ead8"/><stop offset="0.082" stop-color="#e0e0e0"/><stop offset="0.107" stop-color="#bcbcbc"/><stop offset="0.139" stop-color="#baacac"/><stop offset="0.189" stop-color="#ea4f4f"/><stop offset="0.227" stop-color="#f22f2f"/><stop offset="0.258" stop-color="#ec4646"/><stop offset="0.29" stop-color="#d18a8a"/><stop offset="0.315" stop-color="#b4b4b4"/><stop offset="0.366" stop-color="#d9d9d9"/><stop offset="0.378" stop-color="#dfe6df"/><stop offset="0.384" stop-color="#b6efb6"/><stop offset="0.391" stop-color="#55f955"/><stop offset="0.397" stop-color="#16fe17"/><stop offset="0.403" stop-color="#01fa06"/><stop offset="0.441" stop-color="#00c03a"/><stop offset="0.473" stop-color="#00c03a"/><stop offset="0.511" stop-color="#09fb0c"/><stop offset="0.517" stop-color="#22ff22"/><stop offset="0.529" stop-color="#d8ead8"/><stop offset="0.536" stop-color="#e2e2e2"/><stop offset="0.586" stop-color="#b7b7b7"/><stop offset="0.599" stop-color="#bcaaaa"/><stop offset="0.611" stop-color="#d97c7c"/><stop offset="0.63" stop-color="#f52827"/><stop offset="0.649" stop-color="#ff0700"/><stop offset="0.681" stop-color="#ff2500"/><stop offset="0.718" stop-color="#fe0904"/><stop offset="0.737" stop-color="#f42b2b"/><stop offset="0.769" stop-color="#bea7a7"/><stop offset="0.794" stop-color="#bbbbbb"/><stop offset="0.857" stop-color="#e2e2e2"/><stop offset="0.863" stop-color="#dce8dc"/><stop offset="0.87" stop-color="#b6efb6"/><stop offset="0.882" stop-color="#25fe25"/><stop offset="0.895" stop-color="#00fa05"/><stop offset="0.945" stop-color="#00c238"/><stop offset="0.983" stop-color="#00ca30"/><stop offset="0.996" stop-color="#00d723"/></linearGradient><linearGradient id="h67" x1="0" y1="0" x2="0" y2="1"><stop offset="0" stop-color="#00a952"/><stop offset="0.032" stop-color="#00bf3b"/><stop offset="0.057" stop-color="#00f708"/><stop offset="0.063" stop-color="#15fd16"/><stop offset="0.069" stop-color="#6cf76c"/><stop offset="0.076" stop-color="#d8ead8"/><stop offset="0.082" stop-color="#e0e0e0"/><stop offset="0.107" stop-color="#bcbcbc"/><stop offset="0.139" stop-color="#baacac"/><stop offset="0.189" stop-color="#ea4f4f"/><stop offset="0.227" stop-color="#f23030"/><stop offset="0.258" stop-color="#ec4646"/><stop offset="0.29" stop-color="#d28989"/><stop offset="0.315" stop-color="#b4b4b4"/><stop offset="0.366" stop-color="#d8d8d8"/><stop offset="0.378" stop-color="#e2e5e2"/><stop offset="0.384" stop-color="#c6eec6"/><stop offset="0.391" stop-color="#64f864"/><stop offset="0.397" stop-color="#19fe1a"/><stop offset="0.403" stop-color="#04fb08"/><stop offset="0.447" stop-color="#00bd3d"/><stop offset="0.479" stop-color="#00c733"/><stop offset="0.504" stop-color="#00f20c"/><stop offset="0.511" stop-color="#09fc0d"/><stop offset="0.517" stop-color="#25fe25"/><stop offset="0.529" stop-color="#d9ead9"/><stop offset="0.542" stop-color="#dbdbdb"/><stop offset="0.592" stop-color="#b5b5b5"/><stop offset="0.605" stop-color="#c59e9e"/><stop offset="0.624" stop-color="#ec4646"/><stop offset="0.637" stop-color="#f81e1c"/><stop offset="0.649" stop-color="#fe0702"/><stop offset="0.681" stop-color="#ff2200"/><stop offset="0.718" stop-color="#fd0a06"/><stop offset="0.737" stop-color="#f32c2b"/><stop offset="0.769" stop-color="#bfa6a6"/><stop offset="0.794" stop-color="#bbbbbb"/><stop offset="0.863" stop-color="#dfe7df"/><stop offset="0.87" stop-color="#cbedcb"/><stop offset="0.882" stop-color="#38fc38"/><stop offset="0.889" stop-color="#14fd16"/><stop offset="0.901" stop-color="#00f30b"/><stop offset="0.952" stop-color="#00c337"/><stop offset="0.996" stop-color="#00da21"/></linearGradient><linearGradient id="h68" x1="0" y1="0" x2="0" y2="1"><stop offset="0" stop-color="#00a852"/><stop offset="0.032" stop-color="#00bf3b"/><stop offset="0.057" stop-color="#00f708"/><stop offset="0.063" stop-color="#15fe17"/><stop offset="0.069" stop-color="#6ff76f"/><stop offset="0.076" stop-color="#d9ead9"/><stop offset="0.082" stop-color="#e0e0e0"/><stop offset="0.107" stop-color="#bcbcbc"/><stop offset="0.139" stop-color="#bbacac"/><stop offset="0.189" stop-color="#ea5050"/><stop offset="0.227" stop-color="#f23232"/><stop offset="0.258" stop-color="#ec4747"/><stop offset="0.29" stop-color="#d28888"/><stop offset="0.315" stop-color="#b5b3b3"/><stop offset="0.366" stop-color="#d7d7d7"/><stop offset="0.378" stop-color="#e4e4e4"/><stop offset="0.384" stop-color="#d4ecd4"/><stop offset="0.397" stop-color="#1cff1d"/><stop offset="0.403" stop-color="#07fb0b"/><stop offset="0.447" stop-color="#00be3c"/><stop offset="0.479" stop-color="#00c832"/><stop offset="0.504" stop-color="#00f30b"/><stop offset="0.511" stop-color="#0afc0e"/><stop offset="0.517" stop-color="#28fe28"/><stop offset="0.523" stop-color="#89f489"/><stop offset="0.529" stop-color="#d9ead9"/><stop offset="0.542" stop-color="#dbdbdb"/><stop offset="0.592" stop-color="#b5b5b5"/><stop offset="0.605" stop-color="#c2a2a2"/><stop offset="0.624" stop-color="#eb4d4d"/><stop offset="0.637" stop-color="#f62220"/><stop offset="0.655" stop-color="#ff0900"/><stop offset="0.687" stop-color="#ff1d00"/><stop offset="0.718" stop-color="#fd0b07"/><stop offset="0.737" stop-color="#f32c2c"/><stop offset="0.769" stop-color="#bfa6a6"/><stop offset="0.794" stop-color="#bababa"/><stop offset="0.863" stop-color="#e2e5e2"/><stop offset="0.87" stop-color="#d6ebd6"/><stop offset="0.882" stop-color="#4bfa4b"/><stop offset="0.889" stop-color="#18fe19"/><stop offset="0.901" stop-color="#00f609"/><stop offset="0.952" stop-color="#00c535"/><stop offset="0.996" stop-color="#00dc1f"/></linearGradient><linearGradient id="h69" x1="0" y1="0" x2="0" y2="1"><stop offset="0" stop-color="#00a753"/><stop offset="0.032" stop-color="#00be3c"/><stop offset="0.057" stop-color="#00f708"/><stop offset="0.063" stop-color="#16fe17"/><stop offset="0.076" stop-color="#d9e9d9"/><stop offset="0.088" stop-color="#d6d6d6"/><stop offset="0.107" stop-color="#bcbcbc"/><stop offset="0.139" stop-color="#bbacac"/><stop offset="0.189" stop-color="#e95151"/><stop offset="0.227" stop-color="#f13333"/><stop offset="0.258" stop-color="#ec4848"/><stop offset="0.296" stop-color="#c99797"/><stop offset="0.321" stop-color="#b6b6b6"/><stop offset="0.378" stop-color="#e3e3e3"/><stop offset="0.384" stop-color="#d7ead7"/><stop offset="0.397" stop-color="#25fe25"/><stop offset="0.403" stop-color="#0afc0e"/><stop offset="0.416" stop-color="#00e715"/><stop offset="0.454" stop-color="#00bd3d"/><stop offset="0.485" stop-color="#00d228"/><stop offset="0.504" stop-color="#00f40b"/><stop offset="0.511" stop-color="#0bfc0e"/><stop offset="0.517" stop-color="#2bfe2b"/><stop offset="0.523" stop-color="#8cf48c"/><stop offset="0.529" stop-color="#d9e9d9"/><stop offset="0.542" stop-color="#dbdbdb"/><stop offset="0.586" stop-color="#b8b8b8"/><stop offset="0.605" stop-color="#c1a4a4"/><stop offset="0.624" stop-color="#e95353"/><stop offset="0.637" stop-color="#f52524"/><stop offset="0.655" stop-color="#ff0601"/><stop offset="0.687" stop-color="#ff1a00"/><stop offset="0.712" stop-color="#ff0500"/><stop offset="0.737" stop-color="#f32d2d"/><stop offset="0.769" stop-color="#c0a5a5"/><stop offset="0.794" stop-color="#bababa"/><stop offset="0.863" stop-color="#e3e3e3"/><stop offset="0.87" stop-color="#d9e9d9"/><stop offset="0.876" stop-color="#a8f1a8"/><stop offset="0.889" stop-color="#1dff1d"/><stop offset="0.901" stop-color="#00f806"/><stop offset="0.952" stop-color="#00c733"/><stop offset="0.996" stop-color="#00df1c"/></linearGradient><linearGradient id="h70" x1="0" y1="0" x2="0" y2="1"><stop offset="0" stop-color="#00a654"/><stop offset="0.032" stop-color="#00be3c"/><stop offset="0.057" stop-color="#00f708"/><stop offset="0.063" stop-color="#16fe17"/><stop offset="0.076" stop-color="#dae9da"/><stop offset="0.088" stop-color="#d6d6d6"/><stop offset="0.107" stop-color="#bcbcbc"/><stop offset="0.139" stop-color="#bbacac"/><stop offset="0.189" stop-color="#e95252"/><stop offset="0.227" stop-color="#f13434"/><stop offset="0.258" stop-color="#ec4848"/><stop offset="0.296" stop-color="#ca9595"/><stop offset="0.321" stop-color="#b5b5b5"/><stop offset="0.372" stop-color="#dbdbdb"/><stop offset="0.384" stop-color="#dae9da"/><stop offset="0.391" stop-color="#92f392"/><stop offset="0.397" stop-color="#33fd33"/><stop offset="0.403" stop-color="#0efc10"/><stop offset="0.41" stop-color="#00f609"/><stop offset="0.447" stop-color="#00c139"/><stop offset="0.479" stop-color="#00ca30"/><stop offset="0.504" stop-color="#00f40a"/><stop offset="0.511" stop-color="#0cfc0f"/><stop offset="0.517" stop-color="#2efd2e"/><stop offset="0.523" stop-color="#8ef48e"/><stop offset="0.529" stop-color="#dae9da"/><stop offset="0.542" stop-color="#dbdbdb"/><stop offset="0.586" stop-color="#b8b8b8"/><stop offset="0.605" stop-color="#c0a5a5"/><stop offset="0.63" stop-color="#ee3e3e"/><stop offset="0.649" stop-color="#fb120f"/><stop offset="0.668" stop-color="#ff0f00"/><stop offset="0.7" stop-color="#ff1100"/><stop offset="0.712" stop-color="#ff0602"/><stop offset="0.737" stop-color="#f32d2d"/><stop offset="0.769" stop-color="#c0a5a5"/><stop offset="0.788" stop-color="#b7b7b7"/><stop offset="0.863" stop-color="#e2e2e2"/><stop offset="0.87" stop-color="#dce8dc"/><stop offset="0.876" stop-color="#bcefbc"/><stop offset="0.889" stop-color="#2cfe2c"/><stop offset="0.901" stop-color="#02fa07"/><stop offset="0.952" stop-color="#00ca30"/><stop offset="0.996" stop-color="#00e11a"/></linearGradient><linearGradient id="h71" x1="0" y1="0" x2="0" y2="1"><stop offset="0" stop-color="#00a655"/><stop offset="0.032" stop-color="#00bd3d"/><stop offset="0.057" stop-color="#00f708"/><stop offset="0.063" stop-color="#16fe17"/><stop offset="0.076" stop-color="#dae9da"/><stop offset="0.088" stop-color="#d5d5d5"/><stop offset="0.107" stop-color="#bcbcbc"/><stop offset="0.139" stop-color="#bbacac"/><stop offset="0.189" stop-color="#e95353"/><stop offset="0.227" stop-color="#f13535"/><stop offset="0.258" stop-color="#ec4949"/><stop offset="0.296" stop-color="#ca9595"/><stop offset="0.321" stop-color="#b5b5b5"/><stop offset="0.372" stop-color="#dadada"/><stop offset="0.384" stop-color="#dce8dc"/><stop offset="0.391" stop-color="#9ef29e"/><stop offset="0.397" stop-color="#3efc3e"/><stop offset="0.403" stop-color="#10fd12"/><stop offset="0.41" stop-color="#00f707"/><stop offset="0.447" stop-color="#00c238"/><stop offset="0.479" stop-color="#00cb2f"/><stop offset="0.504" stop-color="#00f50a"/><stop offset="0.511" stop-color="#0cfc0f"/><stop offset="0.517" stop-color="#30fd30"/><stop offset="0.523" stop-color="#90f390"/><stop offset="0.529" stop-color="#dae9da"/><stop offset="0.542" stop-color="#dbdbdb"/><stop offset="0.586" stop-color="#b8b8b8"/><stop offset="0.605" stop-color="#bfa6a6"/><stop offset="0.637" stop-color="#f32c2c"/><stop offset="0.662" stop-color="#ff0500"/><stop offset="0.693" stop-color="#ff1200"/><stop offset="0.712" stop-color="#fe0803"/><stop offset="0.737" stop-color="#f32e2e"/><stop offset="0.769" stop-color="#c0a4a4"/><stop offset="0.788" stop-color="#b7b7b7"/><stop offset="0.87" stop-color="#dfe7df"/><stop offset="0.876" stop-color="#ccedcc"/><stop offset="0.889" stop-color="#3afc3a"/><stop offset="0.895" stop-color="#14fd16"/><stop offset="0.908" stop-color="#00f40a"/><stop offset="0.952" stop-color="#00cb2f"/><stop offset="0.996" stop-color="#00e319"/></linearGradient><linearGradient id="h72" x1="0" y1="0" x2="0" y2="1"><stop offset="0" stop-color="#00a655"/><stop offset="0.032" stop-color="#00bd3d"/><stop offset="0.057" stop-color="#00f708"/><stop offset="0.063" stop-color="#16fe17"/><stop offset="0.076" stop-color="#dae9da"/><stop offset="0.088" stop-color="#d5d5d5"/><stop offset="0.107" stop-color="#bcbcbc"/><stop offset="0.139" stop-color="#bbacac"/><stop offset="0.189" stop-color="#e95353"/><stop offset="0.227" stop-color="#f13535"/><stop offset="0.258" stop-color="#ec4949"/><stop offset="0.296" stop-color="#ca9595"/><stop offset="0.321" stop-color="#b5b5b5"/><stop offset="0.372" stop-color="#dadada"/><stop offset="0.384" stop-color="#dce8dc"/><stop offset="0.391" stop-color="#9ef29e"/><stop offset="0.397" stop-color="#3efc3e"/><stop offset="0.403" stop-color="#10fd12"/><stop offset="0.41" stop-color="#00f707"/><stop offset="0.447" stop-color="#00c238"/><stop offset="0.479" stop-color="#00cb2f"/><stop offset="0.504" stop-color="#00f50a"/><stop offset="0.511" stop-color="#0cfc0f"/><stop offset="0.517" stop-color="#30fd30"/><stop offset="0.523" stop-color="#90f390"/><stop offset="0.529" stop-color="#dae9da"/><stop offset="0.542" stop-color="#dbdbdb"/><stop offset="0.586" stop-color="#b8b8b8"/><stop offset="0.605" stop-color="#bfa6a6"/><stop offset="0.637" stop-color="#f32c2c"/><stop offset="0.662" stop-color="#ff0500"/><stop offset="0.693" stop-color="#ff1200"/><stop offset="0.712" stop-color="#fe0803"/><stop offset="0.737" stop-color="#f32e2e"/><stop offset="0.769" stop-color="#c0a4a4"/><stop offset="0.788" stop-color="#b7b7b7"/><stop offset="0.87" stop-color="#dfe7df"/><stop offset="0.876" stop-color="#ccedcc"/><stop offset="0.889" stop-color="#3afc3a"/><stop offset="0.895" stop-color="#14fd16"/><stop offset="0.908" stop-color="#00f40a"/><stop offset="0.952" stop-color="#00cb2f"/><stop offset="0.996" stop-color="#00e319"/></linearGradient><linearGradient id="h73" x1="0" y1="0" x2="0" y2="1"><stop offset="0" stop-color="#00a655"/><stop offset="0.032" stop-color="#00bd3d"/><stop offset="0.057" stop-color="#00f708"/><stop offset="0.063" stop-color="#16fe17"/><stop offset="0.076" stop-color="#dae9da"/><stop offset="0.088" stop-color="#d5d5d5"/><stop offset="0.107" stop-color="#bcbcbc"/><stop offset="0.139" stop-color="#bbacac"/><stop offset="0.189" stop-color="#e95353"/><stop offset="0.227" stop-color="#f13535"/><stop offset="0.258" stop-color="#ec4949"/><stop offset="0.296" stop-color="#ca9595"/><stop offset="0.321" stop-color="#b5b5b5"/><stop offset="0.372" stop-color="#dadada"/><stop offset="0.384" stop-color="#dce8dc"/><stop offset="0.391" stop-color="#9ef29e"/><stop offset="0.397" stop-color="#3efc3e"/><stop offset="0.403" stop-color="#10fd12"/><stop offset="0.41" stop-color="#00f707"/><stop offset="0.447" stop-color="#00c238"/><stop offset="0.479" stop-color="#00cb2f"/><stop offset="0.504" stop-color="#00f50a"/><stop offset="0.511" stop-color="#0cfc0f"/><stop offset="0.517" stop-color="#30fd30"/><stop offset="0.523" stop-color="#90f390"/><stop offset="0.529" stop-color="#dae9da"/><stop offset="0.542" stop-color="#dbdbdb"/><stop offset="0.586" stop-color="#b8b8b8"/><stop offset="0.605" stop-color="#bfa6a6"/><stop offset="0.637" stop-color="#f32c2c"/><stop offset="0.662" stop-color="#ff0500"/><stop offset="0.693" stop-color="#ff1200"/><stop offset="0.712" stop-color="#fe0803"/><stop offset="0.737" stop-color="#f32e2e"/><stop offset="0.769" stop-color="#c0a4a4"/><stop offset="0.788" stop-color="#b7b7b7"/><stop offset="0.87" stop-color="#dfe7df"/><stop offset="0.876" stop-color="#ccedcc"/><stop offset="0.889" stop-color="#3afc3a"/><stop offset="0.895" stop-color="#14fd16"/><stop offset="0.908" stop-color="#00f40a"/><stop offset="0.952" stop-color="#00cb2f"/><stop offset="0.996" stop-color="#00e319"/></linearGradient></defs><g id="hm" filter="url(#hb)"><rect x="-24" y="0" width="13" height="476" fill="url(#h0)"/><rect x="-12" y="0" width="13" height="476" fill="url(#h1)"/><rect x="0" y="0" width="13" height="476" fill="url(#h2)"/><rect x="12" y="0" width="13" height="476" fill="url(#h3)"/><rect x="24" y="0" width="13" height="476" fill="url(#h4)"/><rect x="36" y="0" width="13" height="476" fill="url(#h5)"/><rect x="48" y="0" width="13" height="476" fill="url(#h6)"/><rect x="60" y="0" width="13" height="476" fill="url(#h7)"/><rect x="72" y="0" width="13" height="476" fill="url(#h8)"/><rect x="84" y="0" width="13" height="476" fill="url(#h9)"/><rect x="96" y="0" width="13" height="476" fill="url(#h10)"/><rect x="108" y="0" width="13" height="476" fill="url(#h11)"/><rect x="120" y="0" width="13" height="476" fill="url(#h12)"/><rect x="132" y="0" width="13" height="476" fill="url(#h13)"/><rect x="144" y="0" width="13" height="476" fill="url(#h14)"/><rect x="156" y="0" width="13" height="476" fill="url(#h15)"/><rect x="168" y="0" width="13" height="476" fill="url(#h16)"/><rect x="180" y="0" width="13" height="476" fill="url(#h17)"/><rect x="192" y="0" width="13" height="476" fill="url(#h18)"/><rect x="204" y="0" width="13" height="476" fill="url(#h19)"/><rect x="216" y="0" width="13" height="476" fill="url(#h20)"/><rect x="228" y="0" width="13" height="476" fill="url(#h21)"/><rect x="240" y="0" width="13" height="476" fill="url(#h22)"/><rect x="252" y="0" width="13" height="476" fill="url(#h23)"/><rect x="264" y="0" width="13" height="476" fill="url(#h24)"/><rect x="276" y="0" width="13" height="476" fill="url(#h25)"/><rect x="288" y="0" width="13" height="476" fill="url(#h26)"/><rect x="300" y="0" width="13" height="476" fill="url(#h27)"/><rect x="312" y="0" width="13" height="476" fill="url(#h28)"/><rect x="324" y="0" width="13" height="476" fill="url(#h29)"/><rect x="336" y="0" width="13" height="476" fill="url(#h30)"/><rect x="348" y="0" width="13" height="476" fill="url(#h31)"/><rect x="360" y="0" width="13" height="476" fill="url(#h32)"/><rect x="372" y="0" width="13" height="476" fill="url(#h33)"/><rect x="384" y="0" width="13" height="476" fill="url(#h34)"/><rect x="396" y="0" width="13" height="476" fill="url(#h35)"/><rect x="408" y="0" width="13" height="476" fill="url(#h36)"/><rect x="420" y="0" width="13" height="476" fill="url(#h37)"/><rect x="432" y="0" width="13" height="476" fill="url(#h38)"/><rect x="444" y="0" width="13" height="476" fill="url(#h39)"/><rect x="456" y="0" width="13" height="476" fill="url(#h40)"/><rect x="468" y="0" width="13" height="476" fill="url(#h41)"/><rect x="480" y="0" width="13" height="476" fill="url(#h42)"/><rect x="492" y="0" width="13" height="476" fill="url(#h43)"/><rect x="504" y="0" width="13" height="476" fill="url(#h44)"/><rect x="516" y="0" width="13" height="476" fill="url(#h45)"/><rect x="528" y="0" width="13" height="476" fill="url(#h46)"/><rect x="540" y="0" width="13" height="476" fill="url(#h47)"/><rect x="552" y="0" width="13" height="476" fill="url(#h48)"/><rect x="564" y="0" width="13" height="476" fill="url(#h49)"/><rect x="576" y="0" width="13" height="476" fill="url(#h50)"/><rect x="588" y="0" width="13" height="476" fill="url(#h51)"/><rect x="600" y="0" width="13" height="476" fill="url(#h52)"/><rect x="612" y="0" width="13" height="476" fill="url(#h53)"/><rect x="624" y="0" width="13" height="476" fill="url(#h54)"/><rect x="636" y="0" width="13" height="476" fill="url(#h55)"/><rect x="648" y="0" width="13" height="476" fill="url(#h56)"/><rect x="660" y="0" width="13" height="476" fill="url(#h57)"/><rect x="672" y="0" width="13" height="476" fill="url(#h58)"/><rect x="684" y="0" width="13" height="476" fill="url(#h59)"/><rect x="696" y="0" width="13" height="476" fill="url(#h60)"/><rect x="708" y="0" width="13" height="476" fill="url(#h61)"/><rect x="720" y="0" width="13" height="476" fill="url(#h62)"/><rect x="732" y="0" width="13" height="476" fill="url(#h63)"/><rect x="744" y="0" width="13" height="476" fill="url(#h64)"/><rect x="756" y="0" width="13" height="476" fill="url(#h65)"/><rect x="768" y="0" width="13" height="476" fill="url(#h66)"/><rect x="780" y="0" width="13" height="476" fill="url(#h67)"/><rect x="792" y="0" width="13" height="476" fill="url(#h68)"/><rect x="804" y="0" width="13" height="476" fill="url(#h69)"/><rect x="816" y="0" width="13" height="476" fill="url(#h70)"/><rect x="828" y="0" width="13" height="476" fill="url(#h71)"/><rect x="840" y="0" width="13" height="476" fill="url(#h72)"/><rect x="852" y="0" width="13" height="476" fill="url(#h73)"/></g></svg><svg class="a" style="left:0;top:0;pointer-events:none" width="1500" height="560" viewBox="0 0 1500 560" font-family="Liberation Sans, sans-serif"><path d="M657.4 53 v3M663.3 53 v3M669.3 50 v6M675.3 53 v3M681.2 53 v3M687.2 53 v3M693.1 53 v3M699.1 53 v3M705.1 53 v3M711.0 53 v3M717.0 53 v3M722.9 53 v3M728.9 50 v6M734.9 53 v3M740.8 53 v3M746.8 53 v3M752.7 53 v3M758.7 53 v3M764.7 53 v3M770.6 53 v3M776.6 53 v3M782.5 53 v3M788.5 50 v6M794.5 53 v3M800.4 53 v3M806.4 53 v3M812.3 53 v3M818.3 53 v3M824.3 53 v3M830.2 53 v3M836.2 53 v3M842.1 53 v3M848.1 50 v6M854.1 53 v3M860.0 53 v3M866.0 53 v3M871.9 53 v3M877.9 53 v3M883.9 53 v3M889.8 53 v3M895.8 53 v3M901.7 53 v3M907.7 50 v6M913.7 53 v3M919.6 53 v3M925.6 53 v3M931.5 53 v3M937.5 53 v3M943.5 53 v3M949.4 53 v3M955.4 53 v3M961.3 53 v3M967.3 50 v6M973.3 53 v3M979.2 53 v3M985.2 53 v3M991.1 53 v3M997.1 53 v3M1003.1 53 v3M1009.0 53 v3M1015.0 53 v3M1020.9 53 v3M1026.9 50 v6M1032.9 53 v3M1038.8 53 v3M1044.8 53 v3M1050.7 53 v3M1056.7 53 v3M1062.7 53 v3M1068.6 53 v3M1074.6 53 v3M1080.5 53 v3M1086.5 50 v6M1092.5 53 v3M1098.4 53 v3M1104.4 53 v3M1110.3 53 v3M1116.3 53 v3M1122.3 53 v3M1128.2 53 v3M1134.2 53 v3M1140.1 53 v3M1146.1 50 v6M1152.1 53 v3M1158.0 53 v3M1164.0 53 v3M1169.9 53 v3M1175.9 53 v3M1181.9 53 v3M1187.8 53 v3M1193.8 53 v3M1199.7 53 v3M1205.7 50 v6M1211.7 53 v3M1217.6 53 v3M1223.6 53 v3M1229.5 53 v3M1235.5 53 v3M1241.5 53 v3M1247.4 53 v3M1253.4 53 v3M1259.3 53 v3M1265.3 50 v6M1271.3 53 v3M1277.2 53 v3M1283.2 53 v3M1289.1 53 v3M1295.1 53 v3M1301.1 53 v3M1307.0 53 v3M1313.0 53 v3M1318.9 53 v3M1324.9 50 v6M1330.9 53 v3M1336.8 53 v3M1342.8 53 v3M1348.7 53 v3M1354.7 53 v3M1360.7 53 v3M1366.6 53 v3M1372.6 53 v3M1378.5 53 v3M1384.5 50 v6M1390.5 53 v3M1396.4 53 v3M1402.4 53 v3M1408.3 53 v3M1414.3 53 v3M1420.3 53 v3M1426.2 53 v3M1432.2 53 v3M1438.1 53 v3M1444.1 50 v6M1450.1 53 v3M1456.0 53 v3M1462.0 53 v3M1467.9 53 v3M1473.9 53 v3M1479.9 53 v3M1485.8 53 v3" stroke="#3a3a3a" stroke-width="1" fill="none"/><path d="M652.5 40 V56" stroke="#777" stroke-width="1"/><text x="788.5" y="49" font-size="10" fill="#222" text-anchor="middle">6m</text><text x="1086.5" y="49" font-size="10" fill="#222" text-anchor="middle">6.5m</text><text x="1384.5" y="49" font-size="10" fill="#222" text-anchor="middle">7m</text><path d="M647 56.0 H652M649 65.9 H652M649 75.8 H652M649 85.8 H652M647 95.7 H652M649 105.6 H652M649 115.5 H652M649 125.4 H652M647 135.4 H652M649 145.3 H652M649 155.2 H652M649 165.1 H652M647 175.0 H652M649 185.0 H652M649 194.9 H652M649 204.8 H652M647 214.7 H652M649 224.6 H652M649 234.6 H652M649 244.5 H652M647 254.4 H652M649 264.3 H652M649 274.2 H652M649 284.2 H652M647 294.1 H652M649 304.0 H652M649 313.9 H652M649 323.8 H652M647 333.8 H652M649 343.7 H652M649 353.6 H652M649 363.5 H652M647 373.4 H652M649 383.4 H652M649 393.3 H652M649 403.2 H652M647 413.1 H652M649 423.0 H652M649 433.0 H652M649 442.9 H652M647 452.8 H652M649 462.7 H652M649 472.6 H652M649 482.6 H652M647 492.5 H652M649 502.4 H652M649 512.3 H652M649 522.2 H652" stroke="#3a3a3a" stroke-width="1" fill="none"/><text x="643" y="59.6" font-size="10.5" fill="#222" text-anchor="middle">6</text><text x="643" y="99.3" font-size="10.5" fill="#222" text-anchor="middle">5</text><text x="643" y="139.0" font-size="10.5" fill="#222" text-anchor="middle">4</text><text x="643" y="178.6" font-size="10.5" fill="#222" text-anchor="middle">3</text><text x="643" y="218.3" font-size="10.5" fill="#222" text-anchor="middle">2</text><text x="643" y="258.0" font-size="10.5" fill="#222" text-anchor="middle">1</text><text x="643" y="297.7" font-size="10.5" fill="#222" text-anchor="middle">1</text><text x="643" y="337.4" font-size="10.5" fill="#222" text-anchor="middle">1</text><text x="643" y="377.0" font-size="10.5" fill="#222" text-anchor="middle">1</text><text x="643" y="416.7" font-size="10.5" fill="#222" text-anchor="middle">9</text><text x="643" y="456.4" font-size="10.5" fill="#222" text-anchor="middle">8</text><text x="643" y="496.1" font-size="10.5" fill="#222" text-anchor="middle">7</text><path d="M1059.5 40 V532" stroke="#e0202a" stroke-width="1"/><circle cx="1059.5" cy="269.5" r="3.6" fill="none" stroke="#e0202a" stroke-width="1.2"/><path d="M1488 67.4 l3.7 -4.2 l3.7 4.2z" fill="#2c3558"/><path d="M1488 521.8 l3.7 4.2 l3.7 -4.2z" fill="#2c3558"/><path d="M663.5 536 l-4.5 4 l4.5 4z" fill="#2c3558"/><path d="M1471.5 536 l4.5 4 l-4.5 4z" fill="#2c3558"/><rect x="1190.5" y="534.5" width="5" height="12" rx="1" fill="#f4f4f4" stroke="#9a9a9a"/><path d="M1192 538v5M1193.5 538v5M1195 538v5" stroke="#555" stroke-width="0.7"/><rect x="1484.5" y="291.5" width="14" height="6" rx="1" fill="#f4f4f4" stroke="#9a9a9a"/><path d="M1489 293h5M1489 294.7h5M1489 296.4h5" stroke="#555" stroke-width="0.7"/></svg>
<div class="a hs" style="left:244px;top:549px;width:1256px"></div>
<!-- overview -->
<div class="a hdr" style="left:245px;top:554px;width:1253.5px"><span>Side scan Overview:&nbsp; (0&gt;0&gt;0): Mouse at: 6.455 m, 1 h, Ø:231 mm (-9.4 %)</span></div>
<svg class="a" style="left:245px;top:569px" width="1009" height="79" viewBox="245 569 1009 79"><defs><clipPath id="oc"><rect x="245" y="569.5" width="1009" height="77.2"/></clipPath><clipPath id="obx"><rect x="837" y="569.5" width="140" height="77.2"/></clipPath><linearGradient id="og" x1="0" y1="0" x2="0" y2="1"><stop offset="0.000" stop-color="#d9d9d9"/><stop offset="0.110" stop-color="#dedede"/><stop offset="0.227" stop-color="#cdcdcd"/><stop offset="0.343" stop-color="#e0e0e0"/><stop offset="0.460" stop-color="#d6d6d6"/><stop offset="0.563" stop-color="#dcdcdc"/><stop offset="0.680" stop-color="#cbcbcb"/><stop offset="0.823" stop-color="#e0e0e0"/><stop offset="1.000" stop-color="#d6d6d6"/></linearGradient><filter id="ob0" x="-50%" y="-20%" width="200%" height="140%"><feGaussianBlur stdDeviation="0.9"/></filter><filter id="ob3" x="-5%" y="-20%" width="110%" height="140%"><feGaussianBlur stdDeviation="5 0"/></filter><filter id="ob1" x="-2%" y="-20%" width="104%" height="140%"><feGaussianBlur stdDeviation="1.7"/></filter><filter id="ob2" x="-2%" y="-20%" width="104%" height="140%"><feGaussianBlur stdDeviation="3 2"/></filter></defs><g clip-path="url(#oc)"><rect x="245" y="569.5" width="1009" height="77.2" fill="url(#og)"/><g filter="url(#ob3)"><rect x="300" y="560" width="40" height="99" fill="#e6e6e6" opacity="0.60"/><rect x="615" y="560" width="7" height="99" fill="#bdbdbd" opacity="0.45"/><rect x="470" y="560" width="60" height="99" fill="#e4e4e4" opacity="0.50"/><rect x="700" y="560" width="60" height="99" fill="#e2e2e2" opacity="0.50"/><rect x="762" y="560" width="14" height="99" fill="#e8e8e8" opacity="0.60"/></g><g filter="url(#ob2)"><ellipse cx="273.0" cy="605.0" rx="27.0" ry="3.5" fill="#2fd62f" opacity="0.95"/><ellipse cx="376.0" cy="605.0" rx="26.0" ry="4.0" fill="#2fd62f"/><ellipse cx="420.0" cy="606.0" rx="22.0" ry="2.0" fill="#2fd62f" opacity="0.45"/><ellipse cx="284.0" cy="604.5" rx="8.0" ry="2.0" fill="#2fd62f" opacity="0.60"/><ellipse cx="370.0" cy="572.0" rx="16.0" ry="2.0" fill="#2fd62f" opacity="0.50"/><ellipse cx="434.0" cy="573.0" rx="34.0" ry="3.0" fill="#2fd62f" opacity="0.75"/><ellipse cx="540.0" cy="573.0" rx="24.0" ry="3.0" fill="#2fd62f" opacity="0.70"/><ellipse cx="652.0" cy="572.0" rx="16.0" ry="2.0" fill="#2fd62f" opacity="0.50"/><ellipse cx="700.0" cy="572.0" rx="8.0" ry="1.5" fill="#2fd62f" opacity="0.30"/><ellipse cx="396.0" cy="586.0" rx="38.0" ry="3.0" fill="#ee6a6a" opacity="0.55"/><ellipse cx="396.0" cy="623.0" rx="38.0" ry="3.5" fill="#ee6a6a" opacity="0.60"/><ellipse cx="542.0" cy="592.0" rx="20.0" ry="2.5" fill="#ee6a6a" opacity="0.50"/><ellipse cx="658.0" cy="590.0" rx="22.0" ry="1.8" fill="#ee6a6a" opacity="0.40"/><ellipse cx="655.0" cy="623.0" rx="20.0" ry="1.5" fill="#ee6a6a" opacity="0.25"/><ellipse cx="398.0" cy="645.0" rx="44.0" ry="2.5" fill="#2fd62f" opacity="0.50"/><ellipse cx="540.0" cy="609.0" rx="17.0" ry="2.0" fill="#2fd62f" opacity="0.45"/><ellipse cx="545.0" cy="647.0" rx="14.0" ry="2.0" fill="#2fd62f" opacity="0.40"/><ellipse cx="270.0" cy="647.0" rx="20.0" ry="1.5" fill="#2fd62f" opacity="0.30"/></g><g filter="url(#ob1)"><ellipse cx="627.5" cy="608.0" rx="9.0" ry="3.6" fill="#22d422"/><path d="M342.5 568 L352.5 568 L348.6 588 L348 600 L347 600 L346.4 588Z" fill="#0a7a70"/><path d="M344 568 L351 568 L348 582 L347 582Z" fill="#0b4fa8"/><path d="M347.5 586 V603" stroke="#22d422" stroke-width="1.6"/></g><g filter="url(#ob0)"><ellipse cx="347.6" cy="620.0" rx="5.6" ry="12.0" fill="#d01808"/><ellipse cx="347.6" cy="620.0" rx="3.9" ry="9.8" fill="#ff8a00"/><ellipse cx="347.6" cy="619.5" rx="2.9" ry="8.0" fill="#fff040"/></g><g filter="url(#ob1)"><ellipse cx="347.0" cy="644.0" rx="7.0" ry="4.0" fill="#18c040"/><ellipse cx="347.0" cy="646.0" rx="4.0" ry="2.5" fill="#0a6a80"/></g><g filter="url(#ob1)"><path d="M781 572.0 L787 572.0 L793 572.0 L799 572.0 L805 572.0 L811 572.0 L817 572.0 L823 572.0 L829 572.0 L835 572.0 L841 572.0 L847 572.0" stroke="#0be00b" stroke-width="6.5" fill="none" stroke-linecap="round"/><path d="M781 606.0 L787 606.0 L793 606.0 L799 606.0 L805 606.0 L811 606.0 L817 606.0 L823 606.0 L829 606.0 L835 606.0 L841 606.0 L847 606.0" stroke="#0be00b" stroke-width="9.0" fill="none" stroke-linecap="round"/><path d="M784 643.5 L790 643.5 L796 643.5 L802 643.5 L808 643.5 L814 643.5 L820 643.5 L826 643.5 L832 643.5 L838 643.5 L844 643.5 L850 643.5" stroke="#0be00b" stroke-width="7.5" fill="none" stroke-linecap="round"/><ellipse cx="816.0" cy="606.0" rx="12.0" ry="3.0" fill="#0a9a60" opacity="0.80"/><ellipse cx="835.0" cy="587.5" rx="46.0" ry="4.9" fill="#fa1a1a"/><ellipse cx="842.0" cy="623.0" rx="48.0" ry="6.6" fill="#fa1a1a"/><path d="M965 572.0 L971 572.0 L977 572.0 L983 572.0 L989 572.0 L995 572.0 L1001 572.0 L1007 572.0 L1013 572.0" stroke="#0be00b" stroke-width="6.0" fill="none" stroke-linecap="round"/><path d="M1052 571.0 L1058 571.1 L1064 571.2 L1070 571.3 L1076 571.4 L1082 571.5 L1088 571.5 L1094 571.6 L1100 571.6 L1106 571.6 L1112 571.6 L1118 571.6 L1124 571.5 L1130 571.5 L1136 571.4 L1142 571.3 L1148 571.2 L1154 571.1 L1160 571.0 L1166 570.9 L1172 570.8 L1178 570.7 L1184 570.6 L1190 570.6 L1196 570.5 L1202 570.5 L1208 570.4 L1214 570.4 L1220 570.4 L1226 570.4 L1232 570.5 L1238 570.5 L1244 570.6 L1250 570.6 L1256 570.7" stroke="#0be00b" stroke-width="5.5" fill="none" stroke-linecap="round" opacity="0.90"/><path d="M1100 571.0 L1106 571.0 L1112 571.0 L1118 571.0 L1124 571.0 L1130 571.0 L1136 571.0 L1142 571.0 L1148 571.0 L1154 571.0 L1160 571.0 L1166 571.0 L1172 571.0 L1178 571.0" stroke="#0be00b" stroke-width="6.5" fill="none" stroke-linecap="round"/><path d="M965 605.8 L971 605.8 L977 605.8 L983 605.8 L989 605.8 L995 605.8 L1001 605.8 L1007 605.8 L1013 605.8 L1019 605.8" stroke="#0be00b" stroke-width="8.5" fill="none" stroke-linecap="round"/><path d="M1020 606.1 L1026 606.3 L1032 606.4 L1038 606.6 L1044 606.7 L1050 606.7 L1056 606.8 L1062 606.8 L1068 606.8 L1074 606.7 L1080 606.6 L1086 606.5 L1092 606.4 L1098 606.2 L1104 606.0 L1110 605.9 L1116 605.6 L1122 605.4 L1128 605.2 L1134 605.0 L1140 604.9 L1146 604.7 L1152 604.5 L1158 604.4 L1164 604.3 L1170 604.2 L1176 604.2 L1182 604.2 L1188 604.2 L1194 604.3 L1200 604.4 L1206 604.5 L1212 604.6 L1218 604.8 L1224 605.0 L1230 605.2 L1236 605.4 L1242 605.6 L1248 605.8 L1254 606.0 L1260 606.2" stroke="#0be00b" stroke-width="6.5" fill="none" stroke-linecap="round"/><path d="M965 644.0 L971 644.0 L977 644.0 L983 644.0 L989 644.0 L995 644.0 L1001 644.0 L1007 644.0 L1013 644.0" stroke="#0be00b" stroke-width="7.5" fill="none" stroke-linecap="round"/><path d="M1050 645.1 L1056 645.1 L1062 645.2 L1068 645.2 L1074 645.2 L1080 645.2 L1086 645.2 L1092 645.1 L1098 645.1 L1104 645.0 L1110 644.9 L1116 644.8 L1122 644.7 L1128 644.6 L1134 644.5 L1140 644.4 L1146 644.3 L1152 644.2 L1158 644.1 L1164 644.0 L1170 644.0 L1176 643.9 L1182 643.9 L1188 643.8 L1194 643.8 L1200 643.8 L1206 643.8 L1212 643.8 L1218 643.9 L1224 643.9 L1230 644.0 L1236 644.1 L1242 644.2 L1248 644.3 L1254 644.4 L1260 644.5" stroke="#0be00b" stroke-width="6.5" fill="none" stroke-linecap="round" opacity="0.95"/><path d="M1010 588.3 L1016 588.5 L1022 588.7 L1028 588.8 L1034 589.0 L1040 589.1 L1046 589.2 L1052 589.3 L1058 589.4 L1064 589.4 L1070 589.4 L1076 589.4 L1082 589.3 L1088 589.2 L1094 589.1 L1100 589.0 L1106 588.9 L1112 588.7 L1118 588.5 L1124 588.3 L1130 588.1 L1136 587.9 L1142 587.7 L1148 587.5 L1154 587.3 L1160 587.2 L1166 587.0 L1172 586.9 L1178 586.8 L1184 586.7 L1190 586.6 L1196 586.6 L1202 586.6 L1208 586.6 L1214 586.7 L1220 586.8 L1226 586.9 L1232 587.0 L1238 587.1 L1244 587.3 L1250 587.5 L1256 587.7" stroke="#ee4e4e" stroke-width="8.0" fill="none" stroke-linecap="round" opacity="0.70"/><path d="M1110 588.5 L1116 588.6 L1122 588.7 L1128 588.8 L1134 588.9 L1140 588.9 L1146 589.0 L1152 589.0 L1158 589.1 L1164 589.1 L1170 589.1 L1176 589.1 L1182 589.1 L1188 589.0 L1194 588.9 L1200 588.9" stroke="#f03a3a" stroke-width="7.0" fill="none" stroke-linecap="round" opacity="0.80"/><path d="M1010 623.8 L1016 623.9 L1022 624.1 L1028 624.2 L1034 624.3 L1040 624.4 L1046 624.4 L1052 624.4 L1058 624.4 L1064 624.3 L1070 624.3 L1076 624.2 L1082 624.0 L1088 623.9 L1094 623.7 L1100 623.5 L1106 623.4 L1112 623.2 L1118 623.0 L1124 622.8 L1130 622.6 L1136 622.4 L1142 622.2 L1148 622.1 L1154 621.9 L1160 621.8 L1166 621.7 L1172 621.6 L1178 621.6 L1184 621.6 L1190 621.6 L1196 621.7 L1202 621.7 L1208 621.8 L1214 622.0 L1220 622.1 L1226 622.3 L1232 622.5 L1238 622.6 L1244 622.8 L1250 623.0 L1256 623.2" stroke="#ee4e4e" stroke-width="8.0" fill="none" stroke-linecap="round" opacity="0.70"/><path d="M1060 623.6 L1066 623.7 L1072 623.8 L1078 623.9 L1084 623.9 L1090 624.0 L1096 624.0 L1102 624.0 L1108 624.0 L1114 624.0 L1120 623.9 L1126 623.8 L1132 623.7 L1138 623.6 L1144 623.5 L1150 623.4 L1156 623.3 L1162 623.1 L1168 623.0 L1174 622.8 L1180 622.7 L1186 622.6 L1192 622.4 L1198 622.3" stroke="#f03a3a" stroke-width="7.0" fill="none" stroke-linecap="round" opacity="0.80"/><ellipse cx="985.0" cy="587.5" rx="32.0" ry="4.6" fill="#f23a3a"/><ellipse cx="990.0" cy="623.0" rx="36.0" ry="6.2" fill="#fa1a1a"/></g><g clip-path="url(#obx)"><use href="#hm" transform="translate(837 569.9) scale(0.16847 0.16092)"/></g><rect x="837" y="570" width="140" height="76.5" fill="none" stroke="#c81414" stroke-width="1.3" stroke-dasharray="2 2"/><path d="M907.3 569.5 V646.7" stroke="#d02020" stroke-width="1"/><circle cx="907.3" cy="604.9" r="3.7" fill="none" stroke="#b01878" stroke-width="1.2"/></svg><div class="a" style="left:1477px;top:579px;width:21px;height:216px;background:#f1f1f1"></div><div class="a" style="left:1477px;top:596px;width:20px;height:199px;background:#efefef;border:1px solid #d6d6d6;border-bottom:none"></div><svg class="a" style="left:1470px;top:555px" width="30" height="240" viewBox="1470 555 30 240"><path d="M1483.7 590 l4 -4.5 l4 4.5z" fill="#2c3558"/><path d="M1485 703.5h5M1485 705.5h5M1485 707.5h5" stroke="#666" stroke-width="0.8"/><path d="M1487 558 l6 6 M1493 558 l-6 6" stroke="#0d1f7a" stroke-width="1.6"/></svg>
<svg class="a" style="left:0;top:40px" width="1500" height="16" viewBox="0 40 1500 16"><path d="M226.5 45 l5.5 5.5 M232 45 l-5.5 5.5 M619.5 45 l5.5 5.5 M625 45 l-5.5 5.5" stroke="#0d1f7a" stroke-width="1.6" fill="none"/><path d="M35 44.5h1.5M35 47.5h1.5M35 50.5h1.5" stroke="#1a2a60" stroke-width="1.3"/><path d="M36 45.5h1.5M36 48.5h1.5M36 51.5h1.5" stroke="#fff" stroke-width="1"/><path d="M247 44.5h1.5M247 47.5h1.5M247 50.5h1.5" stroke="#1a2a60" stroke-width="1.3"/><path d="M248 45.5h1.5M248 48.5h1.5M248 51.5h1.5" stroke="#fff" stroke-width="1"/></svg><svg class="a" style="left:244px;top:554px" width="20" height="14" viewBox="244 554 20 14"><path d="M247 557.5h1.5M247 560.5h1.5M247 563.5h1.5" stroke="#1a2a60" stroke-width="1.3"/><path d="M248 558.5h1.5M248 561.5h1.5M248 564.5h1.5" stroke="#fff" stroke-width="1"/></svg>
<div class="a" id="status"></div>
<svg class="a" style="left:0;top:796px" width="1500" height="21" viewBox="0 796 1500 21" font-family="Liberation Sans, sans-serif"><path d="M0 803 H5 V800.5 L11.5 806 L5 811.5 V809 H0Z" fill="#2aa0a8" stroke="#187078" stroke-width="0.6"/><path d="M0 804.5h4M0 806h5M0 807.5h4" stroke="#bfeaea" stroke-width="0.7"/><circle cx="25" cy="822" r="12.5" fill="#dcdcdc" stroke="#333" stroke-width="1.4"/><text x="20" y="811.2" font-size="11.3" fill="#1f2f55" textLength="168.5" lengthAdjust="spacingAndGlyphs">Dist.:6.455 m, 1 h, Ø:231 mm (-9.4 %)</text><text x="256" y="811.6" font-size="10.5" fill="#1f2f55">0.0 %</text><text x="289.5" y="805.6" font-size="10.5" fill="#1f2f55">Ø 255</text><text x="289.5" y="817.4" font-size="10.5" fill="#1f2f55">mm</text><rect x="1276.5" y="799.5" width="105" height="20" rx="2" fill="#fbfbfb" stroke="#8a8a8a"/><text x="1280" y="812.8" font-size="12" fill="#555" textLength="97" lengthAdjust="spacingAndGlyphs">Show hidden icons</text></svg>
</body></html>
